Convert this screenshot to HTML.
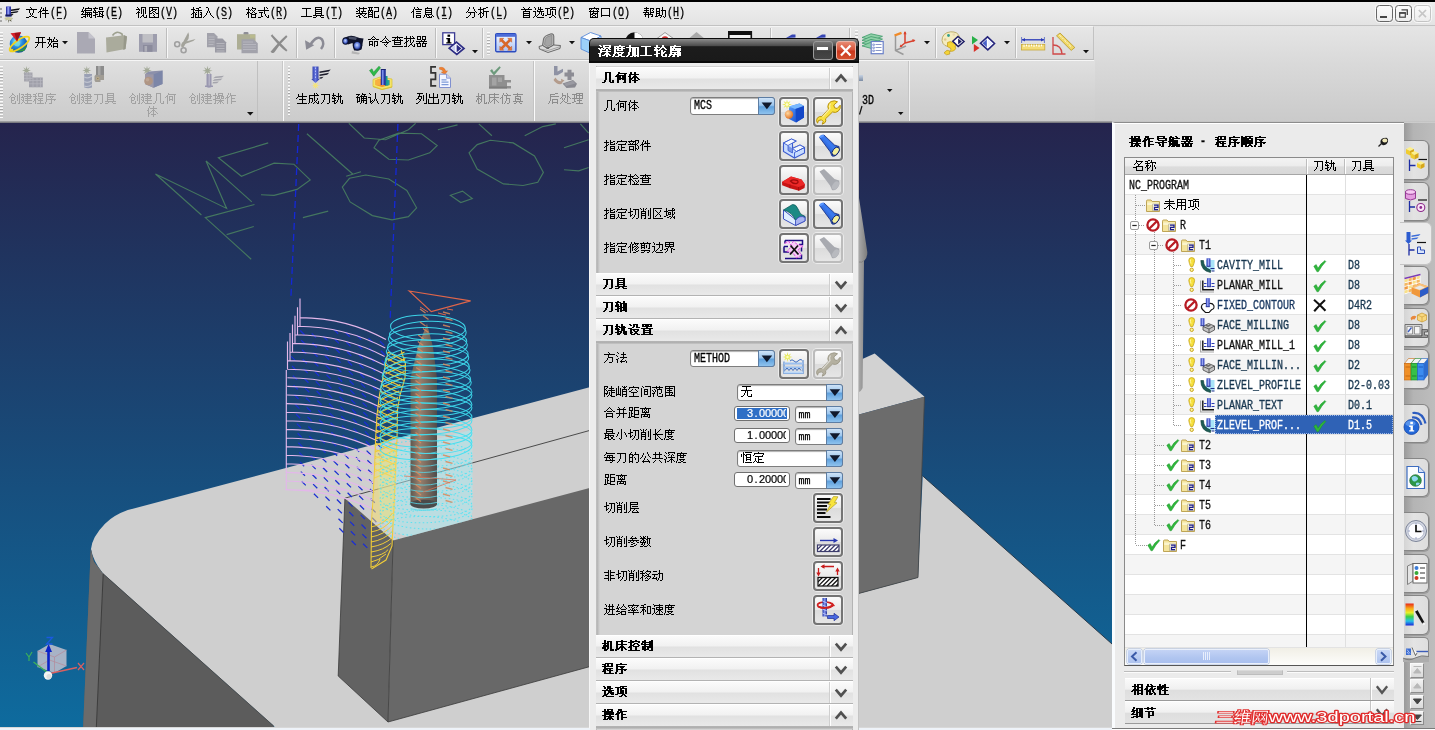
<!DOCTYPE html>
<html lang="zh"><head><meta charset="utf-8"><title>NX CAM</title>
<style>
html,body{margin:0;padding:0;background:#fff;}
body{width:1435px;height:730px;overflow:hidden;font-family:"Liberation Sans",sans-serif;font-size:12px;}
#app{position:relative;width:1435px;height:730px;overflow:hidden;background:#d8d8d8;will-change:transform;}
#app div,#app svg,#app span{position:absolute;box-sizing:border-box;}
#app svg{overflow:visible;}
.t{white-space:pre;height:14px;}
.t svg{left:0;top:0;stroke:currentColor;stroke-width:1;fill:none;shape-rendering:crispEdges;}
.m{font-family:"Liberation Mono",monospace;font-size:12px;line-height:12px;transform:scaleX(.8333);transform-origin:0 0;white-space:pre;letter-spacing:0;-webkit-text-stroke:.3px currentColor;}
.m.b{font-weight:bold;}
.n{white-space:nowrap;height:13px;line-height:13px;font-size:11px;direction:ltr;}
#app .n .d{position:static;display:inline-block;width:6px;text-align:center;-webkit-text-stroke:.2px currentColor;}
.m.s{font-size:10px;transform:none;-webkit-text-stroke:.25px currentColor;}
#app .sr{width:1px;height:1px;overflow:hidden;clip:rect(0 0 0 0);clip-path:inset(50%);opacity:0;font-size:1px;left:0;top:0;}

</style></head>
<body>
<svg width="0" height="0" style="position:absolute"><defs><path id="g12_6587" d="M4 0.5h1M5 1.5h1M0 2.5h11M3 3.5h1M7 3.5h1M3 4.5h1M7 4.5h1M3 5.5h1M7 5.5h1M4 6.5h1M6 6.5h1M4 7.5h1M6 7.5h1M5 8.5h1M3 9.5h2M6 9.5h2M0 10.5h3M8 10.5h3"/><path id="g12_4ef6" d="M3 0.5h1M7 0.5h1M3 1.5h1M5 1.5h1M7 1.5h1M2 2.5h1M5 2.5h1M7 2.5h1M2 3.5h1M4 3.5h6M1 4.5h3M7 4.5h1M0 5.5h1M2 5.5h1M7 5.5h1M2 6.5h1M4 6.5h7M2 7.5h1M7 7.5h1M2 8.5h1M7 8.5h1M2 9.5h1M7 9.5h1M2 10.5h1M7 10.5h1"/><path id="g12_7f16" d="M2 0.5h1M7 0.5h1M2 1.5h1M4 1.5h7M1 2.5h1M4 2.5h1M10 2.5h1M1 3.5h1M3 3.5h8M0 4.5h3M4 4.5h1M2 5.5h1M4 5.5h7M1 6.5h1M4 6.5h1M6 6.5h1M8 6.5h1M10 6.5h1M0 7.5h11M4 8.5h1M6 8.5h1M8 8.5h1M10 8.5h1M2 9.5h3M6 9.5h1M8 9.5h1M10 9.5h1M0 10.5h2M4 10.5h1M9 10.5h2"/><path id="g12_8f91" d="M2 0.5h1M6 0.5h4M0 1.5h5M6 1.5h1M9 1.5h1M1 2.5h1M6 2.5h4M1 3.5h2M0 4.5h1M2 4.5h1M5 4.5h6M0 5.5h5M6 5.5h1M9 5.5h1M2 6.5h1M6 6.5h2M9 6.5h1M2 7.5h3M6 7.5h1M8 7.5h2M0 8.5h3M6 8.5h1M9 8.5h2M2 9.5h1M4 9.5h6M2 10.5h1M9 10.5h1"/><path id="g12_89c6" d="M1 0.5h1M5 0.5h5M2 1.5h1M5 1.5h1M9 1.5h1M0 2.5h4M5 2.5h1M7 2.5h1M9 2.5h1M3 3.5h1M5 3.5h1M7 3.5h1M9 3.5h1M2 4.5h1M5 4.5h1M7 4.5h1M9 4.5h1M1 5.5h3M5 5.5h1M7 5.5h1M9 5.5h1M0 6.5h1M2 6.5h1M5 6.5h1M7 6.5h1M9 6.5h1M2 7.5h1M7 7.5h1M2 8.5h1M6 8.5h2M10 8.5h1M2 9.5h1M5 9.5h1M7 9.5h1M10 9.5h1M2 10.5h1M4 10.5h1M8 10.5h3"/><path id="g12_56fe" d="M1 0.5h10M1 1.5h1M4 1.5h1M10 1.5h1M1 2.5h1M4 2.5h5M10 2.5h1M1 3.5h1M3 3.5h2M7 3.5h1M10 3.5h1M1 4.5h2M5 4.5h2M10 4.5h1M1 5.5h1M4 5.5h1M7 5.5h1M10 5.5h1M1 6.5h3M5 6.5h1M8 6.5h3M1 7.5h1M6 7.5h1M10 7.5h1M1 8.5h1M5 8.5h1M10 8.5h1M1 9.5h1M6 9.5h1M10 9.5h1M1 10.5h10"/><path id="g12_63d2" d="M2 0.5h1M8 0.5h2M2 1.5h1M5 1.5h3M0 2.5h4M7 2.5h1M2 3.5h1M4 3.5h7M2 4.5h1M7 4.5h1M2 5.5h2M5 5.5h1M7 5.5h1M9 5.5h2M1 6.5h2M4 6.5h1M7 6.5h1M10 6.5h1M0 7.5h1M2 7.5h1M4 7.5h2M7 7.5h1M9 7.5h2M2 8.5h1M4 8.5h1M7 8.5h1M10 8.5h1M2 9.5h1M4 9.5h1M7 9.5h1M10 9.5h1M0 10.5h3M4 10.5h7"/><path id="g12_5165" d="M3 0.5h2M5 1.5h1M5 2.5h1M5 3.5h1M4 4.5h1M6 4.5h1M4 5.5h1M6 5.5h1M3 6.5h1M7 6.5h1M3 7.5h1M7 7.5h1M2 8.5h1M8 8.5h1M1 9.5h1M9 9.5h1M0 10.5h1M10 10.5h1"/><path id="g12_683c" d="M2 0.5h1M6 0.5h1M2 1.5h1M6 1.5h4M0 2.5h4M5 2.5h1M9 2.5h1M2 3.5h1M4 3.5h1M6 3.5h1M8 3.5h1M2 4.5h1M7 4.5h1M1 5.5h3M6 5.5h1M8 5.5h1M1 6.5h2M4 6.5h2M9 6.5h2M0 7.5h1M2 7.5h1M5 7.5h5M2 8.5h1M5 8.5h1M9 8.5h1M2 9.5h1M5 9.5h1M9 9.5h1M2 10.5h1M5 10.5h5"/><path id="g12_5f0f" d="M6 0.5h1M8 0.5h1M6 1.5h1M9 1.5h1M6 2.5h1M0 3.5h11M6 4.5h1M1 5.5h4M6 5.5h1M3 6.5h1M6 6.5h1M3 7.5h1M7 7.5h1M3 8.5h1M7 8.5h1M10 8.5h1M3 9.5h2M8 9.5h1M10 9.5h1M0 10.5h3M9 10.5h2"/><path id="g12_5de5" d="M1 1.5h9M5 2.5h1M5 3.5h1M5 4.5h1M5 5.5h1M5 6.5h1M5 7.5h1M5 8.5h1M0 9.5h11"/><path id="g12_5177" d="M2 0.5h7M2 1.5h1M8 1.5h1M2 2.5h7M2 3.5h1M8 3.5h1M2 4.5h7M2 5.5h1M8 5.5h1M2 6.5h7M2 7.5h1M8 7.5h1M0 8.5h11M3 9.5h1M7 9.5h1M0 10.5h3M8 10.5h3"/><path id="g12_88c5" d="M3 0.5h1M7 0.5h1M0 1.5h1M3 1.5h8M1 2.5h1M3 2.5h1M7 2.5h1M2 3.5h2M7 3.5h1M0 4.5h2M3 4.5h1M5 4.5h5M3 5.5h1M6 5.5h1M0 6.5h11M4 7.5h2M9 7.5h1M2 8.5h2M6 8.5h1M8 8.5h1M0 9.5h2M3 9.5h1M7 9.5h1M3 10.5h2M8 10.5h3"/><path id="g12_914d" d="M0 0.5h5M6 0.5h5M1 1.5h1M3 1.5h1M10 1.5h1M1 2.5h1M3 2.5h1M10 2.5h1M0 3.5h5M10 3.5h1M0 4.5h1M2 4.5h1M4 4.5h1M6 4.5h5M0 5.5h2M3 5.5h2M6 5.5h1M0 6.5h1M4 6.5h1M6 6.5h1M0 7.5h5M6 7.5h1M0 8.5h1M4 8.5h1M6 8.5h1M10 8.5h1M0 9.5h5M6 9.5h1M10 9.5h1M0 10.5h1M4 10.5h1M6 10.5h5"/><path id="g12_4fe1" d="M3 0.5h1M6 0.5h1M3 1.5h1M7 1.5h1M2 2.5h1M4 2.5h7M2 3.5h1M1 4.5h2M5 4.5h5M0 5.5h1M2 5.5h1M2 6.5h1M5 6.5h5M2 7.5h1M2 8.5h1M5 8.5h5M2 9.5h1M5 9.5h1M9 9.5h1M2 10.5h1M5 10.5h5"/><path id="g12_606f" d="M4 0.5h1M2 1.5h7M2 2.5h1M8 2.5h1M2 3.5h7M2 4.5h1M8 4.5h1M2 5.5h7M2 6.5h1M8 6.5h1M2 7.5h7M1 8.5h1M3 8.5h1M5 8.5h1M9 8.5h1M1 9.5h1M3 9.5h1M6 9.5h1M8 9.5h1M10 9.5h1M0 10.5h1M4 10.5h5"/><path id="g12_5206" d="M3 0.5h1M7 0.5h1M3 1.5h1M7 1.5h1M2 2.5h1M8 2.5h1M2 3.5h1M8 3.5h1M1 4.5h1M9 4.5h1M0 5.5h1M2 5.5h7M10 5.5h1M4 6.5h1M8 6.5h1M4 7.5h1M8 7.5h1M3 8.5h1M8 8.5h1M2 9.5h1M8 9.5h1M0 10.5h2M6 10.5h2"/><path id="g12_6790" d="M2 0.5h1M8 0.5h2M2 1.5h1M5 1.5h3M0 2.5h6M2 3.5h1M5 3.5h1M2 4.5h1M5 4.5h6M2 5.5h2M5 5.5h1M8 5.5h1M1 6.5h2M4 6.5h2M8 6.5h1M0 7.5h1M2 7.5h1M5 7.5h1M8 7.5h1M2 8.5h1M5 8.5h1M8 8.5h1M2 9.5h1M4 9.5h1M8 9.5h1M2 10.5h2M8 10.5h1"/><path id="g12_9996" d="M2 0.5h1M8 0.5h1M3 1.5h1M7 1.5h1M0 2.5h11M4 3.5h1M2 4.5h7M2 5.5h1M8 5.5h1M2 6.5h7M2 7.5h1M8 7.5h1M2 8.5h7M2 9.5h1M8 9.5h1M2 10.5h7"/><path id="g12_9009" d="M1 0.5h1M5 0.5h1M7 0.5h1M2 1.5h1M5 1.5h1M7 1.5h1M2 2.5h1M5 2.5h5M4 3.5h1M7 3.5h1M0 4.5h3M4 4.5h7M2 5.5h1M6 5.5h1M8 5.5h1M2 6.5h1M6 6.5h1M8 6.5h1M10 6.5h1M2 7.5h1M5 7.5h1M8 7.5h1M10 7.5h1M2 8.5h1M4 8.5h1M9 8.5h2M1 9.5h1M3 9.5h1M0 10.5h1M4 10.5h7"/><path id="g12_9879" d="M5 0.5h6M0 1.5h5M7 1.5h1M2 2.5h1M5 2.5h6M2 3.5h1M5 3.5h1M10 3.5h1M2 4.5h1M5 4.5h1M7 4.5h1M10 4.5h1M2 5.5h1M5 5.5h1M7 5.5h1M10 5.5h1M2 6.5h1M5 6.5h1M7 6.5h1M10 6.5h1M2 7.5h4M7 7.5h1M10 7.5h1M0 8.5h2M7 8.5h2M6 9.5h1M9 9.5h1M4 10.5h2M10 10.5h1"/><path id="g12_7a97" d="M6 0.5h1M1 1.5h10M1 2.5h1M3 2.5h1M8 2.5h1M10 2.5h1M2 3.5h1M5 3.5h1M9 3.5h1M1 4.5h10M2 5.5h1M5 5.5h1M9 5.5h1M2 6.5h1M4 6.5h6M2 7.5h3M7 7.5h1M9 7.5h1M2 8.5h1M5 8.5h2M9 8.5h1M2 9.5h1M4 9.5h1M7 9.5h1M9 9.5h1M2 10.5h8"/><path id="g12_53e3" d="M1 1.5h9M1 2.5h1M9 2.5h1M1 3.5h1M9 3.5h1M1 4.5h1M9 4.5h1M1 5.5h1M9 5.5h1M1 6.5h1M9 6.5h1M1 7.5h1M9 7.5h1M1 8.5h9M1 9.5h1M9 9.5h1"/><path id="g12_5e2e" d="M3 0.5h1M1 1.5h5M7 1.5h4M3 2.5h1M7 2.5h1M10 2.5h1M1 3.5h5M7 3.5h1M9 3.5h1M3 4.5h1M7 4.5h1M10 4.5h1M0 5.5h6M7 5.5h4M2 6.5h1M5 6.5h1M7 6.5h1M1 7.5h9M2 8.5h1M5 8.5h1M9 8.5h1M2 9.5h1M5 9.5h1M8 9.5h2M5 10.5h1"/><path id="g12_52a9" d="M7 0.5h1M1 1.5h4M7 1.5h1M1 2.5h1M4 2.5h1M7 2.5h1M1 3.5h1M4 3.5h1M6 3.5h5M1 4.5h4M7 4.5h1M10 4.5h1M1 5.5h1M4 5.5h1M7 5.5h1M10 5.5h1M1 6.5h4M7 6.5h1M10 6.5h1M1 7.5h1M4 7.5h1M7 7.5h1M10 7.5h1M1 8.5h1M3 8.5h4M10 8.5h1M0 9.5h3M6 9.5h1M8 9.5h1M10 9.5h1M5 10.5h1M9 10.5h1"/><path id="g12_5f00" d="M1 0.5h9M3 1.5h1M7 1.5h1M3 2.5h1M7 2.5h1M3 3.5h1M7 3.5h1M3 4.5h1M7 4.5h1M0 5.5h11M3 6.5h1M7 6.5h1M2 7.5h1M7 7.5h1M2 8.5h1M7 8.5h1M1 9.5h1M7 9.5h1M0 10.5h1M7 10.5h1"/><path id="g12_59cb" d="M2 0.5h1M7 0.5h1M2 1.5h1M7 1.5h1M0 2.5h5M6 2.5h1M9 2.5h1M2 3.5h1M4 3.5h1M6 3.5h1M10 3.5h1M2 4.5h1M4 4.5h7M1 5.5h1M4 5.5h1M1 6.5h1M3 6.5h1M6 6.5h5M2 7.5h2M6 7.5h1M10 7.5h1M2 8.5h1M4 8.5h1M6 8.5h1M10 8.5h1M1 9.5h1M4 9.5h1M6 9.5h5M0 10.5h1M6 10.5h1M10 10.5h1"/><path id="g12_547d" d="M5 0.5h1M4 1.5h1M6 1.5h1M3 2.5h1M7 2.5h1M0 3.5h3M4 3.5h3M8 3.5h3M1 5.5h4M6 5.5h4M1 6.5h1M4 6.5h1M6 6.5h1M9 6.5h1M1 7.5h1M4 7.5h1M6 7.5h1M9 7.5h1M1 8.5h4M6 8.5h1M9 8.5h1M1 9.5h1M4 9.5h1M6 9.5h1M8 9.5h2M6 10.5h1"/><path id="g12_4ee4" d="M5 0.5h1M5 1.5h1M4 2.5h1M6 2.5h1M3 3.5h1M7 3.5h1M2 4.5h1M5 4.5h1M8 4.5h1M0 5.5h2M6 5.5h1M9 5.5h2M2 6.5h7M7 7.5h1M4 8.5h1M6 8.5h1M5 9.5h1M6 10.5h1"/><path id="g12_67e5" d="M5 0.5h1M0 1.5h11M3 2.5h1M5 2.5h1M7 2.5h1M2 3.5h1M5 3.5h1M8 3.5h1M0 4.5h11M2 5.5h1M8 5.5h1M2 6.5h7M2 7.5h1M8 7.5h1M2 8.5h7M0 10.5h11"/><path id="g12_627e" d="M2 0.5h1M6 0.5h1M8 0.5h1M2 1.5h1M6 1.5h1M9 1.5h1M0 2.5h11M2 3.5h1M6 3.5h1M2 4.5h1M4 4.5h1M6 4.5h1M9 4.5h1M2 5.5h2M6 5.5h1M9 5.5h1M1 6.5h2M6 6.5h1M8 6.5h1M0 7.5h1M2 7.5h1M7 7.5h1M2 8.5h1M6 8.5h2M10 8.5h1M2 9.5h1M5 9.5h1M8 9.5h1M10 9.5h1M0 10.5h3M4 10.5h1M9 10.5h2"/><path id="g12_5668" d="M1 0.5h4M6 0.5h4M1 1.5h1M4 1.5h1M6 1.5h1M9 1.5h1M1 2.5h1M4 2.5h1M6 2.5h1M9 2.5h1M1 3.5h4M6 3.5h4M5 4.5h1M8 4.5h1M0 5.5h11M3 6.5h1M7 6.5h1M0 7.5h5M6 7.5h5M1 8.5h1M4 8.5h1M6 8.5h1M9 8.5h1M1 9.5h1M4 9.5h1M6 9.5h1M9 9.5h1M1 10.5h4M6 10.5h4"/><path id="g12_521b" d="M3 0.5h1M10 0.5h1M3 1.5h2M10 1.5h1M2 2.5h1M5 2.5h1M8 2.5h1M10 2.5h1M1 3.5h1M6 3.5h1M8 3.5h1M10 3.5h1M0 4.5h1M2 4.5h4M8 4.5h1M10 4.5h1M2 5.5h1M5 5.5h1M8 5.5h1M10 5.5h1M2 6.5h1M5 6.5h1M8 6.5h1M10 6.5h1M2 7.5h3M8 7.5h1M10 7.5h1M2 8.5h1M6 8.5h1M10 8.5h1M2 9.5h1M6 9.5h1M10 9.5h1M3 10.5h4M9 10.5h2"/><path id="g12_5efa" d="M6 0.5h1M0 1.5h3M4 1.5h6M2 2.5h1M6 2.5h1M9 2.5h1M1 3.5h1M3 3.5h8M0 4.5h3M6 4.5h1M9 4.5h1M2 5.5h1M4 5.5h6M0 6.5h1M2 6.5h1M6 6.5h1M1 7.5h2M4 7.5h7M2 8.5h1M6 8.5h1M1 9.5h1M3 9.5h1M6 9.5h1M0 10.5h1M4 10.5h7"/><path id="g12_7a0b" d="M3 0.5h1M5 0.5h5M0 1.5h3M5 1.5h1M9 1.5h1M2 2.5h1M5 2.5h1M9 2.5h1M0 3.5h4M5 3.5h5M2 4.5h1M2 5.5h2M5 5.5h5M1 6.5h2M4 6.5h1M7 6.5h1M1 7.5h2M5 7.5h5M0 8.5h1M2 8.5h1M7 8.5h1M2 9.5h1M7 9.5h1M2 10.5h1M4 10.5h7"/><path id="g12_5e8f" d="M5 0.5h1M1 1.5h10M1 2.5h1M1 3.5h1M3 3.5h6M1 4.5h1M5 4.5h1M7 4.5h1M1 5.5h1M6 5.5h1M1 6.5h10M1 7.5h1M6 7.5h1M9 7.5h1M1 8.5h1M6 8.5h1M0 9.5h1M6 9.5h1M0 10.5h1M4 10.5h3"/><path id="g12_5200" d="M1 1.5h9M4 2.5h1M9 2.5h1M4 3.5h1M9 3.5h1M4 4.5h1M9 4.5h1M4 5.5h1M9 5.5h1M4 6.5h1M9 6.5h1M3 7.5h1M9 7.5h1M3 8.5h1M9 8.5h1M2 9.5h1M9 9.5h1M1 10.5h1M7 10.5h2"/><path id="g12_51e0" d="M3 0.5h5M3 1.5h1M7 1.5h1M3 2.5h1M7 2.5h1M3 3.5h1M7 3.5h1M3 4.5h1M7 4.5h1M3 5.5h1M7 5.5h1M3 6.5h1M7 6.5h1M3 7.5h1M7 7.5h1M2 8.5h1M7 8.5h1M10 8.5h1M2 9.5h1M7 9.5h1M10 9.5h1M0 10.5h2M8 10.5h3"/><path id="g12_4f55" d="M3 0.5h1M3 1.5h8M2 2.5h1M9 2.5h1M1 3.5h2M4 3.5h4M9 3.5h1M0 4.5h1M2 4.5h1M4 4.5h1M7 4.5h1M9 4.5h1M2 5.5h1M4 5.5h1M7 5.5h1M9 5.5h1M2 6.5h1M4 6.5h4M9 6.5h1M2 7.5h1M4 7.5h1M7 7.5h1M9 7.5h1M2 8.5h1M9 8.5h1M2 9.5h1M9 9.5h1M2 10.5h1M8 10.5h2"/><path id="g12_4f53" d="M2 0.5h1M6 0.5h1M2 1.5h1M6 1.5h1M1 2.5h1M3 2.5h7M1 3.5h1M6 3.5h1M0 4.5h2M5 4.5h3M1 5.5h1M4 5.5h1M6 5.5h1M8 5.5h1M1 6.5h1M3 6.5h1M6 6.5h1M9 6.5h1M1 7.5h2M6 7.5h1M10 7.5h1M1 8.5h1M4 8.5h5M1 9.5h1M6 9.5h1M1 10.5h1M6 10.5h1"/><path id="g12_64cd" d="M2 0.5h1M5 0.5h5M2 1.5h1M5 1.5h1M9 1.5h1M0 2.5h4M5 2.5h5M2 3.5h1M4 3.5h3M8 3.5h3M2 4.5h1M4 4.5h1M6 4.5h1M8 4.5h1M10 4.5h1M2 5.5h5M8 5.5h3M0 6.5h3M7 6.5h1M2 7.5h9M2 8.5h1M6 8.5h3M2 9.5h1M5 9.5h1M7 9.5h1M9 9.5h1M1 10.5h2M4 10.5h1M7 10.5h1M10 10.5h1"/><path id="g12_4f5c" d="M3 0.5h1M5 0.5h1M3 1.5h1M5 1.5h1M2 2.5h1M5 2.5h6M2 3.5h1M4 3.5h1M6 3.5h1M1 4.5h3M6 4.5h1M0 5.5h1M2 5.5h1M6 5.5h4M2 6.5h1M6 6.5h1M2 7.5h1M6 7.5h1M2 8.5h1M6 8.5h5M2 9.5h1M6 9.5h1M2 10.5h1M6 10.5h1"/><path id="g12_751f" d="M6 0.5h1M2 1.5h1M6 1.5h1M2 2.5h1M6 2.5h1M2 3.5h9M1 4.5h1M6 4.5h1M0 5.5h1M6 5.5h1M3 6.5h7M6 7.5h1M6 8.5h1M6 9.5h1M1 10.5h10"/><path id="g12_6210" d="M6 0.5h1M8 0.5h1M6 1.5h1M9 1.5h1M1 2.5h10M1 3.5h1M6 3.5h1M1 4.5h1M6 4.5h1M1 5.5h4M6 5.5h1M9 5.5h1M1 6.5h1M4 6.5h1M6 6.5h1M9 6.5h1M1 7.5h1M4 7.5h1M6 7.5h1M8 7.5h1M1 8.5h1M4 8.5h1M7 8.5h1M10 8.5h1M1 9.5h1M3 9.5h1M6 9.5h1M8 9.5h1M10 9.5h1M0 10.5h1M5 10.5h1M9 10.5h2"/><path id="g12_8f68" d="M1 0.5h1M6 0.5h1M1 1.5h1M6 1.5h1M0 2.5h4M6 2.5h1M8 2.5h1M1 3.5h1M4 3.5h6M0 4.5h1M2 4.5h1M6 4.5h1M8 4.5h1M0 5.5h4M6 5.5h1M8 5.5h1M2 6.5h1M6 6.5h1M8 6.5h1M2 7.5h2M5 7.5h1M8 7.5h1M10 7.5h1M0 8.5h3M5 8.5h1M8 8.5h1M10 8.5h1M2 9.5h1M4 9.5h1M8 9.5h1M10 9.5h1M2 10.5h2M9 10.5h2"/><path id="g12_786e" d="M6 0.5h1M0 1.5h4M6 1.5h4M2 2.5h1M5 2.5h1M8 2.5h1M1 3.5h1M4 3.5h7M0 4.5h4M5 4.5h1M7 4.5h1M10 4.5h1M1 5.5h1M3 5.5h1M5 5.5h6M1 6.5h1M3 6.5h1M5 6.5h1M7 6.5h1M10 6.5h1M1 7.5h1M3 7.5h1M5 7.5h6M1 8.5h3M5 8.5h1M7 8.5h1M10 8.5h1M1 9.5h1M5 9.5h1M7 9.5h1M10 9.5h1M4 10.5h1M9 10.5h2"/><path id="g12_8ba4" d="M1 0.5h1M7 0.5h1M2 1.5h1M7 1.5h1M7 2.5h1M7 3.5h1M0 4.5h3M7 4.5h1M2 5.5h1M7 5.5h1M2 6.5h1M6 6.5h1M8 6.5h1M2 7.5h1M4 7.5h1M6 7.5h1M8 7.5h1M2 8.5h2M5 8.5h1M9 8.5h1M2 9.5h1M4 9.5h1M9 9.5h1M3 10.5h1M10 10.5h1"/><path id="g12_5217" d="M1 0.5h6M10 0.5h1M3 1.5h1M10 1.5h1M3 2.5h1M7 2.5h1M10 2.5h1M2 3.5h4M7 3.5h1M10 3.5h1M2 4.5h1M5 4.5h1M7 4.5h1M10 4.5h1M1 5.5h2M5 5.5h1M7 5.5h1M10 5.5h1M0 6.5h1M3 6.5h2M7 6.5h1M10 6.5h1M4 7.5h1M7 7.5h1M10 7.5h1M3 8.5h1M10 8.5h1M2 9.5h1M10 9.5h1M0 10.5h2M8 10.5h3"/><path id="g12_51fa" d="M5 0.5h1M1 1.5h1M5 1.5h1M9 1.5h1M1 2.5h1M5 2.5h1M9 2.5h1M1 3.5h1M5 3.5h1M9 3.5h1M1 4.5h9M5 5.5h1M0 6.5h1M5 6.5h1M10 6.5h1M0 7.5h1M5 7.5h1M10 7.5h1M0 8.5h1M5 8.5h1M10 8.5h1M0 9.5h1M5 9.5h1M10 9.5h1M0 10.5h11"/><path id="g12_673a" d="M2 0.5h1M2 1.5h1M5 1.5h4M2 2.5h1M5 2.5h1M8 2.5h1M0 3.5h6M8 3.5h1M2 4.5h1M5 4.5h1M8 4.5h1M1 5.5h3M5 5.5h1M8 5.5h1M1 6.5h2M4 6.5h2M8 6.5h1M0 7.5h1M2 7.5h1M5 7.5h1M8 7.5h1M0 8.5h1M2 8.5h1M5 8.5h1M8 8.5h1M2 9.5h1M4 9.5h1M8 9.5h1M10 9.5h1M2 10.5h2M8 10.5h3"/><path id="g12_5e8a" d="M6 0.5h1M1 1.5h10M1 2.5h1M6 2.5h1M1 3.5h1M6 3.5h1M1 4.5h10M1 5.5h1M6 5.5h1M1 6.5h1M5 6.5h3M1 7.5h1M4 7.5h1M6 7.5h1M8 7.5h1M1 8.5h1M3 8.5h1M6 8.5h1M9 8.5h1M0 9.5h1M2 9.5h1M6 9.5h1M10 9.5h1M0 10.5h1M6 10.5h1"/><path id="g12_4eff" d="M3 0.5h1M6 0.5h1M3 1.5h1M7 1.5h1M2 2.5h1M4 2.5h7M2 3.5h1M6 3.5h1M1 4.5h2M6 4.5h1M0 5.5h1M2 5.5h1M6 5.5h4M2 6.5h1M6 6.5h1M9 6.5h1M2 7.5h1M6 7.5h1M9 7.5h1M2 8.5h1M5 8.5h1M9 8.5h1M2 9.5h1M5 9.5h1M9 9.5h1M2 10.5h1M4 10.5h1M7 10.5h2"/><path id="g12_771f" d="M5 0.5h1M1 1.5h10M5 2.5h1M3 3.5h6M3 4.5h1M8 4.5h1M3 5.5h4M8 5.5h1M3 6.5h1M5 6.5h4M3 7.5h1M8 7.5h1M1 8.5h10M4 9.5h1M7 9.5h1M2 10.5h2M8 10.5h2"/><path id="g12_540e" d="M7 0.5h3M2 1.5h5M2 2.5h1M2 3.5h9M2 4.5h1M2 5.5h1M2 6.5h1M4 6.5h6M2 7.5h1M4 7.5h1M9 7.5h1M1 8.5h1M4 8.5h1M9 8.5h1M1 9.5h1M4 9.5h6M0 10.5h1M4 10.5h1M9 10.5h1"/><path id="g12_5904" d="M2 0.5h1M7 0.5h1M2 1.5h1M7 1.5h1M2 2.5h4M7 2.5h1M2 3.5h1M5 3.5h1M7 3.5h2M1 4.5h1M5 4.5h1M7 4.5h1M9 4.5h1M0 5.5h1M2 5.5h1M4 5.5h1M7 5.5h1M10 5.5h1M2 6.5h1M4 6.5h1M7 6.5h1M3 7.5h1M7 7.5h1M2 8.5h1M4 8.5h1M7 8.5h1M1 9.5h1M5 9.5h2M0 10.5h1M7 10.5h4"/><path id="g12_7406" d="M4 0.5h7M0 1.5h5M7 1.5h1M10 1.5h1M2 2.5h1M4 2.5h7M2 3.5h1M4 3.5h1M7 3.5h1M10 3.5h1M2 4.5h1M4 4.5h1M7 4.5h1M10 4.5h1M0 5.5h11M2 6.5h1M7 6.5h1M2 7.5h1M5 7.5h5M2 8.5h2M7 8.5h1M0 9.5h2M7 9.5h1M4 10.5h7"/><path id="g13_6df1" d="M1 0.5h1M5 0.5h7M2 1.5h1M5 1.5h1M11 1.5h1M5 2.5h1M7 2.5h1M9 2.5h1M11 2.5h1M0 3.5h1M3 3.5h1M6 3.5h1M10 3.5h1M1 4.5h1M3 4.5h1M5 4.5h1M8 4.5h1M11 4.5h1M2 5.5h1M8 5.5h1M2 6.5h1M4 6.5h8M2 7.5h1M8 7.5h1M0 8.5h2M7 8.5h3M1 9.5h1M6 9.5h1M8 9.5h1M10 9.5h1M1 10.5h1M4 10.5h2M8 10.5h1M11 10.5h1M1 11.5h1M8 11.5h1"/><path id="g13_5ea6" d="M7 0.5h1M2 1.5h10M2 2.5h1M5 2.5h1M9 2.5h1M2 3.5h10M2 4.5h1M5 4.5h1M9 4.5h1M2 5.5h1M5 5.5h5M2 6.5h1M2 7.5h1M4 7.5h7M2 8.5h1M5 8.5h1M9 8.5h1M1 9.5h1M6 9.5h1M8 9.5h1M1 10.5h1M6 10.5h3M0 11.5h1M3 11.5h3M9 11.5h3"/><path id="g13_52a0" d="M3 0.5h1M3 1.5h1M0 2.5h7M8 2.5h4M3 3.5h1M6 3.5h1M8 3.5h1M11 3.5h1M3 4.5h1M6 4.5h1M8 4.5h1M11 4.5h1M3 5.5h1M6 5.5h1M8 5.5h1M11 5.5h1M3 6.5h1M6 6.5h1M8 6.5h1M11 6.5h1M2 7.5h1M6 7.5h1M8 7.5h1M11 7.5h1M2 8.5h1M6 8.5h1M8 8.5h1M11 8.5h1M2 9.5h1M6 9.5h1M8 9.5h1M11 9.5h1M1 10.5h1M6 10.5h1M8 10.5h4M0 11.5h1M4 11.5h2M8 11.5h1M11 11.5h1"/><path id="g13_5de5" d="M1 1.5h9M5 2.5h1M5 3.5h1M5 4.5h1M5 5.5h1M5 6.5h1M5 7.5h1M5 8.5h1M5 9.5h1M0 10.5h11"/><path id="g13_8f6e" d="M2 0.5h1M8 0.5h1M2 1.5h1M8 1.5h1M0 2.5h5M7 2.5h1M9 2.5h1M1 3.5h1M6 3.5h1M10 3.5h1M0 4.5h1M2 4.5h1M5 4.5h1M11 4.5h1M0 5.5h5M7 5.5h1M2 6.5h1M7 6.5h1M10 6.5h1M2 7.5h1M7 7.5h1M9 7.5h1M2 8.5h3M7 8.5h2M0 9.5h3M7 9.5h1M11 9.5h1M2 10.5h1M7 10.5h1M11 10.5h1M2 11.5h1M8 11.5h4"/><path id="g13_5ed3" d="M6 0.5h1M2 1.5h10M2 2.5h1M5 2.5h1M2 3.5h10M2 4.5h1M4 4.5h1M7 4.5h1M9 4.5h1M11 4.5h1M2 5.5h1M4 5.5h4M9 5.5h1M11 5.5h1M2 6.5h1M9 6.5h2M2 7.5h6M9 7.5h1M11 7.5h1M2 8.5h1M6 8.5h1M9 8.5h1M11 8.5h1M1 9.5h1M3 9.5h5M9 9.5h1M11 9.5h1M1 10.5h1M5 10.5h1M9 10.5h3M0 11.5h1M4 11.5h2M9 11.5h1"/><path id="g12_8f74" d="M2 0.5h1M8 0.5h1M0 1.5h5M8 1.5h1M1 2.5h1M5 2.5h6M1 3.5h2M5 3.5h1M8 3.5h1M10 3.5h1M0 4.5h1M2 4.5h1M5 4.5h1M8 4.5h1M10 4.5h1M0 5.5h6M8 5.5h1M10 5.5h1M2 6.5h1M5 6.5h6M2 7.5h4M8 7.5h1M10 7.5h1M0 8.5h3M5 8.5h1M8 8.5h1M10 8.5h1M2 9.5h1M5 9.5h6M2 10.5h1M5 10.5h1M10 10.5h1"/><path id="g12_8bbe" d="M1 0.5h1M5 0.5h4M2 1.5h1M5 1.5h1M8 1.5h1M5 2.5h1M8 2.5h1M4 3.5h1M8 3.5h3M0 4.5h3M2 5.5h1M4 5.5h6M2 6.5h1M5 6.5h1M9 6.5h1M2 7.5h1M6 7.5h1M8 7.5h1M2 8.5h2M7 8.5h1M2 9.5h1M6 9.5h1M8 9.5h1M3 10.5h3M9 10.5h2"/><path id="g12_7f6e" d="M1 0.5h9M1 1.5h1M4 1.5h1M6 1.5h1M9 1.5h1M1 2.5h9M5 3.5h1M0 4.5h11M2 5.5h1M8 5.5h1M2 6.5h7M2 7.5h1M8 7.5h1M2 8.5h7M2 9.5h1M8 9.5h1M0 10.5h11"/><path id="g12_63a7" d="M2 0.5h1M7 0.5h1M2 1.5h1M4 1.5h7M0 2.5h5M10 2.5h1M2 3.5h1M6 3.5h1M8 3.5h1M2 4.5h1M5 4.5h1M9 4.5h1M2 5.5h3M10 5.5h1M1 6.5h2M5 6.5h5M0 7.5h1M2 7.5h1M7 7.5h1M2 8.5h1M7 8.5h1M2 9.5h1M7 9.5h1M0 10.5h3M4 10.5h7"/><path id="g12_5236" d="M3 0.5h1M10 0.5h1M1 1.5h1M3 1.5h1M8 1.5h1M10 1.5h1M1 2.5h6M8 2.5h1M10 2.5h1M0 3.5h1M3 3.5h1M8 3.5h1M10 3.5h1M0 4.5h7M8 4.5h1M10 4.5h1M3 5.5h1M8 5.5h1M10 5.5h1M1 6.5h6M8 6.5h1M10 6.5h1M1 7.5h1M3 7.5h1M6 7.5h1M8 7.5h1M10 7.5h1M1 8.5h1M3 8.5h1M6 8.5h1M10 8.5h1M1 9.5h1M3 9.5h1M5 9.5h2M10 9.5h1M3 10.5h1M8 10.5h3"/><path id="g12_6307" d="M2 0.5h1M6 0.5h1M2 1.5h1M6 1.5h1M9 1.5h2M0 2.5h5M6 2.5h3M2 3.5h1M6 3.5h1M10 3.5h1M2 4.5h1M4 4.5h1M6 4.5h5M2 5.5h2M1 6.5h2M6 6.5h5M0 7.5h1M2 7.5h1M6 7.5h1M10 7.5h1M2 8.5h1M6 8.5h5M2 9.5h1M6 9.5h1M10 9.5h1M0 10.5h3M6 10.5h5"/><path id="g12_5b9a" d="M5 0.5h1M1 1.5h10M1 2.5h1M10 2.5h1M0 3.5h1M9 3.5h1M2 4.5h8M5 5.5h1M2 6.5h1M5 6.5h1M2 7.5h1M5 7.5h4M2 8.5h1M5 8.5h1M1 9.5h1M3 9.5h1M5 9.5h1M0 10.5h1M4 10.5h7"/><path id="g12_90e8" d="M3 0.5h1M7 0.5h4M0 1.5h8M10 1.5h1M1 2.5h1M5 2.5h1M7 2.5h1M10 2.5h1M2 3.5h1M4 3.5h1M7 3.5h1M9 3.5h1M0 4.5h9M7 5.5h1M9 5.5h1M1 6.5h5M7 6.5h1M10 6.5h1M1 7.5h1M5 7.5h1M7 7.5h1M10 7.5h1M1 8.5h1M5 8.5h1M7 8.5h2M10 8.5h1M1 9.5h5M7 9.5h1M9 9.5h1M1 10.5h1M5 10.5h1M7 10.5h1"/><path id="g12_68c0" d="M2 0.5h1M7 0.5h1M2 1.5h1M6 1.5h1M8 1.5h1M0 2.5h6M9 2.5h1M2 3.5h1M4 3.5h1M10 3.5h1M2 4.5h1M5 4.5h5M1 5.5h3M1 6.5h2M4 6.5h1M7 6.5h1M10 6.5h1M0 7.5h1M2 7.5h1M5 7.5h1M8 7.5h1M10 7.5h1M2 8.5h1M6 8.5h1M9 8.5h1M2 9.5h1M6 9.5h1M8 9.5h1M2 10.5h1M4 10.5h7"/><path id="g12_5207" d="M2 0.5h1M2 1.5h1M5 1.5h6M2 2.5h1M7 2.5h1M10 2.5h1M2 3.5h3M7 3.5h1M10 3.5h1M0 4.5h3M7 4.5h1M10 4.5h1M2 5.5h1M7 5.5h1M10 5.5h1M2 6.5h1M4 6.5h1M7 6.5h1M10 6.5h1M2 7.5h2M6 7.5h1M10 7.5h1M2 8.5h1M6 8.5h1M10 8.5h1M5 9.5h1M10 9.5h1M4 10.5h1M8 10.5h2"/><path id="g12_524a" d="M0 0.5h1M3 0.5h1M6 0.5h1M10 0.5h1M1 1.5h1M3 1.5h1M5 1.5h1M10 1.5h1M3 2.5h1M8 2.5h1M10 2.5h1M1 3.5h5M8 3.5h1M10 3.5h1M1 4.5h1M5 4.5h1M8 4.5h1M10 4.5h1M1 5.5h5M8 5.5h1M10 5.5h1M1 6.5h1M5 6.5h1M8 6.5h1M10 6.5h1M1 7.5h5M8 7.5h1M10 7.5h1M1 8.5h1M5 8.5h1M10 8.5h1M1 9.5h1M5 9.5h1M10 9.5h1M1 10.5h1M4 10.5h2M8 10.5h3"/><path id="g12_533a" d="M1 0.5h9M1 1.5h1M1 2.5h1M3 2.5h1M8 2.5h1M1 3.5h1M4 3.5h1M8 3.5h1M1 4.5h1M5 4.5h1M7 4.5h1M1 5.5h1M6 5.5h1M1 6.5h1M5 6.5h1M7 6.5h1M1 7.5h1M4 7.5h1M8 7.5h1M1 8.5h1M3 8.5h1M8 8.5h1M1 9.5h1M1 10.5h10"/><path id="g12_57df" d="M2 0.5h1M8 0.5h2M2 1.5h1M8 1.5h1M10 1.5h1M2 2.5h1M4 2.5h7M0 3.5h4M8 3.5h1M2 4.5h1M4 4.5h3M8 4.5h1M10 4.5h1M2 5.5h1M4 5.5h1M6 5.5h1M8 5.5h1M10 5.5h1M2 6.5h1M4 6.5h3M8 6.5h2M2 7.5h2M8 7.5h1M0 8.5h2M5 8.5h2M8 8.5h1M10 8.5h1M3 9.5h2M7 9.5h1M9 9.5h2M6 10.5h1M10 10.5h1"/><path id="g12_4fee" d="M3 0.5h1M6 0.5h1M3 1.5h1M6 1.5h5M2 2.5h1M4 2.5h2M7 2.5h1M9 2.5h1M2 3.5h1M4 3.5h1M8 3.5h1M1 4.5h2M4 4.5h1M6 4.5h2M9 4.5h1M0 5.5h1M2 5.5h1M4 5.5h2M8 5.5h1M10 5.5h1M2 6.5h1M4 6.5h1M7 6.5h1M9 6.5h1M2 7.5h1M4 7.5h1M6 7.5h1M8 7.5h1M2 8.5h1M4 8.5h1M7 8.5h1M10 8.5h1M2 9.5h1M8 9.5h2M2 10.5h1M5 10.5h3"/><path id="g12_526a" d="M3 0.5h1M7 0.5h1M0 1.5h11M1 2.5h1M4 2.5h1M9 2.5h1M1 3.5h4M6 3.5h1M9 3.5h1M1 4.5h1M4 4.5h1M6 4.5h1M9 4.5h1M1 5.5h4M6 5.5h1M9 5.5h1M1 6.5h1M4 6.5h1M8 6.5h2M1 8.5h9M4 9.5h1M9 9.5h1M1 10.5h3M7 10.5h2"/><path id="g12_8fb9" d="M1 0.5h1M7 0.5h1M2 1.5h1M7 1.5h1M2 2.5h1M4 2.5h7M7 3.5h1M10 3.5h1M0 4.5h3M7 4.5h1M10 4.5h1M2 5.5h1M7 5.5h1M10 5.5h1M2 6.5h1M6 6.5h1M10 6.5h1M2 7.5h1M5 7.5h1M10 7.5h1M2 8.5h1M4 8.5h1M8 8.5h2M1 9.5h1M3 9.5h1M0 10.5h1M4 10.5h7"/><path id="g12_754c" d="M1 0.5h9M1 1.5h1M5 1.5h1M9 1.5h1M1 2.5h9M1 3.5h1M5 3.5h1M9 3.5h1M1 4.5h9M4 5.5h1M6 5.5h1M2 6.5h2M7 6.5h2M0 7.5h2M3 7.5h1M7 7.5h1M9 7.5h2M3 8.5h1M7 8.5h1M2 9.5h1M7 9.5h1M1 10.5h1M7 10.5h1"/><path id="g12_65b9" d="M4 0.5h1M5 1.5h1M0 2.5h11M4 3.5h1M4 4.5h1M4 5.5h5M3 6.5h1M8 6.5h1M3 7.5h1M8 7.5h1M2 8.5h1M8 8.5h1M1 9.5h1M8 9.5h1M0 10.5h1M5 10.5h3"/><path id="g12_6cd5" d="M1 0.5h1M7 0.5h1M2 1.5h1M7 1.5h1M5 2.5h5M0 3.5h1M7 3.5h1M1 4.5h1M7 4.5h1M4 5.5h7M2 6.5h1M7 6.5h1M0 7.5h2M6 7.5h1M1 8.5h1M5 8.5h1M9 8.5h1M1 9.5h1M4 9.5h5M10 9.5h1M1 10.5h1M5 10.5h1M10 10.5h1"/><path id="g12_9661" d="M0 0.5h4M7 0.5h1M0 1.5h1M3 1.5h1M7 1.5h1M0 2.5h1M2 2.5h1M5 2.5h5M0 3.5h2M7 3.5h1M0 4.5h1M2 4.5h1M4 4.5h7M0 5.5h1M3 5.5h1M7 5.5h1M0 6.5h1M3 6.5h1M5 6.5h1M7 6.5h4M0 7.5h4M5 7.5h1M7 7.5h1M0 8.5h1M2 8.5h1M5 8.5h1M7 8.5h1M0 9.5h1M4 9.5h1M6 9.5h2M0 10.5h1M3 10.5h1M7 10.5h4"/><path id="g12_5ced" d="M2 0.5h1M6 0.5h1M8 0.5h1M10 0.5h1M2 1.5h1M7 1.5h3M0 2.5h1M2 2.5h1M4 2.5h1M8 2.5h1M0 3.5h1M2 3.5h1M4 3.5h1M6 3.5h5M0 4.5h1M2 4.5h1M4 4.5h1M6 4.5h1M10 4.5h1M0 5.5h1M2 5.5h1M4 5.5h1M6 5.5h5M0 6.5h1M2 6.5h1M4 6.5h1M6 6.5h1M10 6.5h1M0 7.5h1M2 7.5h1M4 7.5h1M6 7.5h1M10 7.5h1M0 8.5h5M6 8.5h5M0 9.5h1M4 9.5h1M6 9.5h1M10 9.5h1M6 10.5h1M9 10.5h2"/><path id="g12_7a7a" d="M5 0.5h1M1 1.5h10M1 2.5h1M10 2.5h1M0 3.5h1M4 3.5h1M7 3.5h1M3 4.5h1M8 4.5h1M1 5.5h2M9 5.5h1M3 6.5h6M5 7.5h1M5 8.5h1M5 9.5h1M1 10.5h10"/><path id="g12_95f4" d="M2 0.5h1M5 0.5h6M3 1.5h1M10 1.5h1M1 2.5h1M10 2.5h1M1 3.5h1M4 3.5h4M10 3.5h1M1 4.5h1M4 4.5h1M7 4.5h1M10 4.5h1M1 5.5h1M4 5.5h4M10 5.5h1M1 6.5h1M4 6.5h1M7 6.5h1M10 6.5h1M1 7.5h1M4 7.5h1M7 7.5h1M10 7.5h1M1 8.5h1M4 8.5h4M10 8.5h1M1 9.5h1M10 9.5h1M1 10.5h1M8 10.5h3"/><path id="g12_8303" d="M4 0.5h1M7 0.5h1M0 1.5h11M4 2.5h1M7 2.5h1M2 3.5h1M5 3.5h5M0 4.5h1M3 4.5h1M5 4.5h1M9 4.5h1M1 5.5h1M3 5.5h1M5 5.5h1M9 5.5h1M2 6.5h1M5 6.5h1M9 6.5h1M0 7.5h3M5 7.5h1M7 7.5h2M1 8.5h1M5 8.5h1M10 8.5h1M1 9.5h1M5 9.5h1M10 9.5h1M1 10.5h1M6 10.5h5"/><path id="g12_56f4" d="M1 0.5h10M1 1.5h1M5 1.5h1M10 1.5h1M1 2.5h8M10 2.5h1M1 3.5h1M5 3.5h1M10 3.5h1M1 4.5h1M3 4.5h5M10 4.5h1M1 5.5h1M5 5.5h1M10 5.5h1M1 6.5h8M10 6.5h1M1 7.5h1M5 7.5h1M8 7.5h1M10 7.5h1M1 8.5h1M5 8.5h1M7 8.5h1M10 8.5h1M1 9.5h10M1 10.5h1M10 10.5h1"/><path id="g12_65e0" d="M1 0.5h9M5 1.5h1M5 2.5h1M5 3.5h1M0 4.5h11M4 5.5h1M6 5.5h1M4 6.5h1M6 6.5h1M3 7.5h1M6 7.5h1M3 8.5h1M6 8.5h1M10 8.5h1M2 9.5h1M6 9.5h1M10 9.5h1M0 10.5h2M7 10.5h4"/><path id="g12_5408" d="M5 0.5h1M4 1.5h1M6 1.5h1M3 2.5h1M7 2.5h1M2 3.5h1M8 3.5h1M0 4.5h2M3 4.5h5M9 4.5h2M2 6.5h7M2 7.5h1M8 7.5h1M2 8.5h1M8 8.5h1M2 9.5h7M2 10.5h1M8 10.5h1"/><path id="g12_5e76" d="M2 0.5h1M8 0.5h1M3 1.5h1M7 1.5h1M1 2.5h9M3 3.5h1M7 3.5h1M3 4.5h1M7 4.5h1M3 5.5h1M7 5.5h1M0 6.5h11M3 7.5h1M7 7.5h1M3 8.5h1M7 8.5h1M2 9.5h1M7 9.5h1M1 10.5h1M7 10.5h1"/><path id="g12_8ddd" d="M1 0.5h4M6 0.5h5M1 1.5h1M4 1.5h1M6 1.5h1M1 2.5h1M4 2.5h1M6 2.5h1M1 3.5h4M6 3.5h5M3 4.5h1M6 4.5h1M10 4.5h1M1 5.5h1M3 5.5h1M6 5.5h1M10 5.5h1M1 6.5h1M3 6.5h2M6 6.5h1M10 6.5h1M1 7.5h1M3 7.5h1M6 7.5h5M1 8.5h1M3 8.5h1M6 8.5h1M1 9.5h1M3 9.5h4M0 10.5h3M6 10.5h5"/><path id="g12_79bb" d="M5 0.5h1M0 1.5h11M2 2.5h1M4 2.5h1M6 2.5h1M8 2.5h1M2 3.5h1M5 3.5h1M8 3.5h1M2 4.5h1M4 4.5h1M6 4.5h1M8 4.5h1M2 5.5h7M5 6.5h1M1 7.5h9M1 8.5h1M4 8.5h1M7 8.5h1M9 8.5h1M1 9.5h1M3 9.5h5M9 9.5h1M1 10.5h1M8 10.5h2"/><path id="g12_6700" d="M2 0.5h7M2 1.5h1M8 1.5h1M2 2.5h7M2 3.5h1M8 3.5h1M0 4.5h11M1 5.5h1M4 5.5h1M1 6.5h9M1 7.5h1M4 7.5h1M6 7.5h1M9 7.5h1M1 8.5h4M7 8.5h2M0 9.5h2M4 9.5h1M7 9.5h2M4 10.5h3M9 10.5h2"/><path id="g12_5c0f" d="M5 0.5h1M5 1.5h1M5 2.5h1M2 3.5h1M5 3.5h1M8 3.5h1M2 4.5h1M5 4.5h1M9 4.5h1M1 5.5h1M5 5.5h1M9 5.5h1M1 6.5h1M5 6.5h1M10 6.5h1M0 7.5h1M5 7.5h1M10 7.5h1M5 8.5h1M3 9.5h1M5 9.5h1M4 10.5h1"/><path id="g12_957f" d="M3 0.5h1M8 0.5h1M3 1.5h1M7 1.5h1M3 2.5h1M6 2.5h1M3 3.5h1M5 3.5h1M3 4.5h2M1 5.5h10M3 6.5h1M5 6.5h1M3 7.5h1M6 7.5h1M3 8.5h1M7 8.5h1M3 9.5h1M5 9.5h1M8 9.5h1M3 10.5h2M9 10.5h2"/><path id="g12_5ea6" d="M5 0.5h1M1 1.5h10M1 2.5h1M4 2.5h1M7 2.5h1M1 3.5h9M1 4.5h1M4 4.5h1M7 4.5h1M1 5.5h1M4 5.5h4M1 6.5h1M1 7.5h1M3 7.5h6M1 8.5h1M4 8.5h1M7 8.5h1M0 9.5h1M5 9.5h2M0 10.5h1M2 10.5h3M7 10.5h3"/><path id="g12_6bcf" d="M2 0.5h1M2 1.5h9M1 2.5h1M0 3.5h1M3 3.5h6M3 4.5h1M5 4.5h1M8 4.5h1M0 5.5h11M2 6.5h1M5 6.5h1M8 6.5h1M2 7.5h1M6 7.5h1M8 7.5h1M1 8.5h10M8 9.5h1M6 10.5h2"/><path id="g12_7684" d="M3 0.5h1M7 0.5h1M2 1.5h1M7 1.5h1M1 2.5h4M6 2.5h5M1 3.5h1M4 3.5h2M10 3.5h1M1 4.5h1M4 4.5h1M10 4.5h1M1 5.5h4M6 5.5h1M10 5.5h1M1 6.5h1M4 6.5h1M7 6.5h1M10 6.5h1M1 7.5h1M4 7.5h1M7 7.5h1M10 7.5h1M1 8.5h1M4 8.5h1M10 8.5h1M1 9.5h4M10 9.5h1M1 10.5h1M4 10.5h1M8 10.5h2"/><path id="g12_516c" d="M7 0.5h1M3 1.5h1M7 1.5h1M3 2.5h1M8 2.5h1M2 3.5h1M8 3.5h1M2 4.5h1M5 4.5h1M9 4.5h1M1 5.5h1M5 5.5h1M10 5.5h1M0 6.5h1M4 6.5h1M4 7.5h1M7 7.5h1M3 8.5h1M8 8.5h1M2 9.5h8M3 10.5h1M9 10.5h1"/><path id="g12_5171" d="M3 0.5h1M7 0.5h1M3 1.5h1M7 1.5h1M1 2.5h9M3 3.5h1M7 3.5h1M3 4.5h1M7 4.5h1M3 5.5h1M7 5.5h1M0 6.5h11M3 8.5h1M7 8.5h1M2 9.5h1M8 9.5h1M1 10.5h1M9 10.5h1"/><path id="g12_6df1" d="M1 0.5h1M4 0.5h7M2 1.5h1M4 1.5h1M10 1.5h1M5 2.5h1M8 2.5h1M0 3.5h1M4 3.5h1M7 3.5h1M9 3.5h1M1 4.5h1M7 4.5h1M2 5.5h1M4 5.5h7M2 6.5h1M7 6.5h1M0 7.5h2M6 7.5h3M1 8.5h1M5 8.5h1M7 8.5h1M9 8.5h1M1 9.5h1M3 9.5h2M7 9.5h1M10 9.5h1M1 10.5h1M7 10.5h1"/><path id="g12_6052" d="M2 0.5h1M4 0.5h7M2 1.5h1M0 2.5h1M2 2.5h2M5 2.5h5M0 3.5h1M2 3.5h1M4 3.5h2M9 3.5h1M0 4.5h1M2 4.5h1M5 4.5h1M9 4.5h1M2 5.5h1M5 5.5h5M2 6.5h1M5 6.5h1M9 6.5h1M2 7.5h1M5 7.5h5M2 8.5h1M5 8.5h1M9 8.5h1M2 9.5h1M2 10.5h1M4 10.5h7"/><path id="g12_5c42" d="M2 0.5h8M2 1.5h1M9 1.5h1M2 2.5h8M2 3.5h1M2 4.5h1M4 4.5h6M2 5.5h1M2 6.5h9M2 7.5h1M6 7.5h1M2 8.5h1M5 8.5h1M8 8.5h1M1 9.5h1M4 9.5h1M9 9.5h1M0 10.5h1M4 10.5h7"/><path id="g12_53c2" d="M4 0.5h1M3 1.5h1M7 1.5h1M2 2.5h7M4 3.5h1M0 4.5h11M2 5.5h1M5 5.5h1M8 5.5h1M0 6.5h2M3 6.5h2M9 6.5h2M5 7.5h2M3 8.5h2M8 8.5h1M6 9.5h2M2 10.5h4"/><path id="g12_6570" d="M0 0.5h1M3 0.5h1M5 0.5h1M7 0.5h1M1 1.5h1M3 1.5h2M7 1.5h1M0 2.5h6M7 2.5h4M2 3.5h2M6 3.5h2M9 3.5h1M1 4.5h1M3 4.5h2M7 4.5h1M9 4.5h1M0 5.5h1M3 5.5h1M5 5.5h1M7 5.5h1M9 5.5h1M0 6.5h6M7 6.5h1M9 6.5h1M2 7.5h1M4 7.5h1M7 7.5h1M9 7.5h1M1 8.5h2M4 8.5h1M8 8.5h1M3 9.5h1M7 9.5h1M9 9.5h1M0 10.5h3M4 10.5h3M10 10.5h1"/><path id="g12_975e" d="M4 0.5h1M6 0.5h1M4 1.5h1M6 1.5h1M0 2.5h5M6 2.5h5M4 3.5h1M6 3.5h1M4 4.5h1M6 4.5h1M1 5.5h4M6 5.5h4M4 6.5h1M6 6.5h1M4 7.5h1M6 7.5h1M0 8.5h5M6 8.5h5M4 9.5h1M6 9.5h1M4 10.5h1M6 10.5h1"/><path id="g12_79fb" d="M3 0.5h1M7 0.5h1M0 1.5h3M6 1.5h5M2 2.5h1M5 2.5h1M10 2.5h1M0 3.5h5M6 3.5h1M9 3.5h1M2 4.5h1M7 4.5h2M2 5.5h2M5 5.5h2M8 5.5h1M2 6.5h1M4 6.5h1M7 6.5h4M1 7.5h2M6 7.5h1M10 7.5h1M0 8.5h1M2 8.5h1M5 8.5h1M7 8.5h1M9 8.5h1M2 9.5h1M8 9.5h1M2 10.5h1M5 10.5h3"/><path id="g12_52a8" d="M7 0.5h1M1 1.5h4M7 1.5h1M7 2.5h1M6 3.5h5M0 4.5h6M7 4.5h1M10 4.5h1M2 5.5h1M7 5.5h1M10 5.5h1M2 6.5h1M7 6.5h1M10 6.5h1M1 7.5h1M4 7.5h1M7 7.5h1M10 7.5h1M0 8.5h5M6 8.5h1M10 8.5h1M4 9.5h1M6 9.5h1M10 9.5h1M5 10.5h1M8 10.5h2"/><path id="g12_8fdb" d="M1 0.5h1M5 0.5h1M8 0.5h1M2 1.5h1M5 1.5h1M8 1.5h1M2 2.5h1M4 2.5h6M5 3.5h1M8 3.5h1M0 4.5h3M5 4.5h1M8 4.5h1M2 5.5h9M2 6.5h1M5 6.5h1M8 6.5h1M2 7.5h1M5 7.5h1M8 7.5h1M2 8.5h1M4 8.5h1M8 8.5h1M1 9.5h1M3 9.5h1M8 9.5h1M0 10.5h1M4 10.5h7"/><path id="g12_7ed9" d="M2 0.5h1M7 0.5h1M2 1.5h1M7 1.5h1M1 2.5h1M6 2.5h1M8 2.5h1M1 3.5h1M3 3.5h1M5 3.5h1M9 3.5h1M0 4.5h3M4 4.5h1M10 4.5h1M2 5.5h1M5 5.5h5M1 6.5h1M0 7.5h4M5 7.5h5M4 8.5h2M9 8.5h1M2 9.5h2M5 9.5h1M9 9.5h1M0 10.5h2M5 10.5h5"/><path id="g12_7387" d="M5 0.5h1M0 1.5h11M0 2.5h1M4 2.5h1M9 2.5h1M1 3.5h1M3 3.5h1M6 3.5h1M8 3.5h1M4 4.5h2M2 5.5h1M4 5.5h1M6 5.5h1M8 5.5h1M0 6.5h2M3 6.5h5M9 6.5h1M5 7.5h1M0 8.5h11M5 9.5h1M5 10.5h1"/><path id="g12_548c" d="M4 0.5h2M1 1.5h3M3 2.5h1M7 2.5h4M0 3.5h6M7 3.5h1M10 3.5h1M3 4.5h1M7 4.5h1M10 4.5h1M2 5.5h3M7 5.5h1M10 5.5h1M2 6.5h2M5 6.5h1M7 6.5h1M10 6.5h1M1 7.5h1M3 7.5h1M5 7.5h1M7 7.5h1M10 7.5h1M0 8.5h1M3 8.5h1M7 8.5h1M10 8.5h1M3 9.5h1M7 9.5h4M3 10.5h1"/><path id="g12_901f" d="M1 0.5h1M7 0.5h1M2 1.5h9M2 2.5h1M7 2.5h1M4 3.5h7M0 4.5h3M4 4.5h1M7 4.5h1M10 4.5h1M2 5.5h1M4 5.5h7M2 6.5h1M6 6.5h3M2 7.5h1M5 7.5h1M7 7.5h1M9 7.5h1M2 8.5h1M4 8.5h1M7 8.5h1M10 8.5h1M1 9.5h1M3 9.5h1M7 9.5h1M0 10.5h1M4 10.5h7"/><path id="g12_5bfc" d="M2 0.5h7M2 1.5h1M8 1.5h1M2 2.5h7M10 2.5h1M2 3.5h1M10 3.5h1M3 4.5h8M7 5.5h1M0 6.5h11M3 7.5h1M7 7.5h1M4 8.5h1M7 8.5h1M4 9.5h1M7 9.5h1M6 10.5h2"/><path id="g12_822a" d="M2 0.5h1M7 0.5h1M1 1.5h4M8 1.5h1M1 2.5h1M4 2.5h7M1 3.5h2M4 3.5h1M1 4.5h1M3 4.5h2M6 4.5h3M0 5.5h5M6 5.5h1M8 5.5h1M1 6.5h1M4 6.5h1M6 6.5h1M8 6.5h1M1 7.5h2M4 7.5h1M6 7.5h1M8 7.5h1M1 8.5h1M3 8.5h2M6 8.5h1M8 8.5h1M10 8.5h1M1 9.5h1M4 9.5h1M6 9.5h1M8 9.5h1M10 9.5h1M0 10.5h1M3 10.5h3M8 10.5h3"/><path id="g12_987a" d="M0 0.5h1M4 0.5h1M6 0.5h5M0 1.5h1M2 1.5h1M4 1.5h1M8 1.5h1M0 2.5h1M2 2.5h1M4 2.5h1M6 2.5h5M0 3.5h1M2 3.5h1M4 3.5h1M6 3.5h1M10 3.5h1M0 4.5h1M2 4.5h1M4 4.5h1M6 4.5h1M8 4.5h1M10 4.5h1M0 5.5h1M2 5.5h1M4 5.5h1M6 5.5h1M8 5.5h1M10 5.5h1M0 6.5h1M2 6.5h1M4 6.5h1M6 6.5h1M8 6.5h1M10 6.5h1M0 7.5h1M2 7.5h1M4 7.5h1M6 7.5h1M8 7.5h1M10 7.5h1M0 8.5h1M2 8.5h1M4 8.5h1M8 8.5h1M0 9.5h1M4 9.5h1M7 9.5h1M9 9.5h1M0 10.5h1M4 10.5h1M6 10.5h1M10 10.5h1"/><path id="g12_540d" d="M3 0.5h1M3 1.5h7M3 2.5h1M8 2.5h1M2 3.5h1M4 3.5h1M7 3.5h1M1 4.5h1M5 4.5h2M5 5.5h1M3 6.5h7M0 7.5h4M9 7.5h1M3 8.5h1M9 8.5h1M3 9.5h1M9 9.5h1M3 10.5h7"/><path id="g12_79f0" d="M3 0.5h2M6 0.5h1M0 1.5h3M6 1.5h1M2 2.5h1M5 2.5h6M0 3.5h5M7 3.5h1M10 3.5h1M2 4.5h1M7 4.5h1M1 5.5h3M5 5.5h1M7 5.5h1M9 5.5h1M1 6.5h2M5 6.5h1M7 6.5h1M9 6.5h1M0 7.5h1M2 7.5h1M4 7.5h1M7 7.5h1M10 7.5h1M2 8.5h2M7 8.5h1M10 8.5h1M2 9.5h1M7 9.5h1M2 10.5h1M6 10.5h2"/><path id="g12_672a" d="M5 0.5h1M5 1.5h1M1 2.5h9M5 3.5h1M0 4.5h11M5 5.5h1M4 6.5h3M3 7.5h1M5 7.5h1M7 7.5h1M2 8.5h1M5 8.5h1M8 8.5h1M0 9.5h2M5 9.5h1M9 9.5h2M5 10.5h1"/><path id="g12_7528" d="M1 0.5h9M1 1.5h1M5 1.5h1M9 1.5h1M1 2.5h1M5 2.5h1M9 2.5h1M1 3.5h9M1 4.5h1M5 4.5h1M9 4.5h1M1 5.5h1M5 5.5h1M9 5.5h1M1 6.5h9M1 7.5h1M5 7.5h1M9 7.5h1M1 8.5h1M5 8.5h1M9 8.5h1M0 9.5h1M5 9.5h1M9 9.5h1M0 10.5h1M5 10.5h1M8 10.5h2"/><path id="g12_76f8" d="M3 0.5h1M6 0.5h5M3 1.5h1M6 1.5h1M10 1.5h1M1 2.5h6M10 2.5h1M3 3.5h1M6 3.5h5M3 4.5h1M6 4.5h1M10 4.5h1M2 5.5h3M6 5.5h1M10 5.5h1M1 6.5h1M3 6.5h1M5 6.5h6M0 7.5h1M3 7.5h1M6 7.5h1M10 7.5h1M3 8.5h1M6 8.5h1M10 8.5h1M3 9.5h1M6 9.5h5M3 10.5h1M6 10.5h1M10 10.5h1"/><path id="g12_4f9d" d="M3 0.5h1M6 0.5h1M3 1.5h1M7 1.5h1M2 2.5h1M4 2.5h7M2 3.5h1M7 3.5h1M1 4.5h2M6 4.5h2M10 4.5h1M0 5.5h1M2 5.5h1M5 5.5h1M7 5.5h1M9 5.5h1M2 6.5h1M4 6.5h2M8 6.5h1M2 7.5h2M5 7.5h1M8 7.5h1M2 8.5h1M5 8.5h1M9 8.5h1M2 9.5h1M5 9.5h1M7 9.5h1M10 9.5h1M2 10.5h1M5 10.5h2M10 10.5h1"/><path id="g12_6027" d="M2 0.5h1M7 0.5h1M2 1.5h1M5 1.5h1M7 1.5h1M0 2.5h1M2 2.5h2M5 2.5h1M7 2.5h1M0 3.5h1M2 3.5h1M4 3.5h7M0 4.5h1M2 4.5h1M4 4.5h1M7 4.5h1M0 5.5h1M2 5.5h2M7 5.5h1M2 6.5h1M5 6.5h5M2 7.5h1M7 7.5h1M2 8.5h1M7 8.5h1M2 9.5h1M7 9.5h1M2 10.5h1M4 10.5h7"/><path id="g12_7ec6" d="M2 0.5h1M2 1.5h1M5 1.5h6M1 2.5h1M5 2.5h1M8 2.5h1M10 2.5h1M1 3.5h1M3 3.5h1M5 3.5h1M8 3.5h1M10 3.5h1M0 4.5h3M5 4.5h1M8 4.5h1M10 4.5h1M2 5.5h1M5 5.5h6M1 6.5h1M5 6.5h1M8 6.5h1M10 6.5h1M0 7.5h4M5 7.5h1M8 7.5h1M10 7.5h1M5 8.5h1M8 8.5h1M10 8.5h1M2 9.5h2M5 9.5h6M0 10.5h2M5 10.5h1M10 10.5h1"/><path id="g12_8282" d="M3 0.5h1M7 0.5h1M0 1.5h11M3 2.5h1M7 2.5h1M1 4.5h8M4 5.5h1M8 5.5h1M4 6.5h1M8 6.5h1M4 7.5h1M8 7.5h1M4 8.5h1M6 8.5h3M4 9.5h1M4 10.5h1"/><path id="g16_4e09" d="M1 2.5h13M2 7.5h11M0 13.5h15"/><path id="g16_7ef4" d="M3 0.5h1M8 0.5h1M10 0.5h1M3 1.5h1M8 1.5h1M11 1.5h1M2 2.5h1M8 2.5h1M2 3.5h1M5 3.5h1M7 3.5h8M1 4.5h1M5 4.5h1M7 4.5h1M11 4.5h1M0 5.5h5M6 5.5h2M11 5.5h1M3 6.5h1M5 6.5h1M7 6.5h7M2 7.5h1M7 7.5h1M11 7.5h1M1 8.5h1M7 8.5h1M11 8.5h1M0 9.5h6M7 9.5h7M1 10.5h1M7 10.5h1M11 10.5h1M7 11.5h1M11 11.5h1M3 12.5h3M7 12.5h1M11 12.5h1M0 13.5h3M7 13.5h8M1 14.5h1M7 14.5h1M7 15.5h1"/><path id="g16_7f51" d="M1 1.5h13M1 2.5h1M13 2.5h1M1 3.5h1M13 3.5h1M1 4.5h1M6 4.5h1M11 4.5h1M13 4.5h1M1 5.5h1M3 5.5h1M6 5.5h1M8 5.5h1M11 5.5h1M13 5.5h1M1 6.5h1M4 6.5h1M6 6.5h1M9 6.5h1M11 6.5h1M13 6.5h1M1 7.5h1M5 7.5h1M10 7.5h1M13 7.5h1M1 8.5h1M5 8.5h1M10 8.5h1M13 8.5h1M1 9.5h1M4 9.5h1M6 9.5h1M9 9.5h1M11 9.5h1M13 9.5h1M1 10.5h1M4 10.5h1M6 10.5h1M9 10.5h1M11 10.5h1M13 10.5h1M1 11.5h1M3 11.5h1M6 11.5h1M8 11.5h1M11 11.5h1M13 11.5h1M1 12.5h2M7 12.5h1M13 12.5h1M1 13.5h1M13 13.5h1M1 14.5h1M11 14.5h1M13 14.5h1M1 15.5h1M12 15.5h1"/></defs></svg>
<div id="app">
<div style="left:0px;top:0px;width:1435px;height:2px;background:#000"></div>
<div style="left:0px;top:2px;width:1435px;height:24px;background:linear-gradient(#eeeeee,#e3e3e3)"></div>
<div style="left:0px;top:25px;width:1435px;height:1px;background:#c2c2c2"></div>
<div style="left:0px;top:26px;width:1435px;height:34px;background:linear-gradient(#e6e6e6,#dbdbdb)"></div>
<div style="left:0px;top:26px;width:1094px;height:34px;background:linear-gradient(#e7e7e7,#d9d9d9);border-top:1px solid #f4f4f4;border-bottom:1px solid #b9b9b9;border-right:1px solid #c2c2c2"></div>
<div style="left:0px;top:60px;width:1435px;height:63px;background:linear-gradient(#e0e0e0,#d2d2d2 60%,#cbcbcb)"></div>
<div style="left:0px;top:60px;width:1094px;height:1px;background:#f6f6f6"></div>
<div style="left:1095px;top:26px;width:340px;height:96px;background:linear-gradient(#e5e5e5,#d9d9d9 40%,#cacaca)"></div>
<div style="left:0px;top:121px;width:1112px;height:2px;background:linear-gradient(#b0b0b0,#6a6a72)"></div>
<div style="left:1112px;top:121px;width:323px;height:1px;background:#c4c4c4"></div>
<div class="t" style="left:26px;top:7px;color:#000"><svg width="43" height="14" aria-hidden="true"><use href="#g12_6587" x="0"/><use href="#g12_4ef6" x="12"/></svg><span class="sr">文件</span><span class="m" style="left:24px;top:0px">(F)</span></div>
<div style="left:56.5px;top:17.5px;width:5.5px;height:1px;background:#222"></div>
<div class="t" style="left:81px;top:7px;color:#000"><svg width="43" height="14" aria-hidden="true"><use href="#g12_7f16" x="0"/><use href="#g12_8f91" x="12"/></svg><span class="sr">编辑</span><span class="m" style="left:24px;top:0px">(E)</span></div>
<div style="left:111.5px;top:17.5px;width:5.5px;height:1px;background:#222"></div>
<div class="t" style="left:136px;top:7px;color:#000"><svg width="43" height="14" aria-hidden="true"><use href="#g12_89c6" x="0"/><use href="#g12_56fe" x="12"/></svg><span class="sr">视图</span><span class="m" style="left:24px;top:0px">(V)</span></div>
<div style="left:166.5px;top:17.5px;width:5.5px;height:1px;background:#222"></div>
<div class="t" style="left:191px;top:7px;color:#000"><svg width="43" height="14" aria-hidden="true"><use href="#g12_63d2" x="0"/><use href="#g12_5165" x="12"/></svg><span class="sr">插入</span><span class="m" style="left:24px;top:0px">(S)</span></div>
<div style="left:221.5px;top:17.5px;width:5.5px;height:1px;background:#222"></div>
<div class="t" style="left:246px;top:7px;color:#000"><svg width="43" height="14" aria-hidden="true"><use href="#g12_683c" x="0"/><use href="#g12_5f0f" x="12"/></svg><span class="sr">格式</span><span class="m" style="left:24px;top:0px">(R)</span></div>
<div style="left:276.5px;top:17.5px;width:5.5px;height:1px;background:#222"></div>
<div class="t" style="left:301px;top:7px;color:#000"><svg width="43" height="14" aria-hidden="true"><use href="#g12_5de5" x="0"/><use href="#g12_5177" x="12"/></svg><span class="sr">工具</span><span class="m" style="left:24px;top:0px">(T)</span></div>
<div style="left:331.5px;top:17.5px;width:5.5px;height:1px;background:#222"></div>
<div class="t" style="left:356px;top:7px;color:#000"><svg width="43" height="14" aria-hidden="true"><use href="#g12_88c5" x="0"/><use href="#g12_914d" x="12"/></svg><span class="sr">装配</span><span class="m" style="left:24px;top:0px">(A)</span></div>
<div style="left:386.5px;top:17.5px;width:5.5px;height:1px;background:#222"></div>
<div class="t" style="left:411px;top:7px;color:#000"><svg width="43" height="14" aria-hidden="true"><use href="#g12_4fe1" x="0"/><use href="#g12_606f" x="12"/></svg><span class="sr">信息</span><span class="m" style="left:24px;top:0px">(I)</span></div>
<div style="left:441.5px;top:17.5px;width:5.5px;height:1px;background:#222"></div>
<div class="t" style="left:466px;top:7px;color:#000"><svg width="43" height="14" aria-hidden="true"><use href="#g12_5206" x="0"/><use href="#g12_6790" x="12"/></svg><span class="sr">分析</span><span class="m" style="left:24px;top:0px">(L)</span></div>
<div style="left:496.5px;top:17.5px;width:5.5px;height:1px;background:#222"></div>
<div class="t" style="left:521px;top:7px;color:#000"><svg width="55" height="14" aria-hidden="true"><use href="#g12_9996" x="0"/><use href="#g12_9009" x="12"/><use href="#g12_9879" x="24"/></svg><span class="sr">首选项</span><span class="m" style="left:36px;top:0px">(P)</span></div>
<div style="left:563.5px;top:17.5px;width:5.5px;height:1px;background:#222"></div>
<div class="t" style="left:588px;top:7px;color:#000"><svg width="43" height="14" aria-hidden="true"><use href="#g12_7a97" x="0"/><use href="#g12_53e3" x="12"/></svg><span class="sr">窗口</span><span class="m" style="left:24px;top:0px">(O)</span></div>
<div style="left:618.5px;top:17.5px;width:5.5px;height:1px;background:#222"></div>
<div class="t" style="left:643px;top:7px;color:#000"><svg width="43" height="14" aria-hidden="true"><use href="#g12_5e2e" x="0"/><use href="#g12_52a9" x="12"/></svg><span class="sr">帮助</span><span class="m" style="left:24px;top:0px">(H)</span></div>
<div style="left:673.5px;top:17.5px;width:5.5px;height:1px;background:#222"></div>
<svg style="left:4px;top:5.5px" width="18" height="17" viewBox="0 0 18 17" ><path d="M1 12.500L4 11.500L1.500 14.500L4.500 13.500L4 17L5.500 14L7.500 16L7 13.500L9 12.500z" fill="#55553c"/><ellipse cx="4.500" cy="12.500" rx="4" ry="1.500" fill="#c8c8a0"/><rect x="2" y=".5" width="5" height="9.800" fill="#3038a8"/><rect x="3.300" y=".5" width="2" height="9.800" fill="#8c98f0"/><path d="M1.300 8.500h6.400v2h-6.400z" fill="#181c60"/><path d="M7 3.500L16 2.200L14.800 3.900L7 5zM7 6L14.500 5L13.300 6.600L7 7.500zM7 8.300L9.500 8L8.500 9.300L7 9.500z" fill="#0c0c14"/></svg>
<div style="left:0px;top:8px;width:2px;height:15px;background-image:linear-gradient(#a8a8a8 50%,transparent 50%);background-size:2px 4px"></div>
<div style="left:1376px;top:5px;width:16.7px;height:16.7px;background:linear-gradient(#fbfbfb,#ededed);border:1px solid #666;border-radius:3.5px;box-shadow:0 0 0 1px rgba(255,255,255,.7)"></div>
<div style="left:1395px;top:5px;width:16.7px;height:16.7px;background:linear-gradient(#fbfbfb,#ededed);border:1px solid #666;border-radius:3.5px;box-shadow:0 0 0 1px rgba(255,255,255,.7)"></div>
<div style="left:1414.2px;top:5px;width:16.7px;height:16.7px;background:linear-gradient(#fbfbfb,#ededed);border:1px solid #c4c4c4;border-radius:3.5px;box-shadow:0 0 0 1px rgba(255,255,255,.7)"></div>
<div style="left:1380px;top:16px;width:7px;height:2px;background:#444"></div>
<svg style="left:1395px;top:5px" width="17" height="17" viewBox="0 0 17 17" ><path d="M6.500 4.800h5.800v5.200" fill="none" stroke="#444" stroke-width="1.300"/><rect x="4.700" y="7.800" width="5.600" height="4.400" fill="none" stroke="#444" stroke-width="1.200"/><path d="M4.200 8h6.600" stroke="#444" stroke-width="1.600"/></svg>
<svg style="left:1414.2px;top:5px" width="17" height="17" viewBox="0 0 17 17" ><path d="M4.800 5L12 12.200M12 5L4.800 12.200" stroke="#c6c6c6" stroke-width="1.700"/></svg>
<div style="left:0px;top:32px;width:2.5px;height:23px;background-image:linear-gradient(#fbfbfb 0,#fbfbfb 40%,#a4a4a4 40%,#a4a4a4 68%,transparent 68%);background-size:2.5px 3.200px"></div>
<div style="left:487px;top:32px;width:2.5px;height:23px;background-image:linear-gradient(#fbfbfb 0,#fbfbfb 40%,#a4a4a4 40%,#a4a4a4 68%,transparent 68%);background-size:2.5px 3.200px"></div>
<div style="left:855px;top:30px;width:2.5px;height:26px;background-image:linear-gradient(#fbfbfb 0,#fbfbfb 40%,#a4a4a4 40%,#a4a4a4 68%,transparent 68%);background-size:2.5px 3.200px"></div>
<div style="left:0px;top:66px;width:2.5px;height:52px;background-image:linear-gradient(#fbfbfb 0,#fbfbfb 40%,#a4a4a4 40%,#a4a4a4 68%,transparent 68%);background-size:2.5px 3.200px"></div>
<div style="left:287.5px;top:66px;width:2.5px;height:51px;background-image:linear-gradient(#fbfbfb 0,#fbfbfb 40%,#a4a4a4 40%,#a4a4a4 68%,transparent 68%);background-size:2.5px 3.200px"></div>
<svg style="left:7.5px;top:31.5px" width="23" height="22" viewBox="0 0 23 22" ><defs><radialGradient id="gl1" cx=".4" cy=".35" r=".7"><stop offset="0" stop-color="#9fe6ff"/><stop offset=".45" stop-color="#2a8fe0"/><stop offset="1" stop-color="#0b3f9e"/></radialGradient></defs><circle cx="10.5" cy="12" r="8.8" fill="url(#gl1)"/><path d="M4 16.5q5 4.5 11.5 2.5q3-2 3.2-5.5q-3.5 4.5-8 4.8q-3.7.2-6.7-1.8z" fill="#2f9a3a"/><path d="M6.5 8q3-1 5 1.5t-1 5q-3 .5-4.5-2t.5-4.5z" fill="#7be0d0" opacity=".75"/><ellipse cx="11.5" cy="12" rx="11.6" ry="4.1" transform="rotate(-35 11.5 12)" fill="none" stroke="#f2d21c" stroke-width="1.8"/><path d="M.8 18.2l4.6-1.6-1 3.6z" fill="#f2d21c"/><path d="M2.5 1.2L13 .2L9 9.5z" fill="#d8202a"/><path d="M6.5 1L13 .2L9 9.5z" fill="#a01018"/></svg>
<div class="t" style="left:35px;top:37px;color:#000"><svg width="25" height="14" aria-hidden="true"><use href="#g12_5f00" x="0"/><use href="#g12_59cb" x="12"/></svg><span class="sr">开始</span></div>
<svg style="left:62px;top:41px" width="6" height="4" viewBox="0 0 6 4" ><path d="M0 0h6 l-3 3.2 z" fill="#111"/></svg>
<svg style="left:77.4px;top:32px" width="18" height="22" viewBox="0 0 18 22" ><path d="M0 0h11.5l6.5 6.5v15H0z" fill="#aaa9b4"/><path d="M11.5 0v6.5h6.5z" fill="#c4c3cc"/></svg>
<svg style="left:106px;top:31.5px" width="22" height="22" viewBox="0 0 22 22" ><path d="M6.5 3.5q4-5.5 9.5-1.5l1 4.5" fill="none" stroke="#9da08f" stroke-width="1.6"/><path d="M0 5.5l18-2.2l3 1.2l-1.5 12.5L.5 20.5z" fill="#aaab9c"/><path d="M18 3.3l3 1.2l-1.5 12.5l-2.2 1z" fill="#97988a"/></svg>
<svg style="left:139.2px;top:34px" width="18" height="18" viewBox="0 0 18 18" ><rect x="0" y="0" width="18" height="17.8" fill="#9d9dad"/><rect x="3.5" y="0" width="10.5" height="8.5" fill="#bfbfc4"/><rect x="4" y="11" width="9.5" height="6.8" fill="#8b8b9c"/><rect x="5.5" y="12" width="2.6" height="5.8" fill="#aeaeb8"/></svg>
<div style="left:166px;top:28px;width:1px;height:30px;background:#bdbdbd"></div>
<div style="left:167px;top:28px;width:1px;height:30px;background:#f7f7f7"></div>
<svg style="left:174.2px;top:32px" width="22" height="22" viewBox="0 0 22 22" ><path d="M14.3 0.2q1.6 3 .2 6.6L9.2 15.8L6.8 14.2z" fill="#a3a39b"/><path d="M21.6 7q-2.4 3-6.4 3.6L7.2 13.2L8 10.6z" fill="#a3a39b"/><circle cx="3.2" cy="12.2" r="2.5" fill="none" stroke="#a0a0a0" stroke-width="1.6"/><circle cx="9.6" cy="18.2" r="2.5" fill="none" stroke="#a0a0a0" stroke-width="1.6"/></svg>
<svg style="left:207px;top:33.2px" width="20" height="20" viewBox="0 0 20 20" ><path d="M0 0h7l3.5 3.5v10.7H0z" fill="#a2a2ab"/><path d="M8 5.6h7.5l3.6 3.6v10.3H8z" fill="#9a9aa4"/><path d="M1.5 4h6M1.5 6.5h6M1.5 9h6M1.5 11.5h5M9.5 10.5h8M9.5 13h8M9.5 15.5h8M9.5 18h8" stroke="#b9b9c0" stroke-width=".9"/></svg>
<svg style="left:236.9px;top:32px" width="22" height="22" viewBox="0 0 22 22" ><rect x="6.5" y="0" width="5" height="3" rx="1.2" fill="#8e8e96"/><rect x="0" y="2.2" width="18.5" height="15.3" fill="#adae95"/><rect x="13" y="2.8" width="5" height="3" fill="#b9ba8e"/><path d="M4.5 7.3h12l4.3 4v9.9H4.5z" fill="#a2a2ab"/><path d="M6 10h10M6 12.5h13M6 15h13M6 17.500h13" stroke="#b8b8c0" stroke-width=".9"/></svg>
<svg style="left:270.5px;top:35px" width="17" height="17" viewBox="0 0 17 17" ><path d="M.5 0.2Q6 6 15.8 15.8Q9 11 .5 0.2z" fill="#8c8c8c" stroke="#8c8c8c" stroke-width="1.900"/><path d="M15.8 1Q9 7 1 16.6Q2.2 17.500 3 16.2Q8 8 15.800 1z" fill="#8c8c8c" stroke="#8c8c8c" stroke-width="2"/></svg>
<div style="left:296px;top:28px;width:1px;height:30px;background:#bdbdbd"></div>
<div style="left:297px;top:28px;width:1px;height:30px;background:#f7f7f7"></div>
<svg style="left:304.8px;top:35.5px" width="20" height="15" viewBox="0 0 20 15" ><path d="M5.5 8.5Q12 -1.500 17 3.500Q20 8 16 13" fill="none" stroke="#8b8b95" stroke-width="2.5"/><path d="M0 4.200l1.200 9.500l8-4.500z" fill="#8b8b95"/></svg>
<div style="left:333.5px;top:28px;width:1px;height:30px;background:#bdbdbd"></div>
<div style="left:334.5px;top:28px;width:1px;height:30px;background:#f7f7f7"></div>
<svg style="left:341.5px;top:34.7px" width="22" height="18" viewBox="0 0 22 18" ><defs><radialGradient id="bn1" cx=".45" cy=".4" r=".6"><stop offset="0" stop-color="#c8d8ff"/><stop offset=".6" stop-color="#5c78d8"/><stop offset="1" stop-color="#1a2a78"/></radialGradient></defs><path d="M10 16l8 2l-1.500 1.500l-7-1z" fill="#999" opacity=".6"/><path d="M1 4.500Q6 -.5 12.500 1.200L17.500 3L21.500 3.500L19.500 14.500L12 15.500L10.500 8L6 9.500z" fill="#10142c"/><path d="M6.500 1.500L15 2.500L14 5L7 4z" fill="#4a5068"/><ellipse cx="3.600" cy="6" rx="3.400" ry="3.800" fill="#0c1230"/><ellipse cx="3.500" cy="6.200" rx="2.300" ry="2.700" fill="url(#bn1)"/><ellipse cx="15.500" cy="10.500" rx="4.800" ry="5.200" fill="#0c1230"/><ellipse cx="15.300" cy="10.800" rx="3.300" ry="3.700" fill="url(#bn1)"/></svg>
<div class="t" style="left:368px;top:36px;color:#000"><svg width="61" height="14" aria-hidden="true"><use href="#g12_547d" x="0"/><use href="#g12_4ee4" x="12"/><use href="#g12_67e5" x="24"/><use href="#g12_627e" x="36"/><use href="#g12_5668" x="48"/></svg><span class="sr">命令查找器</span></div>
<div style="left:434.5px;top:28px;width:1px;height:30px;background:#bdbdbd"></div>
<div style="left:435.5px;top:28px;width:1px;height:30px;background:#f7f7f7"></div>
<svg style="left:441.6px;top:31.5px" width="23" height="23" viewBox="0 0 23 23" ><rect x=".8" y=".8" width="11.800" height="11.800" fill="#fff" stroke="#3c3c94" stroke-width="1.300"/><rect x="5.500" y="2.600" width="2.600" height="2.200" fill="#000"/><path d="M4.300 6h3.800v4.200h1.300v1.200H4.300v-1.200h1.300V7.200H4.300z" fill="#000"/><path d="M14.500 10.200L22 16.500L14.800 22.500L7.200 16.200z" fill="#fff" stroke="#2c2c84" stroke-width="1.700"/><path d="M14.600 12.400L19.500 16.500L14.700 20.300z" fill="#2c2c84"/><path d="M13.200 12.700L9.300 16.200L13.300 19.800z" fill="#c8d0f0"/></svg>
<svg style="left:471.5px;top:49.8px" width="6" height="4" viewBox="0 0 6 4" ><path d="M0 0h6 l-3 3.2 z" fill="#111"/></svg>
<div style="left:482px;top:28px;width:1px;height:30px;background:#bdbdbd"></div>
<div style="left:483px;top:28px;width:1px;height:30px;background:#f7f7f7"></div>
<svg style="left:495px;top:33.4px" width="22" height="20" viewBox="0 0 22 20" ><defs><linearGradient id="ft1" x1="0" y1="0" x2="0" y2="1"><stop offset="0" stop-color="#f8fbff"/><stop offset="1" stop-color="#a8c0f4"/></linearGradient></defs><rect x=".7" y=".7" width="20.200" height="18" rx="1.200" fill="url(#ft1)" stroke="#2c4cc0" stroke-width="1.400"/><rect x="1" y="1" width="19.600" height="2.800" fill="#4c6cd8"/><path d="M6.500 7L15 15.500M15 7L6.500 15.500" stroke="#d8682c" stroke-width="2.600"/><path d="M4.800 5.300h4l-4 4zM16.700 5.300v4l-4-4zM4.800 17.200v-4l4 4zM16.700 17.200h-4l4-4z" fill="#e87838" stroke="#b85020" stroke-width=".4"/></svg>
<svg style="left:526px;top:41px" width="6" height="4" viewBox="0 0 6 4" ><path d="M0 0h6 l-3 3.2 z" fill="#111"/></svg>
<svg style="left:537.8px;top:32.8px" width="23" height="20" viewBox="0 0 23 20" ><path d="M4.500 12.500L5.500 6Q6 3.500 8.500 2.500L13 .8Q15.800 .2 15.800 3V12L9.500 15.500z" fill="#b9b9b9" stroke="#5c5c5c" stroke-width=".9"/><path d="M6.500 11.500L7.300 6.500Q7.800 4.500 9.500 3.800L13.800 2.300V11.300L9.500 13.500z" fill="#a4a4a4" stroke="#777" stroke-width=".5"/><path d="M1 13.500L4.500 12.500L9.500 15.500L15.800 12L22.500 12.500L22 15.500L10 19.500L1.500 16z" fill="#dcdcdc" stroke="#5c5c5c" stroke-width=".9"/><path d="M1.500 16L10 17.500L22.500 13.500" fill="none" stroke="#8c8c8c" stroke-width=".7"/><rect x="8.500" y="14.200" width="2.600" height="1.700" fill="#666"/></svg>
<svg style="left:569px;top:41px" width="6" height="4" viewBox="0 0 6 4" ><path d="M0 0h6 l-3 3.2 z" fill="#111"/></svg>
<svg style="left:580.8px;top:31.7px" width="21" height="23" viewBox="0 0 21 23" ><path d="M0 5.500L9.500 .5L20 4L11 9.500z" fill="#fdfeff" stroke="#5a8ad8" stroke-width=".9"/><path d="M0 5.500L11 9.500V22L0 17z" fill="#9cd0f8" stroke="#5a8ad8" stroke-width=".9"/><path d="M11 9.500L20 4V16L11 22z" fill="#d4ecff" stroke="#5a8ad8" stroke-width=".9"/></svg>
<svg style="left:625px;top:31.5px" width="20" height="20" viewBox="0 0 20 20" ><circle cx="9.500" cy="9.500" r="9.200" fill="#111"/><path d="M9.500 .3A9.200 9.200 0 0 1 18.700 9.500H9.500z" fill="#fff"/></svg>
<svg style="left:655px;top:31.8px" width="21" height="20" viewBox="0 0 21 20" ><path d="M0 8L10 .5L20.500 8L10 16z" fill="#f8f8f8" stroke="#888" stroke-width=".8"/><circle cx="10" cy="7.500" r="3.300" fill="#d03030"/></svg>
<svg style="left:685.5px;top:31.8px" width="22" height="20" viewBox="0 0 22 20" ><path d="M0 9L10.500 0L21.500 9z" fill="#a8a8a8"/></svg>
<svg style="left:728px;top:31px" width="24" height="20" viewBox="0 0 24 20" ><rect x=".8" y=".8" width="22.500" height="18" fill="#f4f4f4" stroke="#111" stroke-width="1.600"/><rect x="1" y="1" width="22" height="3" fill="#111"/></svg>
<div style="left:770px;top:28px;width:1px;height:12px;background:#bdbdbd"></div>
<div style="left:771px;top:28px;width:1px;height:12px;background:#f7f7f7"></div>
<svg style="left:785px;top:33px" width="12" height="6" viewBox="0 0 12 6" ><path d="M1 5L7 1.500h3.500v3z" fill="#3444b4"/></svg>
<svg style="left:815px;top:33px" width="12" height="6" viewBox="0 0 12 6" ><path d="M1 5L7 1.500h3.500v3z" fill="#3444b4"/></svg>
<div style="left:849px;top:28px;width:1px;height:12px;background:#bdbdbd"></div>
<div style="left:850px;top:28px;width:1px;height:12px;background:#f7f7f7"></div>
<svg style="left:862px;top:32.5px" width="23" height="22" viewBox="0 0 23 22" ><path d="M0 4.5L9 0.8L20.500 3.3L11 7.5z" fill="#8fd0a8" stroke="#3e9a6a" stroke-width=".8"/><path d="M0 7.3L9 3.6L20.500 6.1L11 10.3z" fill="#8fd0a8" stroke="#3e9a6a" stroke-width=".8"/><path d="M0 10.1L9 6.4L20.500 8.9L11 13.1z" fill="#8fd0a8" stroke="#3e9a6a" stroke-width=".8"/><path d="M0 12.9L9 9.2L20.500 11.7L11 15.9z" fill="#8fd0a8" stroke="#3e9a6a" stroke-width=".8"/><rect x="9.200" y="8.500" width="12" height="12.200" fill="#fff" stroke="#6a80c8" stroke-width="1.200"/><path d="M13.500 11.500h6M13.500 14.500h6M13.500 17.500h6" stroke="#8a98c8" stroke-width="1"/><path d="M10.800 11h1.600v1.400h-1.600zM10.800 14h1.600v1.400h-1.600zM10.800 17h1.600v1.400h-1.600z" fill="none" stroke="#6a80c8" stroke-width=".7"/></svg>
<svg style="left:892.5px;top:31.3px" width="24" height="24" viewBox="0 0 24 24" ><path d="M2.500 5V19.500L10.500 23.500M2.500 19.500L13 15" fill="none" stroke="#9a9a9a" stroke-width="1.500"/><path d="M12 1V12L21.500 9.500M12 12L7.500 15.500" fill="none" stroke="#d8402c" stroke-width="1.500"/><path d="M12 0l-1.600 3.200h3.200zM22.500 9.200l-3.200-1.200l.5 3zM6.500 16.300l3-.5l-1.800-2.200z" fill="#d8402c"/><path d="M1.500 4.500L8.500 1.800" stroke="#f08a28" stroke-width="2.400"/></svg>
<svg style="left:924px;top:40.5px" width="6" height="4" viewBox="0 0 6 4" ><path d="M0 0h6 l-3 3.2 z" fill="#111"/></svg>
<div style="left:934.5px;top:28px;width:1px;height:30px;background:#bdbdbd"></div>
<div style="left:935.5px;top:28px;width:1px;height:30px;background:#f7f7f7"></div>
<svg style="left:941px;top:31.3px" width="24" height="24" viewBox="0 0 24 24" ><path d="M1 9.500Q1 2 9.500 .8Q17 .5 18.500 6Q19 9 15.500 9.500Q13 10 13.500 12.500Q14 15 11 15.500Q2 16.500 1 9.500z" fill="#f4ecc0" stroke="#b8a860" stroke-width=".9"/><circle cx="7.500" cy="4.500" r="1.400" fill="#30a090"/><circle cx="12.800" cy="3.500" r="1.300" fill="#e8d8b0"/><circle cx="4.200" cy="8.500" r="1.300" fill="#e0c890"/><path d="M6.500 11.500q3-2 5.500.5l4.500-1.500l1.500 3l-4 1.500q2 3-1.500 5l-4 .5l.3 2.500l-3.300.8l-2.500-2l3-2.500l2.800.6q2-1 .8-2.700q-1.800-.6-3.100-1.700z" fill="#f4d438" stroke="#c09a18" stroke-width=".7"/><path d="M17 5.500L23 10.500L17.200 15.500L11.800 10.300z" fill="#fff" stroke="#1c1c64" stroke-width="1.500"/><path d="M17.100 7.500L20.800 10.500L17.200 13.500z" fill="#1c1c64"/></svg>
<svg style="left:972px;top:35.8px" width="24" height="17" viewBox="0 0 24 17" ><path d="M0 0L6 4L0 8.500z" fill="#28b048"/><path d="M1.800 8L7.500 12L1.800 16z" fill="#d83028"/><path d="M15.500 0.800L22.500 7.500L15.800 13.800L8.500 7.200z" fill="#fff" stroke="#24247c" stroke-width="1.600"/><path d="M14.800 3.200L10.500 7.200L14.900 11.300z" fill="#4860c8"/><path d="M16.200 3.200L20.300 7.400L16.300 11.200z" fill="#e8ecff"/></svg>
<svg style="left:1003.5px;top:40.5px" width="6" height="4" viewBox="0 0 6 4" ><path d="M0 0h6 l-3 3.2 z" fill="#111"/></svg>
<div style="left:1014.5px;top:28px;width:1px;height:30px;background:#bdbdbd"></div>
<div style="left:1015.5px;top:28px;width:1px;height:30px;background:#f7f7f7"></div>
<svg style="left:1020.7px;top:36.5px" width="24" height="14" viewBox="0 0 24 14" ><path d="M1 2.800H23" stroke="#2838b8" stroke-width="1.300"/><path d="M.6 0V6M23.400 0V6" stroke="#6a78c8" stroke-width="1"/><path d="M1 2.800l3-1.800v3.600zM23 2.800l-3-1.800v3.600z" fill="#2838b8"/><rect x=".5" y="7.500" width="23.300" height="5.500" fill="#f4dc78" stroke="#c8a838" stroke-width=".8"/><path d="M3 7.500v2.500M5.500 7.500v1.800M8 7.500v2.500M10.500 7.500v1.800M13 7.500v2.500M15.500 7.500v1.800M18 7.500v2.500M20.500 7.500v1.800" stroke="#fff" stroke-width="1"/></svg>
<svg style="left:1052px;top:33px" width="24" height="22" viewBox="0 0 24 22" ><path d="M1 4V21H13.500" fill="none" stroke="#d04848" stroke-width="1.300"/><path d="M1 12Q9.500 12 10 21" fill="none" stroke="#d04848" stroke-width="1.300"/><path d="M4.500 2.800L8 0L22.800 14.500L19.200 17.400z" fill="#f0d868" stroke="#b89828" stroke-width=".8"/><path d="M7.500 2.200l1.600 1.600M10 4.600l1.200 1.200M12.400 7l1.600 1.600M14.800 9.400l1.200 1.200M17.200 11.800l1.600 1.600" stroke="#fff" stroke-width=".9"/></svg>
<svg style="left:1082.5px;top:49.8px" width="6" height="4" viewBox="0 0 6 4" ><path d="M0 0h6 l-3 3.2 z" fill="#111"/></svg>
<div style="left:257px;top:61px;width:1px;height:60px;background:#c0c0c0"></div>
<div style="left:283px;top:61px;width:1px;height:60px;background:#fafafa"></div>
<div style="left:282px;top:61px;width:1px;height:60px;background:#c8c8c8"></div>
<svg style="left:22px;top:65.8px" width="22" height="22" viewBox="0 0 22 22" ><polygon points="4.5,0.0 5.2,2.9 7.7,1.3 6.1,3.8 9.0,4.5 6.1,5.2 7.7,7.7 5.2,6.1 4.5,9.0 3.8,6.1 1.3,7.7 2.9,5.2 0.0,4.5 2.9,3.8 1.3,1.3 3.8,2.9" fill="#a3aa98"/><path d="M2 6.500h8.500v9H2z" fill="#a6a6ae"/><path d="M7 11.500h13.800v9.800H7z" fill="#a0a0aa"/><path d="M2 9.500h8.500M2 12.500h8.500M5 6.500v9M8 6.500v9M7 14.500h13.800M7 17.800h13.800M11 11.500v9.800M15 11.500v9.800M18.500 11.500v9.800" stroke="#b8b8c0" stroke-width=".7"/></svg>
<div class="t" style="left:9px;top:93px;color:#a2a2a2"><svg width="49" height="14" aria-hidden="true"><use href="#g12_521b" x="0"/><use href="#g12_5efa" x="12"/><use href="#g12_7a0b" x="24"/><use href="#g12_5e8f" x="36"/></svg><span class="sr">创建程序</span></div>
<svg style="left:82px;top:65.7px" width="22" height="22" viewBox="0 0 22 22" ><polygon points="4.8,0.0 5.5,2.9 8.0,1.3 6.4,3.8 9.3,4.5 6.4,5.2 8.0,7.7 5.5,6.1 4.8,9.0 4.1,6.1 1.6,7.7 3.2,5.2 0.3,4.5 3.2,3.8 1.6,1.3 4.1,2.9" fill="#a3aa98"/><path d="M2.200 8h7.800v13.500q-4 1.500-7.800 0z" fill="#9aa0b4"/><path d="M2.200 11q4 2 7.800-1M2.200 15.500q4 2 7.800-1M2.200 20q4 1.500 7.800-1.500" stroke="#c0c4d0" stroke-width="1.200" fill="none"/><path d="M14 0h8v14h-3.500v2H13.500l-1-1.500v-4.500l1.500-1.500z" fill="#a09c94"/><path d="M14 0h8v9h-8z" fill="#8c8c8c"/><path d="M16 0h2.500v9H16z" fill="#a8a8a8"/><circle cx="15.800" cy="12.500" r="1.700" fill="#bcae8c"/><circle cx="15.800" cy="12.500" r=".7" fill="#807868"/></svg>
<div class="t" style="left:69px;top:93px;color:#a2a2a2"><svg width="49" height="14" aria-hidden="true"><use href="#g12_521b" x="0"/><use href="#g12_5efa" x="12"/><use href="#g12_5200" x="24"/><use href="#g12_5177" x="36"/></svg><span class="sr">创建刀具</span></div>
<svg style="left:142px;top:66px" width="22" height="22" viewBox="0 0 22 22" ><polygon points="5.0,-0.3 5.7,2.8 8.4,1.1 6.7,3.8 9.8,4.5 6.7,5.2 8.4,7.9 5.7,6.2 5.0,9.3 4.3,6.2 1.6,7.9 3.3,5.2 0.2,4.5 3.3,3.8 1.6,1.1 4.3,2.8" fill="#a3aa98"/><path d="M7 5.500L20.500 4.500V18L11.500 21.800L3 18V8z" fill="#8c90aa"/><path d="M11.500 8.500L20.500 4.500V18L11.500 21.800z" fill="#7c86a8"/><path d="M3 8l8.500.5V21.800L3 18z" fill="#9c98a8"/><circle cx="6.500" cy="15" r="4.300" fill="#b09684"/><circle cx="5.500" cy="13.800" r="1.800" fill="#c4ae9c" opacity=".7"/></svg>
<div class="t" style="left:129px;top:93px;color:#a2a2a2"><svg width="49" height="14" aria-hidden="true"><use href="#g12_521b" x="0"/><use href="#g12_5efa" x="12"/><use href="#g12_51e0" x="24"/><use href="#g12_4f55" x="36"/></svg><span class="sr">创建几何</span></div>
<div class="t" style="left:147px;top:106px;color:#a2a2a2"><svg width="13" height="14" aria-hidden="true"><use href="#g12_4f53" x="0"/></svg><span class="sr">体</span></div>
<svg style="left:202px;top:65.8px" width="22" height="22" viewBox="0 0 22 22" ><polygon points="5.5,-0.2 6.2,3.0 9.0,1.3 7.3,4.1 10.5,4.8 7.3,5.5 9.0,8.3 6.2,6.6 5.5,9.8 4.8,6.6 2.0,8.3 3.7,5.5 0.5,4.8 3.7,4.1 2.0,1.3 4.8,3.0" fill="#a3aa98"/><path d="M4.500 8h5v13q-2.500 1.300-5 0z" fill="#9a98b0"/><path d="M6.500 8h1.500v13.500h-1.500z" fill="#b4b2c4"/><path d="M3 19.500h8v1.500H3z" fill="#9a98b0"/><path d="M13.500 10.500L22 9.800L20 11.500L11 12.300zM12.500 13.300L20.500 12.600L18.500 14.300L10.500 15zM11 16L17 15.500L15 17.200L10.500 17.600z" fill="#a4a4ac"/></svg>
<div class="t" style="left:189px;top:93px;color:#a2a2a2"><svg width="49" height="14" aria-hidden="true"><use href="#g12_521b" x="0"/><use href="#g12_5efa" x="12"/><use href="#g12_64cd" x="24"/><use href="#g12_4f5c" x="36"/></svg><span class="sr">创建操作</span></div>
<svg style="left:246.5px;top:112px" width="6.5" height="4" viewBox="0 0 6.5 4" ><path d="M0 0h6.5 l-3.25 3.45 z" fill="#111"/></svg>
<svg style="left:308.5px;top:66.3px" width="23" height="23" viewBox="0 0 23 23" ><defs><linearGradient id="gp1" x1="0" y1="0" x2="1" y2="0"><stop offset="0" stop-color="#2030a0"/><stop offset=".5" stop-color="#6878e0"/><stop offset="1" stop-color="#1c2890"/></linearGradient></defs><polygon points="6.5,15.3 7.1,18.0 9.5,16.5 8.0,18.9 10.7,19.5 8.0,20.1 9.5,22.5 7.1,21.0 6.5,23.7 5.9,21.0 3.5,22.5 5.0,20.1 2.3,19.5 5.0,18.9 3.5,16.5 5.9,18.0" fill="#f4e47c"/><path d="M3.500 0.500h6v12.500l1.200 0l-4.200 4l-4.200-4l1.200 0z" fill="url(#gp1)"/><path d="M6.500 1.500v11" stroke="#c0c8ff" stroke-width=".9" stroke-dasharray="1.500 1.500"/><path d="M10.500 5.500L21.800 3.500L19.800 5.400L10.500 7zM10.500 8.500L20.200 6.800L18.200 8.700L10.500 10zM10.500 11.400L14.500 10.700L12.800 12.400L10.500 12.800z" fill="#1c1c2c"/></svg>
<div class="t" style="left:296px;top:93px;color:#000"><svg width="49" height="14" aria-hidden="true"><use href="#g12_751f" x="0"/><use href="#g12_6210" x="12"/><use href="#g12_5200" x="24"/><use href="#g12_8f68" x="36"/></svg><span class="sr">生成刀轨</span></div>
<svg style="left:368.6px;top:65.6px" width="24" height="24" viewBox="0 0 24 24" ><path d="M.5 4.500L3 2.800L4.500 6.200L10 .2L11.500 1.800L4.800 10.200z" fill="#2fba4a" stroke="#178a30" stroke-width=".5"/><path d="M4 13.500L11 11L23 13V21L13 23.500L4 20.500z" fill="#f4e468" stroke="#d8c030" stroke-width=".7"/><path d="M6.500 14.200L11 12.700L20.500 14.200V19L13 21L6.500 19z" fill="#f09030"/><path d="M6.500 14.200L11 12.700V19.500L6.500 19z" fill="#f8b040"/><path d="M18 13.800L20.500 14.200V19L18 19.700z" fill="#20a8a0"/><path d="M16 10V20L18.500 19.500V10z" fill="#189890"/><rect x="11.800" y="3.500" width="5" height="15.500" fill="#2838a0"/><rect x="13" y="3.500" width="1.600" height="15.500" fill="#7c8ce8"/><path d="M11.800 3.500h5" stroke="#1a2470" stroke-width="1"/><path d="M4 20.500L13 23.500L23 21" fill="none" stroke="#d8c030" stroke-width=".9"/></svg>
<div class="t" style="left:356px;top:93px;color:#000"><svg width="49" height="14" aria-hidden="true"><use href="#g12_786e" x="0"/><use href="#g12_8ba4" x="12"/><use href="#g12_5200" x="24"/><use href="#g12_8f68" x="36"/></svg><span class="sr">确认刀轨</span></div>
<svg style="left:429.5px;top:66.2px" width="22" height="22" viewBox="0 0 22 22" ><path d="M6 .8H1v6h4.500v6.500H1v6.500H6.200" fill="none" stroke="#333" stroke-width="1.700"/><path d="M9.500 1.500q5-1 6.200 3.700l1.800-.4l-2.600 3.800l-3.600-2.400l1.900-.4q-.8-2.800-3.700-2.500z" fill="#f08030" stroke="#c85a18" stroke-width=".4"/><path d="M9.500 8.200h7l4 4v9.300h-11z" fill="#f4f6ff" stroke="#8090d0" stroke-width="1"/><path d="M16.500 8.200v4h4" fill="#c8d0f0" stroke="#8090d0" stroke-width=".8"/><path d="M11.500 13.800h5M11.500 16.200h7M11.500 18.600h7" stroke="#7c9ad8" stroke-width="1.200"/></svg>
<div class="t" style="left:416px;top:93px;color:#000"><svg width="49" height="14" aria-hidden="true"><use href="#g12_5217" x="0"/><use href="#g12_51fa" x="12"/><use href="#g12_5200" x="24"/><use href="#g12_8f68" x="36"/></svg><span class="sr">列出刀轨</span></div>
<svg style="left:489px;top:65.8px" width="22" height="23" viewBox="0 0 22 23" ><path d="M1 4.800L3 3L4.800 6L10.500 .2L11.800 1.500L5 9.500z" fill="#6d9a7c"/><path d="M0 9h15.500v5h6.500v2.500h-4v3.500h4V22.500H0z" fill="#8f8f8f"/><path d="M3 11.500h4.500v8H3zM9 11.500h4v4.500H9z" fill="#a4a4a4"/><path d="M0 20.500h18v2H0z" fill="#7c7c7c"/></svg>
<div class="t" style="left:476px;top:93px;color:#8c8c8c"><svg width="49" height="14" aria-hidden="true"><use href="#g12_673a" x="0"/><use href="#g12_5e8a" x="12"/><use href="#g12_4eff" x="24"/><use href="#g12_771f" x="36"/></svg><span class="sr">机床仿真</span></div>
<div style="left:533px;top:61px;width:1px;height:60px;background:#c4c4c4"></div>
<div style="left:534px;top:61px;width:1px;height:60px;background:#fafafa"></div>
<svg style="left:554px;top:66px" width="23" height="22" viewBox="0 0 23 22" ><path d="M0 0h3.500v5.500L9 2.800V6L3.500 9.200H0z" fill="#8e92a4"/><path d="M1.500 11.500q3 5 7.500 3.500l-1.500 3q-5 1-8-4z" fill="#b49c8c"/><path d="M7 12.800l3.500 1.700l-3 2.500z" fill="#b49c8c"/><path d="M10.500 6.500h3V3.800h4V6.500h2.500v4h-2.500v3.500h-4v-3.500h-3z" fill="#8c8c94"/><path d="M8.500 17.500L19 14L23 17.800L21 21.500L12.500 22z" fill="#888890"/><path d="M10 17.800L19 14.800L21.500 17.500L12 20z" fill="#9a9aa2"/></svg>
<div class="t" style="left:548px;top:93px;color:#8c8c8c"><svg width="37" height="14" aria-hidden="true"><use href="#g12_540e" x="0"/><use href="#g12_5904" x="12"/><use href="#g12_7406" x="24"/></svg><span class="sr">后处理</span></div>
<div style="left:908px;top:61px;width:1px;height:60px;background:#c6c6c6"></div>
<div style="left:909px;top:61px;width:1px;height:60px;background:#f0f0f0"></div>
<div style="left:859px;top:74.5px;width:4px;height:6px;background:linear-gradient(#c8d4e4,#7c8ca4)"></div>
<svg style="left:887px;top:89px" width="5.5" height="4" viewBox="0 0 5.5 4" ><path d="M0 0h5.5 l-2.75 2.95 z" fill="#111"/></svg>
<svg style="left:898px;top:112px" width="5.5" height="4" viewBox="0 0 5.5 4" ><path d="M0 0h5.5 l-2.75 2.95 z" fill="#111"/></svg>
<div class="t" style="left:862px;top:95px;color:#000"><span class="m" style="left:0px;top:0px">3D</span></div>
<svg style="left:858px;top:106px" width="6" height="9" viewBox="0 0 6 9" ><path d="M4 0L1.500 8.500" stroke="#111" stroke-width="1.200"/></svg>
<svg style="left:0px;top:0px" width="1435" height="730" viewBox="0 0 1435 730" ><defs><linearGradient id="vbg" gradientUnits="userSpaceOnUse" x1="0" y1="123" x2="0" y2="727"><stop offset="0" stop-color="#25244d"/><stop offset="1" stop-color="#0e6b9e"/></linearGradient><linearGradient id="toolg" x1="0" y1="0" x2="1" y2="0"><stop offset="0" stop-color="#5e5850"/><stop offset=".35" stop-color="#9a806c"/><stop offset="1" stop-color="#4e4c4a"/></linearGradient><linearGradient id="ping" x1="0" y1="0" x2="1" y2="0"><stop offset="0" stop-color="#a8a8a8"/><stop offset="1" stop-color="#7c7c7c"/></linearGradient><clipPath id="vclip"><rect x="0" y="123" width="1112" height="604"/></clipPath></defs><rect x="0" y="123" width="1112" height="604" fill="url(#vbg)"/><g clip-path="url(#vclip)"><path d="M127.8 510.1 L589.5 387.2 L589.5 730 L278 730 L273.7 726 L103.2 573.8 Q93 561 91 549 Q92 537 105 523.7 Q114 515 127.8 510.1Z" fill="#cfcfcf"/><polygon points="859,593.4 918,577.5 922.7,475.9 1112,644 1112,730 859,730" fill="#cfcfcf"/><polygon points="90.8,549 93.7,561.5 103.2,573.8 273.7,726 275,730 83,730" fill="#5c5c5c"/><polygon points="90.8,549 93.7,561.5 103.2,573.8 96.3,730 83,730" fill="#6b6b6b"/><path d="M103.2 573.8L96.3 728" stroke="#333" stroke-width=".8" fill="none"/><path d="M103.2 573.8L273.7 726" stroke="#444" stroke-width=".8" fill="none"/><path d="M922.7 475.9L1112 644" stroke="#2a3a4a" stroke-width="1" fill="none"/><polygon points="344.9,498.2 393.1,540.4 388,722 338.2,676" fill="#626262"/><polygon points="393.1,540.4 589.5,488 589.5,666.7 388,722" fill="#686868"/><path d="M393.1 540.4L388 722M344.9 498.2L338.2 676L388 722L589.5 666.7" stroke="#3a3a3a" stroke-width=".8" fill="none"/><path d="M344.9 498.2L589.5 430.5" stroke="#3c3c3c" stroke-width=".9" fill="none"/><polygon points="859,360.5 874.7,353.5 924.5,396.8 859,414.5" fill="#d2d2d2"/><polygon points="859,414.5 924.5,396.8 918,577.5 859,593.4" fill="#6c6c6c"/><path d="M924.5 396.8L918 577.5L859 593.4" stroke="#444" stroke-width=".8" fill="none"/><path d="M859 198 L867.3 252 Q867.5 258 864 261 L862.6 388 Q861 391.500 859 392Z" fill="url(#ping)"/><path d="M859 262 Q862 263 864 260.500" stroke="#777" stroke-width=".7" fill="none"/><path d="M201.4 215.0L155.5 174.0L226.6 208.4L206.0 160.9L251.8 201.9M268.2 142.9L218.4 157.7L241.4 176.3L274.1 163.2L293.8 164.2L310.2 179.9L297.0 189.4L274.1 195.3L261.0 194.7M306.9 133.8L352.7 174.0M346.2 176.3L360.9 171.8M374.0 147.8L388.8 159.3L408.4 160.0L429.7 152.8L437.2 145.5L421.5 133.8L398.6 133.1L378.9 140.3ZM348.8 123.3L364.2 138.0L385.5 139.7L408.4 129.8L415.6 123.3M437.9 129.8L457.5 124.9M478.8 123.9L491.9 135.7M469.0 152.8L477.2 169.1L503.4 183.9L523.1 185.5L537.8 182.2L543.4 172.4L534.5 156.0L513.2 142.9L490.3 140.3L477.2 144.6ZM524.7 135.7L542.7 126.6L555.8 123.9M564.0 147.8L588.6 139.7M564.0 169.8L578.7 170.8L588.6 167.5M580.4 123.9L588.6 133.1M254.5 204.5L205.3 217.6L251.2 259.2M226.6 234.6L253.8 226.5M302.9 217.6L328.2 211.1M342.3 187.1L350.1 201.9L372.4 215.6L392.0 219.9L408.4 216.6L416.6 207.8L406.8 190.4L388.8 179.0L365.8 175.0L349.5 178.3ZM450.3 195.3L460.8 202.5L472.3 198.6L462.5 191.1Z" stroke="#44765f" stroke-width="1.150" fill="none"/><path d="M298.7 124L290.8 300M397.9 124L390.2 318" stroke="#1428d8" stroke-width="1.3" stroke-dasharray="7 4" fill="none"/><path d="M291.2 356.4l4.200 4.200M292.0 366.0l4.200 4.200M292.8 375.6l4.200 4.200M293.6 385.2l4.200 4.200M294.4 394.8l4.200 4.200M295.2 404.4l4.200 4.200M296.0 414.0l4.200 4.200M296.8 423.6l4.200 4.200M297.6 433.2l4.200 4.200M298.4 442.8l4.200 4.200M299.2 452.4l4.200 4.200M300.0 462.0l4.200 4.200M300.8 471.6l4.200 4.200M301.6 481.2l4.200 4.200M300.3 330.5l4.200 4.200M301.1 340.1l4.200 4.200M301.9 349.7l4.200 4.200M302.7 359.3l4.200 4.200M303.5 368.9l4.200 4.200M304.3 378.5l4.200 4.200M305.1 388.1l4.200 4.200M305.9 397.7l4.200 4.200M306.7 407.3l4.200 4.200M307.5 416.9l4.200 4.200M308.3 426.5l4.200 4.200M309.1 436.1l4.200 4.200M309.9 445.7l4.200 4.200M310.7 455.3l4.200 4.200M311.5 464.9l4.200 4.200M312.3 474.5l4.200 4.200M313.1 484.1l4.200 4.200M313.9 493.7l4.200 4.200M311.8 333.4l4.200 4.200M312.6 343.0l4.200 4.200M313.4 352.6l4.200 4.200M314.2 362.2l4.200 4.200M315.0 371.8l4.200 4.200M315.8 381.4l4.200 4.200M316.6 391.0l4.200 4.200M317.4 400.6l4.200 4.200M318.2 410.2l4.200 4.200M319.0 419.8l4.200 4.200M319.8 429.4l4.200 4.200M320.6 439.0l4.200 4.200M321.4 448.6l4.200 4.200M322.2 458.2l4.200 4.200M323.0 467.8l4.200 4.200M323.8 477.4l4.200 4.200M324.6 487.0l4.200 4.200M325.4 496.6l4.200 4.200M326.2 506.2l4.200 4.200M323.3 336.3l4.200 4.200M324.1 345.9l4.200 4.200M324.9 355.5l4.200 4.200M325.7 365.1l4.200 4.200M326.5 374.7l4.200 4.200M327.3 384.3l4.200 4.200M328.1 393.9l4.200 4.200M328.9 403.5l4.200 4.200M329.7 413.1l4.200 4.200M330.5 422.7l4.200 4.200M331.3 432.3l4.200 4.200M332.1 441.9l4.200 4.200M332.9 451.5l4.200 4.200M333.7 461.1l4.200 4.200M334.5 470.7l4.200 4.200M335.3 480.3l4.200 4.200M336.1 489.9l4.200 4.200M336.9 499.5l4.200 4.200M337.7 509.1l4.200 4.200M338.5 518.7l4.200 4.200M339.3 528.3l4.200 4.200M334.0 329.6l4.200 4.200M334.8 339.2l4.200 4.200M335.6 348.8l4.200 4.200M336.4 358.4l4.200 4.200M337.2 368.0l4.200 4.200M338.0 377.6l4.200 4.200M338.8 387.2l4.200 4.200M339.6 396.8l4.200 4.200M340.4 406.4l4.200 4.200M341.2 416.0l4.200 4.200M342.0 425.6l4.200 4.200M342.8 435.2l4.200 4.200M343.6 444.8l4.200 4.200M344.4 454.4l4.200 4.200M345.2 464.0l4.200 4.200M346.0 473.6l4.200 4.200M346.8 483.2l4.200 4.200M347.6 492.8l4.200 4.200M348.4 502.4l4.200 4.200M349.2 512.0l4.200 4.200M350.0 521.6l4.200 4.200M350.8 531.2l4.200 4.200M351.6 540.8l4.200 4.200M345.5 332.5l4.200 4.200M346.3 342.1l4.200 4.200M347.1 351.7l4.200 4.200M347.9 361.3l4.200 4.200M348.7 370.9l4.200 4.200M349.5 380.5l4.200 4.200M350.3 390.1l4.200 4.200M351.1 399.7l4.200 4.200M351.9 409.3l4.200 4.200M352.7 418.9l4.200 4.200M353.5 428.5l4.200 4.200M354.3 438.1l4.200 4.200M355.1 447.7l4.200 4.200M355.9 457.3l4.200 4.200M356.7 466.9l4.200 4.200M357.5 476.5l4.200 4.200M358.3 486.1l4.200 4.200M359.1 495.7l4.200 4.200M359.9 505.3l4.200 4.200M360.7 514.9l4.200 4.200M361.5 524.5l4.200 4.200M362.3 534.1l4.200 4.200M363.1 543.7l4.200 4.200M357.0 335.4l4.200 4.200M357.8 345.0l4.200 4.200M358.6 354.6l4.200 4.200M359.4 364.2l4.200 4.200M360.2 373.8l4.200 4.200M361.0 383.4l4.200 4.200M361.8 393.0l4.200 4.200M362.6 402.6l4.200 4.200M363.4 412.2l4.200 4.200M364.2 421.8l4.200 4.200M365.0 431.4l4.200 4.200M365.8 441.0l4.200 4.200M366.6 450.6l4.200 4.200M367.4 460.2l4.200 4.200M368.2 469.8l4.200 4.200M369.0 479.4l4.200 4.200M369.8 489.0l4.200 4.200M370.6 498.6l4.200 4.200M371.4 508.2l4.200 4.200M372.2 517.8l4.200 4.200M368.5 338.3l4.200 4.200M369.3 347.9l4.200 4.200M370.1 357.5l4.200 4.200M370.9 367.1l4.200 4.200M371.7 376.7l4.200 4.200M372.5 386.3l4.200 4.200M373.3 395.9l4.200 4.200M374.1 405.5l4.200 4.200M374.9 415.1l4.200 4.200M375.7 424.7l4.200 4.200M376.5 434.3l4.200 4.200M377.3 443.9l4.200 4.200M378.1 453.5l4.200 4.200M380.0 341.2l4.200 4.200M380.8 350.8l4.200 4.200M381.6 360.4l4.200 4.200M382.4 370.0l4.200 4.200M383.2 379.6l4.200 4.200M384.0 389.2l4.200 4.200M384.8 398.8l4.200 4.200M385.6 408.4l4.200 4.200M386.4 418.0l4.200 4.200M387.2 427.6l4.200 4.200" stroke="#1a2ed4" stroke-width="1.250" fill="none"/><clipPath id="topc"><polygon points="0,123 589.5,123 589.5,488 393.1,540.4 344.9,498.2 0,498"/></clipPath><path d="M376 455 L472.5 429.5 L472.5 512 Q470 530 426 540 Q384 536 380 512Z" fill="#a8ecf4" opacity=".5" clip-path="url(#topc)"/><path d="M300.0 317.6Q347.3 318.1 386.0 339.6M297.5 326.2Q345.8 326.7 385.3 348.1M295.0 334.8Q344.3 335.3 384.6 356.5M292.5 343.4Q342.8 343.9 383.9 365.0M290.0 352.0Q341.3 352.5 383.2 373.4M287.5 360.6Q339.8 361.1 382.5 381.9M287.5 369.2Q339.4 369.7 381.8 390.3M287.4 377.8Q338.9 378.3 381.1 398.8M287.2 386.4Q338.5 386.9 380.4 407.2M287.1 395.0Q338.0 395.5 379.7 415.6M286.9 403.6Q337.6 404.1 379.0 424.1M286.8 412.2Q337.1 412.7 378.3 432.6M286.6 420.8Q336.7 421.3 377.6 441.0M286.4 429.4Q336.2 429.9 376.9 449.5M286.3 438.0Q335.7 438.5 376.2 457.9M286.1 446.6Q335.3 447.1 375.5 466.4M286.0 455.2Q334.8 455.7 374.8 474.8M285.9 463.8Q334.4 464.3 374.1 483.2M285.7 472.4Q333.9 472.9 373.4 491.7M285.6 481.0Q333.5 481.5 372.7 500.1M285.5 489.6Q333.1 490.1 372.0 508.6M300.0 298.6V326.6M297.5 307.2V335.2M295.0 315.8V343.8M292.5 324.4V352.4M290.0 333.0V361.0M287.5 341.6V369.6M286.3 370V490H346" stroke="#e3b7ea" stroke-width="1.15" fill="none"/><path d="M388.0 352.0L384.0 372.0L379.5 395.0L377.0 415.0L375.5 440.0L374.5 470.0L373.0 500.0L371.5 522.0L371.0 568.0M401.0 350.0L405.5 364.0L405.0 378.0L400.0 395.0L397.5 410.0L397.0 440.0L395.5 470.0L394.0 505.0L392.5 535.0L392.0 546.0L386.0 560.0L371.5 569.0M388.0 361.0L404.5 352.0M388.0 352.0L404.5 361.0M386.7 367.5L405.4 358.5M386.7 358.5L405.4 367.5M385.4 374.0L405.1 365.0M385.4 365.0L405.1 374.0M384.1 380.5L404.3 371.5M384.1 371.5L404.3 380.5M382.8 387.0L402.4 378.0M382.8 378.0L402.4 387.0M381.6 393.5L400.4 384.5M381.6 384.5L400.4 393.5M380.3 400.0L399.2 391.0M380.3 391.0L399.2 400.0M379.2 406.5L398.1 397.5M379.2 397.5L398.1 406.5M378.4 413.0L397.5 404.0M378.4 404.0L397.5 413.0M377.6 419.5L397.3 410.5M377.6 410.5L397.3 419.5M376.9 426.0L397.2 417.0M376.9 417.0L397.2 426.0M376.5 432.5L397.1 423.5M376.5 423.5L397.1 432.5M376.1 439.0L397.0 430.0M376.1 430.0L397.0 439.0M375.7 445.5L396.7 436.5M375.7 436.5L396.7 445.5M375.4 452.0L396.4 443.0M375.4 443.0L396.4 452.0M375.2 458.5L396.1 449.5M375.2 449.5L396.1 458.5M375.0 465.0L395.8 456.0M375.0 456.0L395.8 465.0M374.8 471.5L395.4 462.5M374.8 462.5L395.4 471.5M374.5 478.0L395.2 469.0M374.5 469.0L395.2 478.0" stroke="#f0cc38" stroke-width="1.1" fill="none"/><path d="M376 452L397.5 446L394.5 522L372 522Z" fill="#f4dc70" opacity=".55"/><path d="M371 527.0Q384.0 525.0 392.5 513.0M371 532.0Q384.0 530.0 392.5 519.1M371 537.0Q384.0 535.0 392.5 525.2M371 542.0Q384.0 540.0 392.5 531.3M371 547.0Q384.0 545.0 392.5 537.4M371 552.0Q384.0 550.0 390.8 543.5M371 557.0Q384.0 555.0 388.1 549.6M371 562.0Q378 561.0 386.0 554.0M371 567.0Q378 566.0 380.0 559.0" stroke="#f0cc38" stroke-width="1" fill="none"/><g stroke="#4fe4f4" stroke-width="1" fill="none" stroke-dasharray="1.5 2.5" opacity=".9" clip-path="url(#topc)"><ellipse cx="426.0" cy="453.5" rx="46.0" ry="12.5" transform="rotate(2 426.0 453.5)"/><ellipse cx="426.0" cy="459.8" rx="46.0" ry="12.5" transform="rotate(-2 426.0 459.8)"/><ellipse cx="426.0" cy="466.1" rx="46.0" ry="12.5" transform="rotate(2 426.0 466.1)"/><ellipse cx="426.0" cy="472.4" rx="46.0" ry="12.5" transform="rotate(-2 426.0 472.4)"/><ellipse cx="426.0" cy="478.7" rx="46.0" ry="12.5" transform="rotate(2 426.0 478.7)"/><ellipse cx="426.0" cy="485.0" rx="46.0" ry="12.5" transform="rotate(-2 426.0 485.0)"/><ellipse cx="426.0" cy="491.3" rx="46.0" ry="12.5" transform="rotate(2 426.0 491.3)"/><ellipse cx="426.0" cy="497.6" rx="46.0" ry="12.5" transform="rotate(-2 426.0 497.6)"/><ellipse cx="426.0" cy="503.9" rx="46.0" ry="12.5" transform="rotate(2 426.0 503.9)"/><ellipse cx="426.0" cy="510.2" rx="46.0" ry="12.5" transform="rotate(-2 426.0 510.2)"/><ellipse cx="426.0" cy="516.5" rx="46.0" ry="12.5" transform="rotate(2 426.0 516.5)"/><ellipse cx="426.0" cy="522.8" rx="46.0" ry="12.5" transform="rotate(-2 426.0 522.8)"/><ellipse cx="426.0" cy="529.1" rx="46.0" ry="12.5" transform="rotate(2 426.0 529.1)"/></g><path d="M427 323.5 L433 347 L437 378 L437 504 Q424 511 410.5 504 L410.5 378 L418 347Z" fill="url(#toolg)"/><ellipse cx="423.7" cy="504" rx="13.3" ry="4.5" fill="#4a4a4a"/><g stroke="#3fe0f2" stroke-width="1" fill="none" opacity=".92"><ellipse cx="428.0" cy="327.5" rx="37.5" ry="12.5" transform="rotate(2 428.0 327.5)"/><ellipse cx="427.8" cy="333.8" rx="38.4" ry="12.5" transform="rotate(-2 427.8 333.8)"/><ellipse cx="427.6" cy="340.1" rx="39.2" ry="12.5" transform="rotate(2 427.6 340.1)"/><ellipse cx="427.4" cy="346.4" rx="40.0" ry="12.5" transform="rotate(-2 427.4 346.4)"/><ellipse cx="427.2" cy="352.7" rx="40.9" ry="12.5" transform="rotate(2 427.2 352.7)"/><ellipse cx="427.0" cy="359.0" rx="41.8" ry="12.5" transform="rotate(-2 427.0 359.0)"/><ellipse cx="426.8" cy="365.3" rx="42.6" ry="12.5" transform="rotate(2 426.8 365.3)"/><ellipse cx="426.6" cy="371.6" rx="43.5" ry="12.5" transform="rotate(-2 426.6 371.6)"/><ellipse cx="426.4" cy="377.9" rx="44.3" ry="12.5" transform="rotate(2 426.4 377.9)"/><ellipse cx="426.2" cy="384.2" rx="45.1" ry="12.5" transform="rotate(-2 426.2 384.2)"/><ellipse cx="426.0" cy="390.5" rx="46.0" ry="12.5" transform="rotate(2 426.0 390.5)"/><ellipse cx="426.0" cy="396.8" rx="46.0" ry="12.5" transform="rotate(-2 426.0 396.8)"/><ellipse cx="426.0" cy="403.1" rx="46.0" ry="12.5" transform="rotate(2 426.0 403.1)"/><ellipse cx="426.0" cy="409.4" rx="46.0" ry="12.5" transform="rotate(-2 426.0 409.4)"/><ellipse cx="426.0" cy="415.7" rx="46.0" ry="12.5" transform="rotate(2 426.0 415.7)"/><ellipse cx="426.0" cy="422.0" rx="46.0" ry="12.5" transform="rotate(-2 426.0 422.0)"/><ellipse cx="426.0" cy="428.3" rx="46.0" ry="12.5" transform="rotate(2 426.0 428.3)"/><ellipse cx="426.0" cy="434.6" rx="46.0" ry="12.5" transform="rotate(-2 426.0 434.6)"/><ellipse cx="426.0" cy="440.9" rx="46.0" ry="12.5" transform="rotate(2 426.0 440.9)"/><ellipse cx="426.0" cy="447.2" rx="46.0" ry="12.5" transform="rotate(-2 426.0 447.2)"/></g><path d="M410.5 452.0Q423.7 455.2 437.0 452.0M410.5 458.3Q423.7 461.5 437.0 458.3M410.5 464.6Q423.7 467.8 437.0 464.6M410.5 470.9Q423.7 474.1 437.0 470.9M410.5 477.2Q423.7 480.4 437.0 477.2M410.5 483.5Q423.7 486.7 437.0 483.5M410.5 489.8Q423.7 493.0 437.0 489.8M410.5 496.1Q423.7 499.3 437.0 496.1M410.5 502.4Q423.7 505.6 437.0 502.4M410.5 508.7Q423.7 511.9 437.0 508.7" stroke="#58d8e8" stroke-width="1" fill="none" opacity=".8"/><path d="M420.0 309.0l5.5 4M443.0 312.0l7 1.800M423.0 315.5l5.5 4M445.5 318.5l7 1.800M420.0 322.0l5.5 4M443.0 325.0l7 1.800M423.0 328.5l5.5 4M445.5 331.5l7 1.800M418.2 335.0l5.5 4M443.0 338.0l7 1.800M417.8 341.5l5.5 4M445.5 344.5l7 1.800M417.4 348.0l5.5 4M443.0 351.0l7 1.800M417.0 354.5l5.5 4M445.5 357.5l7 1.800M416.6 361.0l5.5 4M443.0 364.0l7 1.800M416.2 367.5l5.5 4M445.5 370.5l7 1.800M415.9 374.0l5.5 4M443.0 377.0l7 1.800M415.5 380.5l5.5 4M445.5 383.5l7 1.800M415.5 387.0l5.5 4M443.0 390.0l7 1.800M415.5 393.5l5.5 4M445.5 396.5l7 1.800M415.5 400.0l5.5 4M443.0 403.0l7 1.800M415.5 406.5l5.5 4M445.5 409.5l7 1.800M415.5 413.0l5.5 4M443.0 416.0l7 1.800M415.5 419.5l5.5 4M445.5 422.5l7 1.800M415.5 426.0l5.5 4M443.0 429.0l7 1.800M415.5 432.5l5.5 4M445.5 435.5l7 1.800M415.5 439.0l5.5 4M443.0 442.0l7 1.800M415.5 445.5l5.5 4M445.5 448.5l7 1.800M415.5 452.0l5.5 4M443.0 455.0l7 1.800M415.5 458.5l5.5 4M445.5 461.5l7 1.800M415.5 465.0l5.5 4M443.0 468.0l7 1.800M415.5 471.5l5.5 4M445.5 474.5l7 1.800M415.5 478.0l5.5 4M443.0 481.0l7 1.800M415.5 484.5l5.5 4M445.5 487.5l7 1.800M415.5 491.0l5.5 4M443.0 494.0l7 1.800M415.5 497.5l5.5 4M445.5 500.5l7 1.800" stroke="#d88a5c" stroke-width="1.300" fill="none" opacity=".85"/><path d="M409.1 291L470.6 300.8L431.3 311.6Z" stroke="#e0664a" stroke-width="1.2" fill="none"/><path d="M420 307l8 5M438 313l8 2M447 309l6 1" stroke="#e0664a" stroke-width="1" fill="none"/><path d="M404 476L456 480L423 492" stroke="#e07050" stroke-width=".9" fill="none" opacity=".8"/><g><path d="M37.5 651l12-7 17 6v16l-12 7-17-6z" fill="#b9bccb" opacity=".9"/><path d="M37.5 651l17 6 12-7M54.5 657v16M49.5 644v16l-12 7M49.5 660l17 6" stroke="#b58a9a" stroke-width=".7" fill="none"/><path d="M48 673L33.5 662" stroke="#3cb05a" stroke-width="1.4"/><path d="M50 673.5L77 667.5" stroke="#d86060" stroke-width="1.6"/><path d="M48.5 671V650" stroke="#0a22c8" stroke-width="2.6"/><path d="M45.2 652l3.4-8 3.4 8z" fill="#0a22c8"/><circle cx="48" cy="675.5" r="4.2" fill="#f4f4f4"/><circle cx="49" cy="676.5" r="2.5" fill="#d0d0d0" opacity=".6"/><path d="M78 663l6 7M84 663l-6 7" stroke="#d86060" stroke-width="1.2"/><path d="M26 653l3 4 3-5M29 657v4" stroke="#3cb05a" stroke-width="1.2" fill="none"/><path d="M46.5 637.5h6l-6 6.5h6" stroke="#1a5ae0" stroke-width="1.3" fill="none"/></g></g></svg>
<div style="left:589px;top:38px;width:270px;height:692px;background:#ececec;border-radius:5px 5px 0 0;border-left:1px solid #f6f6f6;border-right:1px solid #c4c4c4"></div>
<div style="left:589px;top:37.5px;width:270px;height:25.5px;background:linear-gradient(#8c8c8c 0,#6e6e6e 14%,#4e4e4e 30%,#1c1c1c 35%,#1a1a1a 100%);border-radius:5px 5px 0 0;border:1px solid #0c0c0c;border-bottom:2px solid #0a0a0a"></div>
<div class="t" style="left:598px;top:45px;color:#fff"><svg width="85" height="15" aria-hidden="true"><use href="#g13_6df1" x="0"/><use href="#g13_6df1" x="1"/><use href="#g13_5ea6" x="14"/><use href="#g13_5ea6" x="15"/><use href="#g13_52a0" x="28"/><use href="#g13_52a0" x="29"/><use href="#g13_5de5" x="42"/><use href="#g13_5de5" x="43"/><use href="#g13_8f6e" x="56"/><use href="#g13_8f6e" x="57"/><use href="#g13_5ed3" x="70"/><use href="#g13_5ed3" x="71"/></svg><span class="sr">深度加工轮廓</span></div>
<div style="left:813px;top:41px;width:19.5px;height:19px;background:linear-gradient(#767676,#545454 48%,#3e3e3e 52%,#464646);border:1px solid #9a9a9a;border-radius:3px"></div>
<div style="left:817.3px;top:47px;width:10.4px;height:3px;background:#fff"></div>
<div style="left:836px;top:41px;width:19.5px;height:19px;background:linear-gradient(#e78a72,#d8533a 48%,#c9361c 52%,#d6512f);border:1px solid #e9b4a6;border-radius:3px"></div>
<svg style="left:836px;top:41px" width="19.5" height="19" viewBox="0 0 19.5 19" ><path d="M5 4.5L14.5 14.5M14.5 4.5L5 14.5" stroke="#fff" stroke-width="2.2"/></svg>
<div style="left:596px;top:66px;width:257px;height:664px;background:#d4d4d4;border-left:1px solid #bdbdbd;border-right:1px solid #b4b4b4"></div>
<div style="left:596px;top:67px;width:257px;height:23px;background:linear-gradient(#fbfbfb 0,#f1f1f1 48%,#e1e1e1 52%,#e9e9e9 100%);border-top:1px solid #fff;border-bottom:1px solid #b3b3b3"></div>
<div style="left:829.5px;top:67px;width:1px;height:22px;background:#fff"></div>
<div style="left:828.5px;top:68px;width:1px;height:21px;background:#cfcfcf"></div>
<div class="t" style="left:602px;top:72px;color:#000"><svg width="40" height="14" aria-hidden="true"><use href="#g12_51e0" x="0"/><use href="#g12_51e0" x="1"/><use href="#g12_4f55" x="13"/><use href="#g12_4f55" x="14"/><use href="#g12_4f53" x="26"/><use href="#g12_4f53" x="27"/></svg><span class="sr">几何体</span></div>
<svg style="left:834px;top:73px" width="14" height="10" viewBox="0 0 14 10" ><path d="M1.8 8.6L7 2.6L12.2 8.6" stroke="#505050" stroke-width="2.700" fill="none"/></svg>
<div style="left:596px;top:273px;width:257px;height:23px;background:linear-gradient(#fbfbfb 0,#f1f1f1 48%,#e1e1e1 52%,#e9e9e9 100%);border-top:1px solid #fff;border-bottom:1px solid #b3b3b3"></div>
<div style="left:829.5px;top:273px;width:1px;height:22px;background:#fff"></div>
<div style="left:828.5px;top:274px;width:1px;height:21px;background:#cfcfcf"></div>
<div class="t" style="left:602px;top:278px;color:#000"><svg width="27" height="14" aria-hidden="true"><use href="#g12_5200" x="0"/><use href="#g12_5200" x="1"/><use href="#g12_5177" x="13"/><use href="#g12_5177" x="14"/></svg><span class="sr">刀具</span></div>
<svg style="left:834px;top:280px" width="14" height="10" viewBox="0 0 14 10" ><path d="M1.8 1.6L7 7.6L12.2 1.6" stroke="#505050" stroke-width="2.700" fill="none"/></svg>
<div style="left:596px;top:296px;width:257px;height:23px;background:linear-gradient(#fbfbfb 0,#f1f1f1 48%,#e1e1e1 52%,#e9e9e9 100%);border-top:1px solid #fff;border-bottom:1px solid #b3b3b3"></div>
<div style="left:829.5px;top:296px;width:1px;height:22px;background:#fff"></div>
<div style="left:828.5px;top:297px;width:1px;height:21px;background:#cfcfcf"></div>
<div class="t" style="left:602px;top:301px;color:#000"><svg width="27" height="14" aria-hidden="true"><use href="#g12_5200" x="0"/><use href="#g12_5200" x="1"/><use href="#g12_8f74" x="13"/><use href="#g12_8f74" x="14"/></svg><span class="sr">刀轴</span></div>
<svg style="left:834px;top:303px" width="14" height="10" viewBox="0 0 14 10" ><path d="M1.8 1.6L7 7.6L12.2 1.6" stroke="#505050" stroke-width="2.700" fill="none"/></svg>
<div style="left:596px;top:319px;width:257px;height:23px;background:linear-gradient(#fbfbfb 0,#f1f1f1 48%,#e1e1e1 52%,#e9e9e9 100%);border-top:1px solid #fff;border-bottom:1px solid #b3b3b3"></div>
<div style="left:829.5px;top:319px;width:1px;height:22px;background:#fff"></div>
<div style="left:828.5px;top:320px;width:1px;height:21px;background:#cfcfcf"></div>
<div class="t" style="left:602px;top:324px;color:#000"><svg width="53" height="14" aria-hidden="true"><use href="#g12_5200" x="0"/><use href="#g12_5200" x="1"/><use href="#g12_8f68" x="13"/><use href="#g12_8f68" x="14"/><use href="#g12_8bbe" x="26"/><use href="#g12_8bbe" x="27"/><use href="#g12_7f6e" x="39"/><use href="#g12_7f6e" x="40"/></svg><span class="sr">刀轨设置</span></div>
<svg style="left:834px;top:325px" width="14" height="10" viewBox="0 0 14 10" ><path d="M1.8 8.6L7 2.6L12.2 8.6" stroke="#505050" stroke-width="2.700" fill="none"/></svg>
<div style="left:596px;top:635px;width:257px;height:23px;background:linear-gradient(#fbfbfb 0,#f1f1f1 48%,#e1e1e1 52%,#e9e9e9 100%);border-top:1px solid #fff;border-bottom:1px solid #b3b3b3"></div>
<div style="left:829.5px;top:635px;width:1px;height:22px;background:#fff"></div>
<div style="left:828.5px;top:636px;width:1px;height:21px;background:#cfcfcf"></div>
<div class="t" style="left:602px;top:640px;color:#000"><svg width="53" height="14" aria-hidden="true"><use href="#g12_673a" x="0"/><use href="#g12_673a" x="1"/><use href="#g12_5e8a" x="13"/><use href="#g12_5e8a" x="14"/><use href="#g12_63a7" x="26"/><use href="#g12_63a7" x="27"/><use href="#g12_5236" x="39"/><use href="#g12_5236" x="40"/></svg><span class="sr">机床控制</span></div>
<svg style="left:834px;top:642px" width="14" height="10" viewBox="0 0 14 10" ><path d="M1.8 1.6L7 7.6L12.2 1.6" stroke="#505050" stroke-width="2.700" fill="none"/></svg>
<div style="left:596px;top:658px;width:257px;height:23px;background:linear-gradient(#fbfbfb 0,#f1f1f1 48%,#e1e1e1 52%,#e9e9e9 100%);border-top:1px solid #fff;border-bottom:1px solid #b3b3b3"></div>
<div style="left:829.5px;top:658px;width:1px;height:22px;background:#fff"></div>
<div style="left:828.5px;top:659px;width:1px;height:21px;background:#cfcfcf"></div>
<div class="t" style="left:602px;top:663px;color:#000"><svg width="27" height="14" aria-hidden="true"><use href="#g12_7a0b" x="0"/><use href="#g12_7a0b" x="1"/><use href="#g12_5e8f" x="13"/><use href="#g12_5e8f" x="14"/></svg><span class="sr">程序</span></div>
<svg style="left:834px;top:665px" width="14" height="10" viewBox="0 0 14 10" ><path d="M1.8 1.6L7 7.6L12.2 1.6" stroke="#505050" stroke-width="2.700" fill="none"/></svg>
<div style="left:596px;top:681px;width:257px;height:23px;background:linear-gradient(#fbfbfb 0,#f1f1f1 48%,#e1e1e1 52%,#e9e9e9 100%);border-top:1px solid #fff;border-bottom:1px solid #b3b3b3"></div>
<div style="left:829.5px;top:681px;width:1px;height:22px;background:#fff"></div>
<div style="left:828.5px;top:682px;width:1px;height:21px;background:#cfcfcf"></div>
<div class="t" style="left:602px;top:686px;color:#000"><svg width="27" height="14" aria-hidden="true"><use href="#g12_9009" x="0"/><use href="#g12_9009" x="1"/><use href="#g12_9879" x="13"/><use href="#g12_9879" x="14"/></svg><span class="sr">选项</span></div>
<svg style="left:834px;top:688px" width="14" height="10" viewBox="0 0 14 10" ><path d="M1.8 1.6L7 7.6L12.2 1.6" stroke="#505050" stroke-width="2.700" fill="none"/></svg>
<div style="left:596px;top:704px;width:257px;height:23px;background:linear-gradient(#fbfbfb 0,#f1f1f1 48%,#e1e1e1 52%,#e9e9e9 100%);border-top:1px solid #fff;border-bottom:1px solid #b3b3b3"></div>
<div style="left:829.5px;top:704px;width:1px;height:22px;background:#fff"></div>
<div style="left:828.5px;top:705px;width:1px;height:21px;background:#cfcfcf"></div>
<div class="t" style="left:602px;top:709px;color:#000"><svg width="27" height="14" aria-hidden="true"><use href="#g12_64cd" x="0"/><use href="#g12_64cd" x="1"/><use href="#g12_4f5c" x="13"/><use href="#g12_4f5c" x="14"/></svg><span class="sr">操作</span></div>
<svg style="left:834px;top:710px" width="14" height="10" viewBox="0 0 14 10" ><path d="M1.8 8.6L7 2.6L12.2 8.6" stroke="#505050" stroke-width="2.700" fill="none"/></svg>
<div style="left:596px;top:90px;width:257px;height:2px;background:linear-gradient(#a9a9a9,#c6c6c6)"></div>
<div style="left:596px;top:342px;width:257px;height:2px;background:linear-gradient(#a9a9a9,#c6c6c6)"></div>
<div style="left:596px;top:727px;width:257px;height:2px;background:linear-gradient(#a9a9a9,#c6c6c6)"></div>
<div style="left:597px;top:92px;width:2.5px;height:181px;background:linear-gradient(to right,#b2b2b2,#d4d4d4)"></div>
<div style="left:597px;top:344px;width:2.5px;height:291px;background:linear-gradient(to right,#b2b2b2,#d4d4d4)"></div>
<div class="t" style="left:604px;top:100px;color:#000"><svg width="37" height="14" aria-hidden="true"><use href="#g12_51e0" x="0"/><use href="#g12_4f55" x="12"/><use href="#g12_4f53" x="24"/></svg><span class="sr">几何体</span></div>
<div style="left:690px;top:97px;width:85px;height:17.5px;background:#fff;border:1px solid #7d7d7d;border-radius:3px;box-shadow:inset 0 1px 1px #b0b0b0"></div>
<div style="left:757.5px;top:97px;width:17.5px;height:17.5px;background:linear-gradient(#cfe3f7 0,#9cc6ee 45%,#5fa0dc 55%,#8fc3ee 100%);border:1px solid #5d7da3;border-radius:0 3px 3px 0"></div>
<svg style="left:757.5px;top:97px" width="17.5" height="17.5" viewBox="0 0 17.5 17.5" ><path d="M3.6 5.55 h10.6 l-5.3 6.6z" fill="#10192c"/></svg>
<div class="t" style="left:694px;top:100px;color:#000"><span class="m" style="left:0px;top:0px">MCS</span></div>
<div class="t" style="left:604px;top:140px;color:#000"><svg width="49" height="14" aria-hidden="true"><use href="#g12_6307" x="0"/><use href="#g12_5b9a" x="12"/><use href="#g12_90e8" x="24"/><use href="#g12_4ef6" x="36"/></svg><span class="sr">指定部件</span></div>
<div class="t" style="left:604px;top:174px;color:#000"><svg width="49" height="14" aria-hidden="true"><use href="#g12_6307" x="0"/><use href="#g12_5b9a" x="12"/><use href="#g12_68c0" x="24"/><use href="#g12_67e5" x="36"/></svg><span class="sr">指定检查</span></div>
<div class="t" style="left:604px;top:208px;color:#000"><svg width="73" height="14" aria-hidden="true"><use href="#g12_6307" x="0"/><use href="#g12_5b9a" x="12"/><use href="#g12_5207" x="24"/><use href="#g12_524a" x="36"/><use href="#g12_533a" x="48"/><use href="#g12_57df" x="60"/></svg><span class="sr">指定切削区域</span></div>
<div class="t" style="left:604px;top:242px;color:#000"><svg width="73" height="14" aria-hidden="true"><use href="#g12_6307" x="0"/><use href="#g12_5b9a" x="12"/><use href="#g12_4fee" x="24"/><use href="#g12_526a" x="36"/><use href="#g12_8fb9" x="48"/><use href="#g12_754c" x="60"/></svg><span class="sr">指定修剪边界</span></div>
<div style="left:779px;top:97px;width:30px;height:30px;background:linear-gradient(#fbfbfb,#e9e9e9 50%,#dcdcdc 52%,#e6e6e6);border:2px solid #747474;border-radius:4px;box-shadow:0 0 0 1px rgba(255,255,255,.55)"></div>
<div style="left:813px;top:97px;width:30px;height:30px;background:linear-gradient(#fbfbfb,#e9e9e9 50%,#dcdcdc 52%,#e6e6e6);border:2px solid #747474;border-radius:4px;box-shadow:0 0 0 1px rgba(255,255,255,.55)"></div>
<svg style="left:779px;top:97px" width="30" height="30" viewBox="0 0 30 30" ><defs><linearGradient id="dg1" x1="0" y1="0" x2="1" y2="1"><stop offset="0" stop-color="#5aa0ff"/><stop offset="1" stop-color="#0a3cc0"/></linearGradient><radialGradient id="dg2" cx=".35" cy=".35" r=".7"><stop offset="0" stop-color="#ffd8a0"/><stop offset="1" stop-color="#e07020"/></radialGradient></defs><path d="M10 9.500L20.500 6.500L25 9V20.500L17 25.500L10 22z" fill="url(#dg1)"/><path d="M10 9.500L20.500 6.500L25 9L16 12z" fill="#78b8ff"/><path d="M16.500 12L25 9V20.500L17 25.500z" fill="#1448c8"/><circle cx="10" cy="17.500" r="4.200" fill="url(#dg2)"/><polygon points="8.0,2.5 8.7,5.7 11.5,4.0 9.8,6.8 13.0,7.5 9.8,8.2 11.5,11.0 8.7,9.3 8.0,12.5 7.3,9.3 4.5,11.0 6.2,8.2 3.0,7.5 6.2,6.8 4.5,4.0 7.3,5.7" fill="#e8e84a"/><polygon points="8.0,5.0 8.4,6.6 9.8,5.7 8.9,7.1 10.5,7.5 8.9,7.9 9.8,9.3 8.4,8.4 8.0,10.0 7.6,8.4 6.2,9.3 7.1,7.9 5.5,7.5 7.1,7.1 6.2,5.7 7.6,6.6" fill="#ffffd0"/></svg>
<svg style="left:813px;top:97px" width="30" height="30" viewBox="0 0 30 30" ><path d="M18.200 4.500Q21.500 3 24.500 4.800L20.800 8L21.500 10.800L24.200 11.500L27.200 8.200Q28 11.800 25.200 14.200Q22.500 16.200 19.500 15L12.500 21.800Q13.500 24 11.800 25.800L9.200 27.200L10.200 24.500L8.500 22.800L5.500 23.500L4.500 26.200Q2.800 23.500 4.200 21.200Q6 19 8.800 19.500L15.500 12.200Q14.200 9.500 15.500 7Q16.500 5.300 18.200 4.500z" fill="#f8e040" stroke="#b8920c" stroke-width="1"/><path d="M17.500 6.500Q16 8.500 17 11.500L9.500 19.800" fill="none" stroke="#fff" stroke-opacity=".55" stroke-width="1.200"/></svg>
<div style="left:779px;top:131px;width:30px;height:30px;background:linear-gradient(#fbfbfb,#e9e9e9 50%,#dcdcdc 52%,#e6e6e6);border:2px solid #747474;border-radius:4px;box-shadow:0 0 0 1px rgba(255,255,255,.55)"></div>
<div style="left:813px;top:131px;width:30px;height:30px;background:linear-gradient(#fbfbfb,#e9e9e9 50%,#dcdcdc 52%,#e6e6e6);border:2px solid #747474;border-radius:4px;box-shadow:0 0 0 1px rgba(255,255,255,.55)"></div>
<svg style="left:779px;top:131px" width="30" height="30" viewBox="0 0 30 30" ><path d="M4.500 12L12.500 8L17 10L13.500 12V17.500L21 14L25.500 16.500V22L15.500 27L4.500 20.500z" fill="#c8dcff" stroke="#3c5cd0" stroke-width="1.100"/><path d="M4.500 12L12.500 8L17 10L9 14.500zM13.500 17.500L21 14L25.500 16.500L17.500 20.500z" fill="#f4f8ff" stroke="#3c5cd0" stroke-width=".9"/><path d="M9 14.500v5L13.500 22V17.500" fill="#7c98e8" stroke="#3c5cd0" stroke-width=".8"/><path d="M15.500 27V21.500L25.500 16.500" fill="none" stroke="#3c5cd0" stroke-width=".9"/></svg>
<svg style="left:813px;top:131px" width="30" height="30" viewBox="0 0 30 30" ><defs><linearGradient id="df1" x1="0" y1="1" x2="1" y2="0"><stop offset="0" stop-color="#0c2c9c"/><stop offset=".55" stop-color="#3c7cf0"/><stop offset="1" stop-color="#1038a8"/></linearGradient></defs><path d="M6.500 6.500L11 4L21.500 14L26 15.500Q27.500 20 23.500 24Q21 26 19 25L17 20.500z" fill="url(#df1)" stroke="#081c70" stroke-width=".7"/><ellipse cx="8.700" cy="5.200" rx="2.600" ry="1.300" transform="rotate(-28 8.700 5.200)" fill="#5c98ff"/><ellipse cx="22.700" cy="20.300" rx="2.900" ry="4.700" transform="rotate(38 22.700 20.300)" fill="#f4f09c" stroke="#081c70" stroke-width=".9"/></svg>
<div style="left:779px;top:165px;width:30px;height:30px;background:linear-gradient(#fbfbfb,#e9e9e9 50%,#dcdcdc 52%,#e6e6e6);border:2px solid #747474;border-radius:4px;box-shadow:0 0 0 1px rgba(255,255,255,.55)"></div>
<div style="left:813px;top:165px;width:30px;height:30px;background:linear-gradient(#fbfbfb,#e9e9e9 50%,#dcdcdc 52%,#e6e6e6);border:2px solid #bcbcbc;border-radius:4px;box-shadow:0 0 0 1px rgba(255,255,255,.55)"></div>
<svg style="left:779px;top:165px" width="30" height="30" viewBox="0 0 30 30" ><path d="M3 17L12 11.500L22.500 14.500L26 19.500L25.500 23L20 25.800L11 23.200L3.200 20.300z" fill="#c81414"/><path d="M3 17L12 11.500L22.500 14.500L26 19.500L19.500 22L11 19.600z" fill="#ec2828"/><path d="M11.500 16Q14 13.800 18.500 15.600Q20 17.500 17.500 18.500Q13.500 18.800 11.500 16z" fill="none" stroke="#a00c0c" stroke-width="1.300"/><path d="M11 19.600V23.200M19.500 22V25.600" stroke="#a00c0c" stroke-width=".8"/></svg>
<svg style="left:813px;top:165px" width="30" height="30" viewBox="0 0 30 30" ><path d="M6.500 6.500L11 4L21.500 14L26 15.500Q27.500 20 23.500 24Q21 26 19 25L17 20.500z" fill="#a8aab0"/><ellipse cx="22.500" cy="20.500" rx="2.800" ry="4.600" transform="rotate(38 22.500 20.500)" fill="#b8babf"/></svg>
<div style="left:779px;top:199px;width:30px;height:30px;background:linear-gradient(#fbfbfb,#e9e9e9 50%,#dcdcdc 52%,#e6e6e6);border:2px solid #747474;border-radius:4px;box-shadow:0 0 0 1px rgba(255,255,255,.55)"></div>
<div style="left:813px;top:199px;width:30px;height:30px;background:linear-gradient(#fbfbfb,#e9e9e9 50%,#dcdcdc 52%,#e6e6e6);border:2px solid #747474;border-radius:4px;box-shadow:0 0 0 1px rgba(255,255,255,.55)"></div>
<svg style="left:779px;top:199px" width="30" height="30" viewBox="0 0 30 30" ><path d="M4.500 11V20L16.500 26.500L26 22V17.500Q21 14.500 16.500 20.500z" fill="#dfeeff" stroke="#3c50c0" stroke-width="1"/><path d="M4.500 11L13.500 5.500Q17 5 19 10Q21 15.500 24 16.500Q26.500 17.200 26 18.500Q20.500 15.500 16.500 21.500Q13.500 13 4.500 11z" fill="#1c8a84" stroke="#0c5c5c" stroke-width=".8"/><path d="M16.500 21.500Q20.500 15.500 26 18.500V22L16.500 26.500z" fill="#a8b4f0" stroke="#3c50c0" stroke-width=".9"/></svg>
<svg style="left:813px;top:199px" width="30" height="30" viewBox="0 0 30 30" ><defs><linearGradient id="df1" x1="0" y1="1" x2="1" y2="0"><stop offset="0" stop-color="#0c2c9c"/><stop offset=".55" stop-color="#3c7cf0"/><stop offset="1" stop-color="#1038a8"/></linearGradient></defs><path d="M6.500 6.500L11 4L21.500 14L26 15.500Q27.500 20 23.500 24Q21 26 19 25L17 20.500z" fill="url(#df1)" stroke="#081c70" stroke-width=".7"/><ellipse cx="8.700" cy="5.200" rx="2.600" ry="1.300" transform="rotate(-28 8.700 5.200)" fill="#5c98ff"/><ellipse cx="22.700" cy="20.300" rx="2.900" ry="4.700" transform="rotate(38 22.700 20.300)" fill="#f4f09c" stroke="#081c70" stroke-width=".9"/></svg>
<div style="left:779px;top:233px;width:30px;height:30px;background:linear-gradient(#fbfbfb,#e9e9e9 50%,#dcdcdc 52%,#e6e6e6);border:2px solid #747474;border-radius:4px;box-shadow:0 0 0 1px rgba(255,255,255,.55)"></div>
<div style="left:813px;top:233px;width:30px;height:30px;background:linear-gradient(#fbfbfb,#e9e9e9 50%,#dcdcdc 52%,#e6e6e6);border:2px solid #bcbcbc;border-radius:4px;box-shadow:0 0 0 1px rgba(255,255,255,.55)"></div>
<svg style="left:779px;top:233px" width="30" height="30" viewBox="0 0 30 30" ><path d="M6 7.500H23.500V11.500H20M6 7.500V10.500M5 13.500V19H10M5 13.500H9M22.500 14V18.500M22.500 21.500V25.500H6" fill="none" stroke="#1c0c84" stroke-width="1.500"/><path d="M5.500 10.500L9.500 8L13 13L8 18.500L14 20L17.500 25L22.500 22L19 17L24 13L18.500 11.500L14.500 8.500L11 12" fill="#f8c8f8" stroke="#e040e0" stroke-width="1" stroke-dasharray="3 1.200" opacity=".9"/><path d="M11.500 12.500L19.500 21.500M19 12.500L11 21.500" stroke="#111" stroke-width="1.800"/></svg>
<svg style="left:813px;top:233px" width="30" height="30" viewBox="0 0 30 30" ><path d="M6.500 6.500L11 4L21.500 14L26 15.500Q27.500 20 23.500 24Q21 26 19 25L17 20.500z" fill="#a8aab0"/><ellipse cx="22.500" cy="20.500" rx="2.800" ry="4.600" transform="rotate(38 22.500 20.500)" fill="#b8babf"/></svg>
<div class="t" style="left:604px;top:352px;color:#000"><svg width="25" height="14" aria-hidden="true"><use href="#g12_65b9" x="0"/><use href="#g12_6cd5" x="12"/></svg><span class="sr">方法</span></div>
<div style="left:690px;top:349.5px;width:85px;height:17.5px;background:#fff;border:1px solid #7d7d7d;border-radius:3px;box-shadow:inset 0 1px 1px #b0b0b0"></div>
<div style="left:757.5px;top:349.5px;width:17.5px;height:17.5px;background:linear-gradient(#cfe3f7 0,#9cc6ee 45%,#5fa0dc 55%,#8fc3ee 100%);border:1px solid #5d7da3;border-radius:0 3px 3px 0"></div>
<svg style="left:757.5px;top:349.5px" width="17.5" height="17.5" viewBox="0 0 17.5 17.5" ><path d="M3.6 5.55 h10.6 l-5.3 6.6z" fill="#10192c"/></svg>
<div class="t" style="left:694px;top:352.5px;color:#000"><span class="m" style="left:0px;top:0px">METHOD</span></div>
<div style="left:779px;top:349px;width:30px;height:30px;background:linear-gradient(#fbfbfb,#e9e9e9 50%,#dcdcdc 52%,#e6e6e6);border:2px solid #747474;border-radius:4px;box-shadow:0 0 0 1px rgba(255,255,255,.55)"></div>
<div style="left:813px;top:349px;width:30px;height:30px;background:linear-gradient(#fbfbfb,#e9e9e9 50%,#dcdcdc 52%,#e6e6e6);border:2px solid #bcbcbc;border-radius:4px;box-shadow:0 0 0 1px rgba(255,255,255,.55)"></div>
<svg style="left:779px;top:349px" width="30" height="30" viewBox="0 0 30 30" ><polygon points="8.5,3.0 9.2,6.2 12.0,4.5 10.3,7.3 13.5,8.0 10.3,8.7 12.0,11.5 9.2,9.8 8.5,13.0 7.8,9.8 5.0,11.5 6.7,8.7 3.5,8.0 6.7,7.3 5.0,4.5 7.8,6.2" fill="#e4e850"/><polygon points="8.5,5.7 8.8,7.2 10.1,6.4 9.3,7.7 10.8,8.0 9.3,8.3 10.1,9.6 8.8,8.8 8.5,10.3 8.2,8.8 6.9,9.6 7.7,8.3 6.2,8.0 7.7,7.7 6.9,6.4 8.2,7.2" fill="#ffffc8"/><path d="M5 12.500V24.500H24V11" fill="none" stroke="#5c8cd0" stroke-width="1.200"/><path d="M5 14.500h19M5 18.500h19" stroke="#9cc0f0" stroke-width="2.200"/><path d="M11 12q2-2.500 4 0t4 0t4-1M6 21.500l2-2.500l2 2.500l2-2.500l2 2.500l2-2.500l2 2.500l2-2.500l2 2.500" fill="none" stroke="#3c6cc0" stroke-width="1"/><path d="M5 23.500h19" stroke="#bcd8f8" stroke-width="2"/></svg>
<svg style="left:813px;top:349px" width="30" height="30" viewBox="0 0 30 30" ><path d="M18.200 4.500Q21.500 3 24.500 4.800L20.800 8L21.500 10.800L24.200 11.500L27.200 8.200Q28 11.800 25.200 14.200Q22.500 16.200 19.500 15L12.500 21.800Q13.500 24 11.800 25.800L9.200 27.200L10.200 24.500L8.500 22.800L5.500 23.500L4.500 26.200Q2.800 23.500 4.200 21.200Q6 19 8.800 19.500L15.500 12.200Q14.200 9.500 15.500 7Q16.500 5.300 18.200 4.500z" fill="#b4b0a0" stroke="#a09c8c" stroke-width="1"/><path d="M17.500 6.500Q16 8.500 17 11.500L9.500 19.800" fill="none" stroke="#fff" stroke-opacity=".55" stroke-width="1.200"/></svg>
<div class="t" style="left:604px;top:386px;color:#000"><svg width="73" height="14" aria-hidden="true"><use href="#g12_9661" x="0"/><use href="#g12_5ced" x="12"/><use href="#g12_7a7a" x="24"/><use href="#g12_95f4" x="36"/><use href="#g12_8303" x="48"/><use href="#g12_56f4" x="60"/></svg><span class="sr">陡峭空间范围</span></div>
<div style="left:737px;top:383.5px;width:106px;height:17px;background:#fff;border:1px solid #7d7d7d;border-radius:3px;box-shadow:inset 0 1px 1px #b0b0b0"></div>
<div style="left:825.5px;top:383.5px;width:17.5px;height:17px;background:linear-gradient(#cfe3f7 0,#9cc6ee 45%,#5fa0dc 55%,#8fc3ee 100%);border:1px solid #5d7da3;border-radius:0 3px 3px 0"></div>
<svg style="left:825.5px;top:383.5px" width="17.5" height="17" viewBox="0 0 17.5 17" ><path d="M3.6 5.3 h10.6 l-5.3 6.6z" fill="#10192c"/></svg>
<div class="t" style="left:741px;top:385.5px;color:#000"><svg width="13" height="14" aria-hidden="true"><use href="#g12_65e0" x="0"/></svg><span class="sr">无</span></div>
<div class="t" style="left:604px;top:407px;color:#000"><svg width="49" height="14" aria-hidden="true"><use href="#g12_5408" x="0"/><use href="#g12_5e76" x="12"/><use href="#g12_8ddd" x="24"/><use href="#g12_79bb" x="36"/></svg><span class="sr">合并距离</span></div>
<div style="left:734px;top:405.5px;width:56px;height:15.5px;background:#fff;border:1.5px solid #707070;border-radius:3px"></div>
<div style="left:737px;top:407.5px;width:50px;height:11.5px;background:#2f6fc6"></div>
<div class="n" style="left:747px;top:407px;color:#fff;width:39px;overflow:hidden"><span class="d">3</span><span class="d">.</span><span class="d">0</span><span class="d">0</span><span class="d">0</span><span class="d">0</span><span class="d">0</span></div>
<div style="left:794.5px;top:405.5px;width:48.5px;height:17px;background:#fff;border:1px solid #7d7d7d;border-radius:3px;box-shadow:inset 0 1px 1px #b0b0b0"></div>
<div style="left:825.5px;top:405.5px;width:17.5px;height:17px;background:linear-gradient(#cfe3f7 0,#9cc6ee 45%,#5fa0dc 55%,#8fc3ee 100%);border:1px solid #5d7da3;border-radius:0 3px 3px 0"></div>
<svg style="left:825.5px;top:405.5px" width="17.5" height="17" viewBox="0 0 17.5 17" ><path d="M3.6 5.3 h10.6 l-5.3 6.6z" fill="#10192c"/></svg>
<div class="t" style="left:798.5px;top:409.5px;color:#000"><span class="m s" style="left:0;top:0">mm</span></div>
<div class="t" style="left:604px;top:429px;color:#000"><svg width="73" height="14" aria-hidden="true"><use href="#g12_6700" x="0"/><use href="#g12_5c0f" x="12"/><use href="#g12_5207" x="24"/><use href="#g12_524a" x="36"/><use href="#g12_957f" x="48"/><use href="#g12_5ea6" x="60"/></svg><span class="sr">最小切削长度</span></div>
<div style="left:734px;top:427.5px;width:56px;height:15.5px;background:#fff;border:1.5px solid #707070;border-radius:3px"></div>
<div class="n" style="left:747px;top:429px;color:#000;width:39px;overflow:hidden"><span class="d">1</span><span class="d">.</span><span class="d">0</span><span class="d">0</span><span class="d">0</span><span class="d">0</span><span class="d">0</span></div>
<div style="left:794.5px;top:427.5px;width:48.5px;height:17px;background:#fff;border:1px solid #7d7d7d;border-radius:3px;box-shadow:inset 0 1px 1px #b0b0b0"></div>
<div style="left:825.5px;top:427.5px;width:17.5px;height:17px;background:linear-gradient(#cfe3f7 0,#9cc6ee 45%,#5fa0dc 55%,#8fc3ee 100%);border:1px solid #5d7da3;border-radius:0 3px 3px 0"></div>
<svg style="left:825.5px;top:427.5px" width="17.5" height="17" viewBox="0 0 17.5 17" ><path d="M3.6 5.3 h10.6 l-5.3 6.6z" fill="#10192c"/></svg>
<div class="t" style="left:798.5px;top:431.5px;color:#000"><span class="m s" style="left:0;top:0">mm</span></div>
<div class="t" style="left:604px;top:452px;color:#000"><svg width="85" height="14" aria-hidden="true"><use href="#g12_6bcf" x="0"/><use href="#g12_5200" x="12"/><use href="#g12_7684" x="24"/><use href="#g12_516c" x="36"/><use href="#g12_5171" x="48"/><use href="#g12_6df1" x="60"/><use href="#g12_5ea6" x="72"/></svg><span class="sr">每刀的公共深度</span></div>
<div style="left:737px;top:449.5px;width:106px;height:17px;background:#fff;border:1px solid #7d7d7d;border-radius:3px;box-shadow:inset 0 1px 1px #b0b0b0"></div>
<div style="left:825.5px;top:449.5px;width:17.5px;height:17px;background:linear-gradient(#cfe3f7 0,#9cc6ee 45%,#5fa0dc 55%,#8fc3ee 100%);border:1px solid #5d7da3;border-radius:0 3px 3px 0"></div>
<svg style="left:825.5px;top:449.5px" width="17.5" height="17" viewBox="0 0 17.5 17" ><path d="M3.6 5.3 h10.6 l-5.3 6.6z" fill="#10192c"/></svg>
<div class="t" style="left:741px;top:451.5px;color:#000"><svg width="25" height="14" aria-hidden="true"><use href="#g12_6052" x="0"/><use href="#g12_5b9a" x="12"/></svg><span class="sr">恒定</span></div>
<div class="t" style="left:604px;top:474px;color:#000"><svg width="25" height="14" aria-hidden="true"><use href="#g12_8ddd" x="0"/><use href="#g12_79bb" x="12"/></svg><span class="sr">距离</span></div>
<div style="left:734px;top:471.5px;width:56px;height:15.5px;background:#fff;border:1.5px solid #707070;border-radius:3px"></div>
<div class="n" style="left:747px;top:473px;color:#000;width:39px;overflow:hidden"><span class="d">0</span><span class="d">.</span><span class="d">2</span><span class="d">0</span><span class="d">0</span><span class="d">0</span><span class="d">0</span></div>
<div style="left:794.5px;top:471.5px;width:48.5px;height:17px;background:#fff;border:1px solid #7d7d7d;border-radius:3px;box-shadow:inset 0 1px 1px #b0b0b0"></div>
<div style="left:825.5px;top:471.5px;width:17.5px;height:17px;background:linear-gradient(#cfe3f7 0,#9cc6ee 45%,#5fa0dc 55%,#8fc3ee 100%);border:1px solid #5d7da3;border-radius:0 3px 3px 0"></div>
<svg style="left:825.5px;top:471.5px" width="17.5" height="17" viewBox="0 0 17.5 17" ><path d="M3.6 5.3 h10.6 l-5.3 6.6z" fill="#10192c"/></svg>
<div class="t" style="left:798.5px;top:475.5px;color:#000"><span class="m s" style="left:0;top:0">mm</span></div>
<div class="t" style="left:604px;top:502px;color:#000"><svg width="37" height="14" aria-hidden="true"><use href="#g12_5207" x="0"/><use href="#g12_524a" x="12"/><use href="#g12_5c42" x="24"/></svg><span class="sr">切削层</span></div>
<div style="left:813px;top:493px;width:30px;height:30px;background:linear-gradient(#fbfbfb,#e9e9e9 50%,#dcdcdc 52%,#e6e6e6);border:2px solid #747474;border-radius:4px;box-shadow:0 0 0 1px rgba(255,255,255,.55)"></div>
<svg style="left:813px;top:493px" width="30" height="30" viewBox="0 0 30 30" ><rect x="4" y="5" width="13.5" height="2" fill="#0a0a0a"/><rect x="4" y="8.5" width="13.5" height="2" fill="#0a0a0a"/><rect x="4" y="12" width="10" height="2" fill="#0a0a0a"/><rect x="4" y="15.5" width="10" height="2" fill="#0a0a0a"/><rect x="4" y="19" width="8.5" height="2" fill="#0a0a0a"/><rect x="4" y="23" width="13.5" height="2" fill="#0a0a0a"/><path d="M20.500 3.500L25 3.800L21.500 9.500L24 9.800L13.500 19L17.500 11.500L15 11.200z" fill="#f8e43c" stroke="#a89418" stroke-width=".6"/></svg>
<div class="t" style="left:604px;top:536px;color:#000"><svg width="49" height="14" aria-hidden="true"><use href="#g12_5207" x="0"/><use href="#g12_524a" x="12"/><use href="#g12_53c2" x="24"/><use href="#g12_6570" x="36"/></svg><span class="sr">切削参数</span></div>
<div style="left:813px;top:527px;width:30px;height:30px;background:linear-gradient(#fbfbfb,#e9e9e9 50%,#dcdcdc 52%,#e6e6e6);border:2px solid #747474;border-radius:4px;box-shadow:0 0 0 1px rgba(255,255,255,.55)"></div>
<svg style="left:813px;top:527px" width="30" height="30" viewBox="0 0 30 30" ><path d="M7 13.500H22" stroke="#2838b0" stroke-width="1.400"/><path d="M25 13.500l-4.500-2.600v5.200z" fill="#2838b0"/><clipPath id="hb180"><rect x="4.5" y="18" width="21.5" height="6.5"/></clipPath><rect x="4.5" y="18" width="21.5" height="6.5" fill="#fff" stroke="#3c3c6c" stroke-width="1.200"/><path d="M-2 24.5l6.5 -6.5M2.4 24.5l6.5 -6.5M6.8 24.5l6.5 -6.5M11.2 24.5l6.5 -6.5M15.6 24.5l6.5 -6.5M20 24.5l6.5 -6.5M24.4 24.5l6.5 -6.5" stroke="#3c3c6c" stroke-width="1.250" clip-path="url(#hb180)"/></svg>
<div class="t" style="left:604px;top:570px;color:#000"><svg width="61" height="14" aria-hidden="true"><use href="#g12_975e" x="0"/><use href="#g12_5207" x="12"/><use href="#g12_524a" x="24"/><use href="#g12_79fb" x="36"/><use href="#g12_52a8" x="48"/></svg><span class="sr">非切削移动</span></div>
<div style="left:813px;top:561px;width:30px;height:30px;background:linear-gradient(#fbfbfb,#e9e9e9 50%,#dcdcdc 52%,#e6e6e6);border:2px solid #747474;border-radius:4px;box-shadow:0 0 0 1px rgba(255,255,255,.55)"></div>
<svg style="left:813px;top:561px" width="30" height="30" viewBox="0 0 30 30" ><path d="M5.500 7V12.500M9 5.500H21M24.500 14V8.500" stroke="#c81c1c" stroke-width="1.300" fill="none"/><path d="M5.500 15.500l-2.200-4h4.400zM7.500 5.500l4-2.200v4.400zM24.500 6.500l-2.200 4h4.400z" fill="#c81c1c"/><clipPath id="hb165"><rect x="5" y="16.5" width="20" height="8.5"/></clipPath><rect x="5" y="16.5" width="20" height="8.5" fill="#fff" stroke="#111" stroke-width="1.200"/><path d="M-3.5 25l8.5 -8.5M0.9 25l8.5 -8.5M5.3 25l8.5 -8.5M9.7 25l8.5 -8.5M14.1 25l8.5 -8.5M18.5 25l8.5 -8.5M22.9 25l8.5 -8.5" stroke="#111" stroke-width="1.250" clip-path="url(#hb165)"/></svg>
<div class="t" style="left:604px;top:604px;color:#000"><svg width="73" height="14" aria-hidden="true"><use href="#g12_8fdb" x="0"/><use href="#g12_7ed9" x="12"/><use href="#g12_7387" x="24"/><use href="#g12_548c" x="36"/><use href="#g12_901f" x="48"/><use href="#g12_5ea6" x="60"/></svg><span class="sr">进给率和速度</span></div>
<div style="left:813px;top:595px;width:30px;height:30px;background:linear-gradient(#fbfbfb,#e9e9e9 50%,#dcdcdc 52%,#e6e6e6);border:2px solid #747474;border-radius:4px;box-shadow:0 0 0 1px rgba(255,255,255,.55)"></div>
<svg style="left:813px;top:595px" width="30" height="30" viewBox="0 0 30 30" ><defs><linearGradient id="dfe" x1="0" y1="0" x2="1" y2="0"><stop offset="0" stop-color="#2038a8"/><stop offset=".5" stop-color="#8898f0"/><stop offset="1" stop-color="#1c2c90"/></linearGradient></defs><ellipse cx="12" cy="10" rx="7.500" ry="3" fill="none" stroke="#d02020" stroke-width="1.700"/><rect x="9.500" y="3" width="4.500" height="18.500" fill="url(#dfe)"/><path d="M9.500 6l4.500 2M9.500 10l4.500 2M9.500 14l4.500 2M9.500 18l4.500 2" stroke="#c8d0ff" stroke-width=".8"/><path d="M5 11.500Q12 15 19.500 10.500" fill="none" stroke="#d02020" stroke-width="1.800"/><path d="M19.500 7.500l2.500 3.500l-4 .8z" fill="#d02020"/><path d="M14.500 20.500h6.500v-2.200l5 3.700l-5 3.700v-2.200h-6.500z" fill="#4868e0" stroke="#1c2c90" stroke-width=".7"/></svg>
<div style="left:1112px;top:122px;width:291.5px;height:606.5px;background:#ebebeb;border-top:1px solid #8c8c8c;border-left:3px solid #fafcfe"></div>
<div style="left:1112px;top:123px;width:291.5px;height:1px;background:#fff"></div>
<div class="t" style="left:1129px;top:136px;color:#000"><svg width="139" height="14" aria-hidden="true"><use href="#g12_64cd" x="0"/><use href="#g12_64cd" x="1"/><use href="#g12_4f5c" x="13"/><use href="#g12_4f5c" x="14"/><use href="#g12_5bfc" x="26"/><use href="#g12_5bfc" x="27"/><use href="#g12_822a" x="39"/><use href="#g12_822a" x="40"/><use href="#g12_5668" x="52"/><use href="#g12_5668" x="53"/><use href="#g12_7a0b" x="86"/><use href="#g12_7a0b" x="87"/><use href="#g12_5e8f" x="99"/><use href="#g12_5e8f" x="100"/><use href="#g12_987a" x="112"/><use href="#g12_987a" x="113"/><use href="#g12_5e8f" x="125"/><use href="#g12_5e8f" x="126"/></svg><span class="sr">操作导航器</span><span class="m b" style="left:65px;top:0px"> - </span><span class="sr">程序顺序</span></div>
<div style="left:1124px;top:157px;width:270px;height:509px;background:#fff;border:1px solid #8a8a8a;border-bottom-color:#555"></div>
<div style="left:1125px;top:158px;width:268px;height:17px;background:linear-gradient(#f3f3f3 0,#ececec 50%,#dcdcdc 55%,#d8d8d8 100%);border-bottom:1.5px solid #a6a6a6"></div>
<div style="left:1306px;top:159px;width:1px;height:15px;background:#bdbdbd"></div>
<div style="left:1307px;top:159px;width:1px;height:15px;background:#fff"></div>
<div style="left:1344px;top:159px;width:1px;height:15px;background:#bdbdbd"></div>
<div style="left:1345px;top:159px;width:1px;height:15px;background:#fff"></div>
<div class="t" style="left:1133px;top:160px;color:#000"><svg width="25" height="14" aria-hidden="true"><use href="#g12_540d" x="0"/><use href="#g12_79f0" x="12"/></svg><span class="sr">名称</span></div>
<div class="t" style="left:1313px;top:160px;color:#000"><svg width="25" height="14" aria-hidden="true"><use href="#g12_5200" x="0"/><use href="#g12_8f68" x="12"/></svg><span class="sr">刀轨</span></div>
<div class="t" style="left:1351px;top:160px;color:#000"><svg width="25" height="14" aria-hidden="true"><use href="#g12_5200" x="0"/><use href="#g12_5177" x="12"/></svg><span class="sr">刀具</span></div>
<div style="left:1125px;top:175px;width:268px;height:20px;background:#fff;border-bottom:1px solid #e3e3e3"></div>
<div style="left:1125px;top:195px;width:268px;height:20px;background:#f5f5f5;border-bottom:1px solid #e3e3e3"></div>
<div style="left:1125px;top:215px;width:268px;height:20px;background:#fff;border-bottom:1px solid #e3e3e3"></div>
<div style="left:1125px;top:235px;width:268px;height:20px;background:#f5f5f5;border-bottom:1px solid #e3e3e3"></div>
<div style="left:1125px;top:255px;width:268px;height:20px;background:#fff;border-bottom:1px solid #e3e3e3"></div>
<div style="left:1125px;top:275px;width:268px;height:20px;background:#f5f5f5;border-bottom:1px solid #e3e3e3"></div>
<div style="left:1125px;top:295px;width:268px;height:20px;background:#fff;border-bottom:1px solid #e3e3e3"></div>
<div style="left:1125px;top:315px;width:268px;height:20px;background:#f5f5f5;border-bottom:1px solid #e3e3e3"></div>
<div style="left:1125px;top:335px;width:268px;height:20px;background:#fff;border-bottom:1px solid #e3e3e3"></div>
<div style="left:1125px;top:355px;width:268px;height:20px;background:#f5f5f5;border-bottom:1px solid #e3e3e3"></div>
<div style="left:1125px;top:375px;width:268px;height:20px;background:#fff;border-bottom:1px solid #e3e3e3"></div>
<div style="left:1125px;top:395px;width:268px;height:20px;background:#f5f5f5;border-bottom:1px solid #e3e3e3"></div>
<div style="left:1125px;top:415px;width:268px;height:20px;background:#fff;border-bottom:1px solid #e3e3e3"></div>
<div style="left:1125px;top:435px;width:268px;height:20px;background:#f5f5f5;border-bottom:1px solid #e3e3e3"></div>
<div style="left:1125px;top:455px;width:268px;height:20px;background:#fff;border-bottom:1px solid #e3e3e3"></div>
<div style="left:1125px;top:475px;width:268px;height:20px;background:#f5f5f5;border-bottom:1px solid #e3e3e3"></div>
<div style="left:1125px;top:495px;width:268px;height:20px;background:#fff;border-bottom:1px solid #e3e3e3"></div>
<div style="left:1125px;top:515px;width:268px;height:20px;background:#f5f5f5;border-bottom:1px solid #e3e3e3"></div>
<div style="left:1125px;top:535px;width:268px;height:20px;background:#fff;border-bottom:1px solid #e3e3e3"></div>
<div style="left:1125px;top:555px;width:268px;height:20px;background:#f5f5f5;border-bottom:1px solid #e3e3e3"></div>
<div style="left:1125px;top:575px;width:268px;height:20px;background:#fff;border-bottom:1px solid #e3e3e3"></div>
<div style="left:1125px;top:595px;width:268px;height:20px;background:#f5f5f5;border-bottom:1px solid #e3e3e3"></div>
<div style="left:1125px;top:615px;width:268px;height:20px;background:#fff;border-bottom:1px solid #e3e3e3"></div>
<div style="left:1125px;top:635px;width:268px;height:13px;background:#f5f5f5;border-bottom:1px solid #e3e3e3"></div>
<div style="left:1344.5px;top:175px;width:1px;height:472px;background:#e0e0e0"></div>
<div style="left:1306px;top:175px;width:1.3px;height:472px;background:#000"></div>
<div style="left:1215px;top:415px;width:178px;height:19px;background:#2f62b6;outline:1px dotted #9db8e8;outline-offset:-1px"></div>
<div class="t" style="left:1129px;top:180px;color:#111"><span class="m" style="left:0px;top:0px">NC_PROGRAM</span></div>
<div class="t" style="left:1164px;top:199px;color:#000"><svg width="37" height="14" aria-hidden="true"><use href="#g12_672a" x="0"/><use href="#g12_7528" x="12"/><use href="#g12_9879" x="24"/></svg><span class="sr">未用项</span></div>
<div class="t" style="left:1180px;top:220px;color:#111"><span class="m" style="left:0px;top:0px">R</span></div>
<div class="t" style="left:1199px;top:240px;color:#111"><span class="m" style="left:0px;top:0px">T1</span></div>
<div class="t" style="left:1217px;top:260px;color:#17364f"><span class="m" style="left:0px;top:0px">CAVITY_MILL</span></div>
<div class="t" style="left:1348px;top:260px;color:#17364f"><span class="m" style="left:0px;top:0px">D8</span></div>
<div class="t" style="left:1217px;top:280px;color:#111"><span class="m" style="left:0px;top:0px">PLANAR_MILL</span></div>
<div class="t" style="left:1348px;top:280px;color:#17364f"><span class="m" style="left:0px;top:0px">D8</span></div>
<div class="t" style="left:1217px;top:300px;color:#17365f"><span class="m" style="left:0px;top:0px">FIXED_CONTOUR</span></div>
<div class="t" style="left:1348px;top:300px;color:#17364f"><span class="m" style="left:0px;top:0px">D4R2</span></div>
<div class="t" style="left:1217px;top:320px;color:#17364f"><span class="m" style="left:0px;top:0px">FACE_MILLING</span></div>
<div class="t" style="left:1348px;top:320px;color:#17364f"><span class="m" style="left:0px;top:0px">D8</span></div>
<div class="t" style="left:1217px;top:340px;color:#111"><span class="m" style="left:0px;top:0px">PLANAR_MILL_1</span></div>
<div class="t" style="left:1348px;top:340px;color:#17364f"><span class="m" style="left:0px;top:0px">D8</span></div>
<div class="t" style="left:1217px;top:360px;color:#17364f"><span class="m" style="left:0px;top:0px">FACE_MILLIN...</span></div>
<div class="t" style="left:1348px;top:360px;color:#17364f"><span class="m" style="left:0px;top:0px">D2</span></div>
<div class="t" style="left:1217px;top:380px;color:#17364f"><span class="m" style="left:0px;top:0px">ZLEVEL_PROFILE</span></div>
<div class="t" style="left:1348px;top:380px;color:#17364f"><span class="m" style="left:0px;top:0px">D2-0.03</span></div>
<div class="t" style="left:1217px;top:400px;color:#17364f"><span class="m" style="left:0px;top:0px">PLANAR_TEXT</span></div>
<div class="t" style="left:1348px;top:400px;color:#17364f"><span class="m" style="left:0px;top:0px">D0.1</span></div>
<div class="t" style="left:1217px;top:420px;color:#fff"><span class="m" style="left:0px;top:0px">ZLEVEL_PROF...</span></div>
<div class="t" style="left:1348px;top:420px;color:#fff"><span class="m" style="left:0px;top:0px">D1.5</span></div>
<div class="t" style="left:1199px;top:440px;color:#111"><span class="m" style="left:0px;top:0px">T2</span></div>
<div class="t" style="left:1199px;top:460px;color:#111"><span class="m" style="left:0px;top:0px">T3</span></div>
<div class="t" style="left:1199px;top:480px;color:#111"><span class="m" style="left:0px;top:0px">T4</span></div>
<div class="t" style="left:1199px;top:500px;color:#111"><span class="m" style="left:0px;top:0px">T5</span></div>
<div class="t" style="left:1199px;top:520px;color:#111"><span class="m" style="left:0px;top:0px">T6</span></div>
<div class="t" style="left:1180px;top:540px;color:#111"><span class="m" style="left:0px;top:0px">F</span></div>
<div style="left:1135px;top:195px;width:1px;height:350px;background-image:linear-gradient(to bottom,#9a9a9a 50%,transparent 50%);background-size:1px 2px"></div>
<div style="left:1136px;top:205px;width:9px;height:1px;background-image:linear-gradient(to right,#9a9a9a 50%,transparent 50%);background-size:2px 1px"></div>
<div style="left:1139px;top:225px;width:6px;height:1px;background-image:linear-gradient(to right,#9a9a9a 50%,transparent 50%);background-size:2px 1px"></div>
<div style="left:1136px;top:545px;width:14px;height:1px;background-image:linear-gradient(to right,#9a9a9a 50%,transparent 50%);background-size:2px 1px"></div>
<div style="left:1154px;top:230px;width:1px;height:295px;background-image:linear-gradient(to bottom,#9a9a9a 50%,transparent 50%);background-size:1px 2px"></div>
<div style="left:1158px;top:245px;width:6px;height:1px;background-image:linear-gradient(to right,#9a9a9a 50%,transparent 50%);background-size:2px 1px"></div>
<div style="left:1155px;top:445px;width:9px;height:1px;background-image:linear-gradient(to right,#9a9a9a 50%,transparent 50%);background-size:2px 1px"></div>
<div style="left:1155px;top:465px;width:9px;height:1px;background-image:linear-gradient(to right,#9a9a9a 50%,transparent 50%);background-size:2px 1px"></div>
<div style="left:1155px;top:485px;width:9px;height:1px;background-image:linear-gradient(to right,#9a9a9a 50%,transparent 50%);background-size:2px 1px"></div>
<div style="left:1155px;top:505px;width:9px;height:1px;background-image:linear-gradient(to right,#9a9a9a 50%,transparent 50%);background-size:2px 1px"></div>
<div style="left:1155px;top:525px;width:9px;height:1px;background-image:linear-gradient(to right,#9a9a9a 50%,transparent 50%);background-size:2px 1px"></div>
<div style="left:1173px;top:250px;width:1px;height:175px;background-image:linear-gradient(to bottom,#9a9a9a 50%,transparent 50%);background-size:1px 2px"></div>
<div style="left:1174px;top:265px;width:8px;height:1px;background-image:linear-gradient(to right,#9a9a9a 50%,transparent 50%);background-size:2px 1px"></div>
<div style="left:1174px;top:285px;width:8px;height:1px;background-image:linear-gradient(to right,#9a9a9a 50%,transparent 50%);background-size:2px 1px"></div>
<div style="left:1174px;top:305px;width:8px;height:1px;background-image:linear-gradient(to right,#9a9a9a 50%,transparent 50%);background-size:2px 1px"></div>
<div style="left:1174px;top:325px;width:8px;height:1px;background-image:linear-gradient(to right,#9a9a9a 50%,transparent 50%);background-size:2px 1px"></div>
<div style="left:1174px;top:345px;width:8px;height:1px;background-image:linear-gradient(to right,#9a9a9a 50%,transparent 50%);background-size:2px 1px"></div>
<div style="left:1174px;top:365px;width:8px;height:1px;background-image:linear-gradient(to right,#9a9a9a 50%,transparent 50%);background-size:2px 1px"></div>
<div style="left:1174px;top:385px;width:8px;height:1px;background-image:linear-gradient(to right,#9a9a9a 50%,transparent 50%);background-size:2px 1px"></div>
<div style="left:1174px;top:405px;width:8px;height:1px;background-image:linear-gradient(to right,#9a9a9a 50%,transparent 50%);background-size:2px 1px"></div>
<div style="left:1174px;top:425px;width:8px;height:1px;background-image:linear-gradient(to right,#9a9a9a 50%,transparent 50%);background-size:2px 1px"></div>
<svg style="left:1146px;top:199px" width="14" height="13" viewBox="0 0 14 13" ><path d="M.5 2.200Q.5 1 1.500 1H5L6.200 2.500H13.500V12.500H.5z" fill="#f4e49c" stroke="#b89c48" stroke-width=".9"/><path d="M1.200 3.500H12.800V6H1.200z" fill="#fbf4cc"/><rect x="6.800" y="5" width="6.200" height="6.800" fill="#f4f0e0" stroke="#8c8878" stroke-width=".4"/><path d="M8 6.200H12V8.300H8.500V10.500H12" fill="none" stroke="#1c1c8c" stroke-width="1.250"/></svg>
<svg style="left:1130px;top:220.5px" width="9" height="9" viewBox="0 0 9 9" ><rect x=".5" y=".5" width="8" height="8" rx="1.500" fill="#fcfcfc" stroke="#9c9c9c"/><path d="M2.300 4.500H6.700" stroke="#222" stroke-width="1.200"/></svg>
<svg style="left:1146px;top:218px" width="14" height="14" viewBox="0 0 14 14" ><circle cx="7" cy="7" r="5.600" fill="#fff" stroke="#b81c24" stroke-width="2.300"/><path d="M3.200 10.800L10.800 3.200" stroke="#b81c24" stroke-width="2.300"/></svg>
<svg style="left:1162px;top:219px" width="14" height="13" viewBox="0 0 14 13" ><path d="M.5 2.200Q.5 1 1.500 1H5L6.200 2.500H13.500V12.500H.5z" fill="#f4e49c" stroke="#b89c48" stroke-width=".9"/><path d="M1.200 3.500H12.800V6H1.200z" fill="#fbf4cc"/><rect x="6.800" y="5" width="6.200" height="6.800" fill="#f4f0e0" stroke="#8c8878" stroke-width=".4"/><path d="M8 6.200H12V8.300H8.500V10.500H12" fill="none" stroke="#1c1c8c" stroke-width="1.250"/></svg>
<svg style="left:1149px;top:240.5px" width="9" height="9" viewBox="0 0 9 9" ><rect x=".5" y=".5" width="8" height="8" rx="1.500" fill="#fcfcfc" stroke="#9c9c9c"/><path d="M2.300 4.500H6.700" stroke="#222" stroke-width="1.200"/></svg>
<svg style="left:1165px;top:238px" width="14" height="14" viewBox="0 0 14 14" ><circle cx="7" cy="7" r="5.600" fill="#fff" stroke="#b81c24" stroke-width="2.300"/><path d="M3.200 10.800L10.800 3.200" stroke="#b81c24" stroke-width="2.300"/></svg>
<svg style="left:1181px;top:239px" width="14" height="13" viewBox="0 0 14 13" ><path d="M.5 2.200Q.5 1 1.500 1H5L6.200 2.500H13.500V12.500H.5z" fill="#f4e49c" stroke="#b89c48" stroke-width=".9"/><path d="M1.200 3.500H12.800V6H1.200z" fill="#fbf4cc"/><rect x="6.800" y="5" width="6.200" height="6.800" fill="#f4f0e0" stroke="#8c8878" stroke-width=".4"/><path d="M8 6.200H12V8.300H8.500V10.500H12" fill="none" stroke="#1c1c8c" stroke-width="1.250"/></svg>
<svg style="left:1187.5px;top:257px" width="8" height="16" viewBox="0 0 8 16" ><path d="M3.700 .6Q6.800 .6 6.600 3.600Q6.200 6.500 4.800 9.500H2.600Q1.200 6.500 .8 3.600Q.6 .6 3.700 .6z" fill="#f6e03c" stroke="#c8a41c" stroke-width=".8"/><path d="M2.500 2.500Q2.300 4.500 3 6.500" stroke="#fff8b0" stroke-width=".9" fill="none"/><circle cx="3.700" cy="12.800" r="1.700" fill="#fdf4a0" stroke="#c8a41c" stroke-width="1"/></svg>
<svg style="left:1313px;top:259.5px" width="13" height="12" viewBox="0 0 13 12" ><path d="M.8 6.200L3.200 4.600L5 8.200Q8 3 12 .6L12.800 1.500Q8.500 6 5.500 11.600L4 11.800z" fill="#30b83c" stroke="#189028" stroke-width=".5"/></svg>
<svg style="left:1200px;top:257.8px" width="15" height="15" viewBox="0 0 15 15" ><rect x="6" y="2" width="8.500" height="10.500" fill="#a8e4f8"/><path d="M.8 2.500H3.500Q3.500 9.500 10.500 12V14.500Q.8 13 .8 2.500z" fill="#1c5c54" stroke="#0c3c38" stroke-width=".6"/><rect x="6.5" y="0.3" width="4" height="8" fill="#4454c4"/><rect x="7.8" y="0.3" width="1.300" height="8" fill="#98a4f0"/><path d="M6.5 8.3h4" stroke="#2c3894" stroke-width="1"/><path d="M10.500 10.500H14.500M11.500 13H14.500" stroke="#1c2c8c" stroke-width="1.100"/></svg>
<svg style="left:1187.5px;top:277px" width="8" height="16" viewBox="0 0 8 16" ><path d="M3.700 .6Q6.800 .6 6.600 3.600Q6.200 6.500 4.800 9.500H2.600Q1.200 6.500 .8 3.600Q.6 .6 3.700 .6z" fill="#f6e03c" stroke="#c8a41c" stroke-width=".8"/><path d="M2.500 2.500Q2.300 4.500 3 6.500" stroke="#fff8b0" stroke-width=".9" fill="none"/><circle cx="3.700" cy="12.800" r="1.700" fill="#fdf4a0" stroke="#c8a41c" stroke-width="1"/></svg>
<svg style="left:1313px;top:279.5px" width="13" height="12" viewBox="0 0 13 12" ><path d="M.8 6.200L3.200 4.600L5 8.200Q8 3 12 .6L12.800 1.500Q8.500 6 5.500 11.600L4 11.800z" fill="#30b83c" stroke="#189028" stroke-width=".5"/></svg>
<svg style="left:1200px;top:277.8px" width="15" height="15" viewBox="0 0 15 15" ><path d="M.6 2.500V14H14" fill="none" stroke="#a8a8a8" stroke-width="1.200"/><path d="M2.800 2.500V11.800H14" fill="none" stroke="#111" stroke-width="1.400"/><rect x="7" y="0.2" width="4" height="8.5" fill="#4454c4"/><rect x="8.3" y="0.2" width="1.300" height="8.5" fill="#98a4f0"/><path d="M7 8.7h4" stroke="#2c3894" stroke-width="1"/><path d="M4 5.500H6.500M4 8.500H6.500M11.500 5.500H14.500M11.500 8.500H14.500" stroke="#2c3cb4" stroke-width="1.100"/></svg>
<svg style="left:1184.3px;top:298px" width="14" height="14" viewBox="0 0 14 14" ><circle cx="7" cy="7" r="5.600" fill="#fff" stroke="#b81c24" stroke-width="2.300"/><path d="M3.200 10.800L10.800 3.200" stroke="#b81c24" stroke-width="2.300"/></svg>
<svg style="left:1312.5px;top:298.5px" width="13" height="13" viewBox="0 0 13 13" ><path d="M1 .8Q6 5 12.500 11.800M12 1Q7 5.500 1.200 12.200" stroke="#111" stroke-width="2.100" fill="none"/></svg>
<svg style="left:1200px;top:297.8px" width="15" height="15" viewBox="0 0 15 15" ><path d="M2 7Q.5 9.500 2.500 11.500L5.500 14.500H9L11.500 11.800Q14.800 11 13.800 7.500Q12.500 5 9.500 5.500H5Q3 5.500 2 7z" fill="#fff" stroke="#111" stroke-width="1.100"/><rect x="5.8" y="0.2" width="4" height="8.5" fill="#4454c4"/><rect x="7.1" y="0.2" width="1.300" height="8.5" fill="#98a4f0"/><path d="M5.8 8.7h4" stroke="#2c3894" stroke-width="1"/></svg>
<svg style="left:1187.5px;top:317px" width="8" height="16" viewBox="0 0 8 16" ><path d="M3.700 .6Q6.800 .6 6.600 3.600Q6.200 6.500 4.800 9.500H2.600Q1.200 6.500 .8 3.600Q.6 .6 3.700 .6z" fill="#f6e03c" stroke="#c8a41c" stroke-width=".8"/><path d="M2.500 2.500Q2.300 4.500 3 6.500" stroke="#fff8b0" stroke-width=".9" fill="none"/><circle cx="3.700" cy="12.800" r="1.700" fill="#fdf4a0" stroke="#c8a41c" stroke-width="1"/></svg>
<svg style="left:1313px;top:319.5px" width="13" height="12" viewBox="0 0 13 12" ><path d="M.8 6.200L3.200 4.600L5 8.200Q8 3 12 .6L12.800 1.500Q8.500 6 5.500 11.600L4 11.800z" fill="#30b83c" stroke="#189028" stroke-width=".5"/></svg>
<svg style="left:1200px;top:317.8px" width="15" height="15" viewBox="0 0 15 15" ><path d="M3 8.500L8.500 5.500L14.500 8V12L9 15L3 12z" fill="#c4c4c4" stroke="#444" stroke-width=".8"/><path d="M3 8.500L9 11L14.500 8M9 11V15" fill="none" stroke="#444" stroke-width=".8"/><path d="M5.500 7.200L8 8.200L10.500 6.800" fill="none" stroke="#666" stroke-width="1.400"/><rect x="0.5" y="0.2" width="4" height="7.5" fill="#4454c4"/><rect x="1.8" y="0.2" width="1.300" height="7.5" fill="#98a4f0"/><path d="M0.5 7.7h4" stroke="#2c3894" stroke-width="1"/></svg>
<svg style="left:1187.5px;top:337px" width="8" height="16" viewBox="0 0 8 16" ><path d="M3.700 .6Q6.800 .6 6.600 3.600Q6.200 6.500 4.800 9.500H2.600Q1.200 6.500 .8 3.600Q.6 .6 3.700 .6z" fill="#f6e03c" stroke="#c8a41c" stroke-width=".8"/><path d="M2.500 2.500Q2.300 4.500 3 6.500" stroke="#fff8b0" stroke-width=".9" fill="none"/><circle cx="3.700" cy="12.800" r="1.700" fill="#fdf4a0" stroke="#c8a41c" stroke-width="1"/></svg>
<svg style="left:1313px;top:339.5px" width="13" height="12" viewBox="0 0 13 12" ><path d="M.8 6.200L3.200 4.600L5 8.200Q8 3 12 .6L12.800 1.500Q8.500 6 5.500 11.600L4 11.800z" fill="#30b83c" stroke="#189028" stroke-width=".5"/></svg>
<svg style="left:1200px;top:337.8px" width="15" height="15" viewBox="0 0 15 15" ><path d="M.6 2.500V14H14" fill="none" stroke="#a8a8a8" stroke-width="1.200"/><path d="M2.800 2.500V11.800H14" fill="none" stroke="#111" stroke-width="1.400"/><rect x="7" y="0.2" width="4" height="8.5" fill="#4454c4"/><rect x="8.3" y="0.2" width="1.300" height="8.5" fill="#98a4f0"/><path d="M7 8.7h4" stroke="#2c3894" stroke-width="1"/><path d="M4 5.500H6.500M4 8.500H6.500M11.500 5.500H14.500M11.500 8.500H14.500" stroke="#2c3cb4" stroke-width="1.100"/></svg>
<svg style="left:1187.5px;top:357px" width="8" height="16" viewBox="0 0 8 16" ><path d="M3.700 .6Q6.800 .6 6.600 3.600Q6.200 6.500 4.800 9.500H2.600Q1.200 6.500 .8 3.600Q.6 .6 3.700 .6z" fill="#f6e03c" stroke="#c8a41c" stroke-width=".8"/><path d="M2.500 2.500Q2.300 4.500 3 6.500" stroke="#fff8b0" stroke-width=".9" fill="none"/><circle cx="3.700" cy="12.800" r="1.700" fill="#fdf4a0" stroke="#c8a41c" stroke-width="1"/></svg>
<svg style="left:1313px;top:359.5px" width="13" height="12" viewBox="0 0 13 12" ><path d="M.8 6.200L3.200 4.600L5 8.200Q8 3 12 .6L12.800 1.500Q8.500 6 5.500 11.600L4 11.800z" fill="#30b83c" stroke="#189028" stroke-width=".5"/></svg>
<svg style="left:1200px;top:357.8px" width="15" height="15" viewBox="0 0 15 15" ><path d="M3 8.500L8.500 5.500L14.500 8V12L9 15L3 12z" fill="#c4c4c4" stroke="#444" stroke-width=".8"/><path d="M3 8.500L9 11L14.500 8M9 11V15" fill="none" stroke="#444" stroke-width=".8"/><path d="M5.500 7.200L8 8.200L10.500 6.800" fill="none" stroke="#666" stroke-width="1.400"/><rect x="0.5" y="0.2" width="4" height="7.5" fill="#4454c4"/><rect x="1.8" y="0.2" width="1.300" height="7.5" fill="#98a4f0"/><path d="M0.5 7.7h4" stroke="#2c3894" stroke-width="1"/></svg>
<svg style="left:1187.5px;top:377px" width="8" height="16" viewBox="0 0 8 16" ><path d="M3.700 .6Q6.800 .6 6.600 3.600Q6.200 6.500 4.800 9.500H2.600Q1.200 6.500 .8 3.600Q.6 .6 3.700 .6z" fill="#f6e03c" stroke="#c8a41c" stroke-width=".8"/><path d="M2.500 2.500Q2.300 4.500 3 6.500" stroke="#fff8b0" stroke-width=".9" fill="none"/><circle cx="3.700" cy="12.800" r="1.700" fill="#fdf4a0" stroke="#c8a41c" stroke-width="1"/></svg>
<svg style="left:1313px;top:379.5px" width="13" height="12" viewBox="0 0 13 12" ><path d="M.8 6.200L3.200 4.600L5 8.200Q8 3 12 .6L12.800 1.500Q8.500 6 5.500 11.600L4 11.800z" fill="#30b83c" stroke="#189028" stroke-width=".5"/></svg>
<svg style="left:1200px;top:377.8px" width="15" height="15" viewBox="0 0 15 15" ><rect x="6" y="2" width="8.500" height="10.500" fill="#a8e4f8"/><path d="M.8 2.500H3.500Q3.500 9.500 10.500 12V14.500Q.8 13 .8 2.500z" fill="#1c5c54" stroke="#0c3c38" stroke-width=".6"/><rect x="6.5" y="0.3" width="4" height="8" fill="#4454c4"/><rect x="7.8" y="0.3" width="1.300" height="8" fill="#98a4f0"/><path d="M6.5 8.3h4" stroke="#2c3894" stroke-width="1"/><path d="M10.500 10.500H14.500M11.500 13H14.500" stroke="#1c2c8c" stroke-width="1.100"/></svg>
<svg style="left:1187.5px;top:397px" width="8" height="16" viewBox="0 0 8 16" ><path d="M3.700 .6Q6.800 .6 6.600 3.600Q6.200 6.500 4.800 9.500H2.600Q1.200 6.500 .8 3.600Q.6 .6 3.700 .6z" fill="#f6e03c" stroke="#c8a41c" stroke-width=".8"/><path d="M2.500 2.500Q2.300 4.500 3 6.500" stroke="#fff8b0" stroke-width=".9" fill="none"/><circle cx="3.700" cy="12.800" r="1.700" fill="#fdf4a0" stroke="#c8a41c" stroke-width="1"/></svg>
<svg style="left:1313px;top:399.5px" width="13" height="12" viewBox="0 0 13 12" ><path d="M.8 6.200L3.200 4.600L5 8.200Q8 3 12 .6L12.800 1.500Q8.500 6 5.500 11.600L4 11.800z" fill="#30b83c" stroke="#189028" stroke-width=".5"/></svg>
<svg style="left:1200px;top:397.8px" width="15" height="15" viewBox="0 0 15 15" ><path d="M.6 2.500V14H14" fill="none" stroke="#a8a8a8" stroke-width="1.200"/><path d="M2.800 2.500V11.800H14" fill="none" stroke="#111" stroke-width="1.400"/><rect x="7" y="0.2" width="4" height="8.5" fill="#4454c4"/><rect x="8.3" y="0.2" width="1.300" height="8.5" fill="#98a4f0"/><path d="M7 8.7h4" stroke="#2c3894" stroke-width="1"/><path d="M4 5.500H6.500M4 8.500H6.500M11.500 5.500H14.500M11.500 8.500H14.500" stroke="#2c3cb4" stroke-width="1.100"/></svg>
<svg style="left:1187.5px;top:417px" width="8" height="16" viewBox="0 0 8 16" ><path d="M3.700 .6Q6.800 .6 6.600 3.600Q6.200 6.500 4.800 9.500H2.600Q1.200 6.500 .8 3.600Q.6 .6 3.700 .6z" fill="#f6e03c" stroke="#c8a41c" stroke-width=".8"/><path d="M2.500 2.500Q2.300 4.500 3 6.500" stroke="#fff8b0" stroke-width=".9" fill="none"/><circle cx="3.700" cy="12.800" r="1.700" fill="#fdf4a0" stroke="#c8a41c" stroke-width="1"/></svg>
<svg style="left:1313px;top:419.5px" width="13" height="12" viewBox="0 0 13 12" ><path d="M.8 6.200L3.200 4.600L5 8.200Q8 3 12 .6L12.800 1.500Q8.500 6 5.500 11.600L4 11.800z" fill="#30b83c" stroke="#189028" stroke-width=".5"/></svg>
<svg style="left:1200px;top:417.8px" width="15" height="15" viewBox="0 0 15 15" ><rect x="6" y="2" width="8.500" height="10.500" fill="#a8e4f8"/><path d="M.8 2.500H3.500Q3.500 9.500 10.500 12V14.500Q.8 13 .8 2.500z" fill="#1c5c54" stroke="#0c3c38" stroke-width=".6"/><rect x="6.5" y="0.3" width="4" height="8" fill="#4454c4"/><rect x="7.8" y="0.3" width="1.300" height="8" fill="#98a4f0"/><path d="M6.5 8.3h4" stroke="#2c3894" stroke-width="1"/><path d="M10.500 10.500H14.500M11.500 13H14.500" stroke="#1c2c8c" stroke-width="1.100"/></svg>
<svg style="left:1166px;top:439.3px" width="13" height="12" viewBox="0 0 13 12" ><path d="M.8 6.200L3.200 4.600L5 8.200Q8 3 12 .6L12.800 1.500Q8.500 6 5.500 11.600L4 11.800z" fill="#30b83c" stroke="#189028" stroke-width=".5"/></svg>
<svg style="left:1181px;top:439px" width="14" height="13" viewBox="0 0 14 13" ><path d="M.5 2.200Q.5 1 1.500 1H5L6.200 2.500H13.500V12.500H.5z" fill="#f4e49c" stroke="#b89c48" stroke-width=".9"/><path d="M1.200 3.500H12.800V6H1.200z" fill="#fbf4cc"/><rect x="6.800" y="5" width="6.200" height="6.800" fill="#f4f0e0" stroke="#8c8878" stroke-width=".4"/><path d="M8 6.200H12V8.300H8.500V10.500H12" fill="none" stroke="#1c1c8c" stroke-width="1.250"/></svg>
<svg style="left:1166px;top:459.3px" width="13" height="12" viewBox="0 0 13 12" ><path d="M.8 6.200L3.200 4.600L5 8.200Q8 3 12 .6L12.800 1.500Q8.500 6 5.500 11.600L4 11.800z" fill="#30b83c" stroke="#189028" stroke-width=".5"/></svg>
<svg style="left:1181px;top:459px" width="14" height="13" viewBox="0 0 14 13" ><path d="M.5 2.200Q.5 1 1.500 1H5L6.200 2.500H13.500V12.500H.5z" fill="#f4e49c" stroke="#b89c48" stroke-width=".9"/><path d="M1.200 3.500H12.800V6H1.200z" fill="#fbf4cc"/><rect x="6.800" y="5" width="6.200" height="6.800" fill="#f4f0e0" stroke="#8c8878" stroke-width=".4"/><path d="M8 6.200H12V8.300H8.500V10.500H12" fill="none" stroke="#1c1c8c" stroke-width="1.250"/></svg>
<svg style="left:1166px;top:479.3px" width="13" height="12" viewBox="0 0 13 12" ><path d="M.8 6.200L3.200 4.600L5 8.200Q8 3 12 .6L12.800 1.500Q8.500 6 5.500 11.600L4 11.800z" fill="#30b83c" stroke="#189028" stroke-width=".5"/></svg>
<svg style="left:1181px;top:479px" width="14" height="13" viewBox="0 0 14 13" ><path d="M.5 2.200Q.5 1 1.500 1H5L6.200 2.500H13.500V12.500H.5z" fill="#f4e49c" stroke="#b89c48" stroke-width=".9"/><path d="M1.200 3.500H12.800V6H1.200z" fill="#fbf4cc"/><rect x="6.800" y="5" width="6.200" height="6.800" fill="#f4f0e0" stroke="#8c8878" stroke-width=".4"/><path d="M8 6.200H12V8.300H8.500V10.500H12" fill="none" stroke="#1c1c8c" stroke-width="1.250"/></svg>
<svg style="left:1166px;top:499.3px" width="13" height="12" viewBox="0 0 13 12" ><path d="M.8 6.200L3.200 4.600L5 8.200Q8 3 12 .6L12.800 1.500Q8.500 6 5.500 11.600L4 11.800z" fill="#30b83c" stroke="#189028" stroke-width=".5"/></svg>
<svg style="left:1181px;top:499px" width="14" height="13" viewBox="0 0 14 13" ><path d="M.5 2.200Q.5 1 1.500 1H5L6.200 2.500H13.500V12.500H.5z" fill="#f4e49c" stroke="#b89c48" stroke-width=".9"/><path d="M1.200 3.500H12.800V6H1.200z" fill="#fbf4cc"/><rect x="6.800" y="5" width="6.200" height="6.800" fill="#f4f0e0" stroke="#8c8878" stroke-width=".4"/><path d="M8 6.200H12V8.300H8.500V10.500H12" fill="none" stroke="#1c1c8c" stroke-width="1.250"/></svg>
<svg style="left:1166px;top:519.3px" width="13" height="12" viewBox="0 0 13 12" ><path d="M.8 6.200L3.200 4.600L5 8.200Q8 3 12 .6L12.800 1.500Q8.500 6 5.500 11.600L4 11.800z" fill="#30b83c" stroke="#189028" stroke-width=".5"/></svg>
<svg style="left:1181px;top:519px" width="14" height="13" viewBox="0 0 14 13" ><path d="M.5 2.200Q.5 1 1.500 1H5L6.200 2.500H13.500V12.500H.5z" fill="#f4e49c" stroke="#b89c48" stroke-width=".9"/><path d="M1.200 3.500H12.800V6H1.200z" fill="#fbf4cc"/><rect x="6.800" y="5" width="6.200" height="6.800" fill="#f4f0e0" stroke="#8c8878" stroke-width=".4"/><path d="M8 6.200H12V8.300H8.500V10.500H12" fill="none" stroke="#1c1c8c" stroke-width="1.250"/></svg>
<svg style="left:1147px;top:539.3px" width="13" height="12" viewBox="0 0 13 12" ><path d="M.8 6.200L3.200 4.600L5 8.200Q8 3 12 .6L12.800 1.500Q8.500 6 5.500 11.600L4 11.800z" fill="#30b83c" stroke="#189028" stroke-width=".5"/></svg>
<svg style="left:1162.5px;top:539px" width="14" height="13" viewBox="0 0 14 13" ><path d="M.5 2.200Q.5 1 1.500 1H5L6.200 2.500H13.500V12.500H.5z" fill="#f4e49c" stroke="#b89c48" stroke-width=".9"/><path d="M1.200 3.500H12.800V6H1.200z" fill="#fbf4cc"/><rect x="6.800" y="5" width="6.200" height="6.800" fill="#f4f0e0" stroke="#8c8878" stroke-width=".4"/><path d="M8 6.200H12V8.300H8.500V10.500H12" fill="none" stroke="#1c1c8c" stroke-width="1.250"/></svg>
<svg style="left:1378px;top:137px" width="11" height="10" viewBox="0 0 11 10" ><path d="M.5 9.500L3.500 6.500" stroke="#222" stroke-width="1.200"/><path d="M2.500 5.500Q2 2 5.500 1L8.500 .8Q10.800 2 9.800 5Q8.500 8.200 5 8.200Q3.200 7.500 2.500 5.500z" fill="#1c1c1c"/><ellipse cx="6.800" cy="3.600" rx="2.500" ry="2" fill="#f0e8b8"/></svg>
<div style="left:1125px;top:648px;width:268px;height:17px;background:linear-gradient(#f1efe6,#fdfdfb)"></div>
<div style="left:1127px;top:648.5px;width:14.5px;height:15px;background:linear-gradient(#c9d8f6,#aec3ee);border:1px solid #e6eefb;border-radius:2px;box-shadow:0 0 0 .5px #9fb3dc"></div>
<svg style="left:1127px;top:648.5px" width="14.5" height="15" viewBox="0 0 14.5 15" ><path d="M9.5 3.2L5 7.5L9.5 11.8" stroke="#3a5aa8" stroke-width="2" fill="none"/></svg>
<div style="left:1376px;top:648.5px;width:14.5px;height:15px;background:linear-gradient(#c9d8f6,#aec3ee);border:1px solid #e6eefb;border-radius:2px;box-shadow:0 0 0 .5px #9fb3dc"></div>
<svg style="left:1376px;top:648.5px" width="14.5" height="15" viewBox="0 0 14.5 15" ><path d="M5 3.2L9.5 7.5L5 11.8" stroke="#3a5aa8" stroke-width="2" fill="none"/></svg>
<div style="left:1144px;top:648.5px;width:124.5px;height:15px;background:linear-gradient(#c4d3f5,#b0c5f0 60%,#a9bfee);border:1px solid #e9effb;border-radius:2px;box-shadow:0 0 0 .5px #9fb3dc"></div>
<div style="left:1202.5px;top:652px;width:8px;height:8px;background-image:linear-gradient(to right,#e8eefc 50%,transparent 50%);background-size:2px 8px"></div>
<div style="left:1124px;top:670.5px;width:270px;height:1px;background:#bcbcbc"></div>
<div style="left:1124px;top:671.5px;width:270px;height:1px;background:#fbfbfb"></div>
<div style="left:1231px;top:668px;width:56px;height:8px;background:#ebebeb"></div>
<div style="left:1236.5px;top:669.5px;width:46px;height:5px;background:#cdcdcd;border:1px solid #bdbdbd;border-top-color:#dadada"></div>
<div style="left:1124.5px;top:678px;width:269px;height:23px;background:linear-gradient(#fafafa 0,#f0f0f0 48%,#dedede 54%,#e3e3e3 100%);border-top:1px solid #fff;border-bottom:1.5px solid #9a9a9a"></div>
<div style="left:1370px;top:678px;width:1px;height:22px;background:#c4c4c4"></div>
<div style="left:1371px;top:678px;width:1px;height:22px;background:#fff"></div>
<div class="t" style="left:1131px;top:684px;color:#000"><svg width="40" height="14" aria-hidden="true"><use href="#g12_76f8" x="0"/><use href="#g12_76f8" x="1"/><use href="#g12_4f9d" x="13"/><use href="#g12_4f9d" x="14"/><use href="#g12_6027" x="26"/><use href="#g12_6027" x="27"/></svg><span class="sr">相依性</span></div>
<svg style="left:1375px;top:685px" width="14" height="10" viewBox="0 0 14 10" ><path d="M1.8 1.2L7 7.8L12.2 1.2" stroke="#555" stroke-width="2.3" fill="none"/></svg>
<div style="left:1124.5px;top:701px;width:269px;height:23px;background:linear-gradient(#fafafa 0,#f0f0f0 48%,#dedede 54%,#e3e3e3 100%);border-top:1px solid #fff;border-bottom:1.5px solid #9a9a9a"></div>
<div style="left:1370px;top:701px;width:1px;height:22px;background:#c4c4c4"></div>
<div style="left:1371px;top:701px;width:1px;height:22px;background:#fff"></div>
<div class="t" style="left:1131px;top:707px;color:#000"><svg width="27" height="14" aria-hidden="true"><use href="#g12_7ec6" x="0"/><use href="#g12_7ec6" x="1"/><use href="#g12_8282" x="13"/><use href="#g12_8282" x="14"/></svg><span class="sr">细节</span></div>
<svg style="left:1375px;top:708px" width="14" height="10" viewBox="0 0 14 10" ><path d="M1.8 1.2L7 7.8L12.2 1.2" stroke="#555" stroke-width="2.3" fill="none"/></svg>
<div style="left:1112px;top:727.5px;width:323px;height:1px;background:#7a7a7a"></div>
<div style="left:0px;top:727.5px;width:589.5px;height:2.5px;background:#eef3f9"></div>
<div style="left:859px;top:727.5px;width:253px;height:2.5px;background:#eef3f9"></div>
<div style="left:1112px;top:728.5px;width:323px;height:1.5px;background:#fff"></div>
<div style="left:1403.5px;top:123px;width:31.5px;height:605px;background:linear-gradient(to right,#9a9a9a,#b4b4b4 30%,#bdbdbd)"></div>
<div style="left:1403.5px;top:139.5px;width:25.5px;height:40px;background:linear-gradient(to right,#d4d4d4,#e3e3e3 40%,#dddddd);border:1px solid #868686;border-left:none;border-radius:0 6px 6px 0;box-shadow:1px 1px 0 #9c9c9c"></div>
<svg style="left:1403px;top:139.5px" width="30" height="44" viewBox="0 0 30 44" ><path d="M3 9l4 -2l4 2l-4 2z" fill="#fdf08c"/><path d="M3 9l4 2v4.4l-4 -2z" fill="#f0cc30"/><path d="M7 11l4 -2v4.4l-4 2z" fill="#d8a818"/><path d="M7.5 13l4 -2l4 2l-4 2z" fill="#fdf08c"/><path d="M7.5 13l4 2v4.4l-4 -2z" fill="#f0cc30"/><path d="M11.5 15l4 -2v4.4l-4 2z" fill="#d8a818"/><path d="M14 22.875l3.75 -1.875l3.75 1.875l-3.75 1.875z" fill="#fdf08c"/><path d="M14 22.875l3.75 1.875v4.125l-3.75 -1.875z" fill="#f0cc30"/><path d="M17.75 24.75l3.75 -1.875v4.125l-3.75 1.875z" fill="#d8a818"/><path d="M6.500 19.500V31M6.500 25.500H12.500" stroke="#1c2ca4" stroke-width="1.300" fill="none"/><path d="M15.500 19.500H24" stroke="#111" stroke-width="1.200"/></svg>
<div style="left:1403.5px;top:182px;width:25.5px;height:39px;background:linear-gradient(to right,#d4d4d4,#e3e3e3 40%,#dddddd);border:1px solid #868686;border-left:none;border-radius:0 6px 6px 0;box-shadow:1px 1px 0 #9c9c9c"></div>
<svg style="left:1403px;top:182px" width="30" height="44" viewBox="0 0 30 44" ><path d="M2.500 10V16.500Q7.500 19.500 12.500 16.500V10z" fill="#e49ce0" stroke="#8c2c8c" stroke-width=".9"/><ellipse cx="7.500" cy="10" rx="5" ry="2.300" fill="#f8c8f4" stroke="#8c2c8c" stroke-width=".9"/><path d="M6.500 19V30M6.500 25H12" stroke="#1c2ca4" stroke-width="1.300" fill="none"/><path d="M15 18H24" stroke="#111" stroke-width="1.200"/><circle cx="17.800" cy="25.500" r="4" fill="#fbe4f8" stroke="#8c2c8c" stroke-width="1.100"/><circle cx="17.800" cy="25.500" r="1.400" fill="#8c2c8c"/></svg>
<div style="left:1400px;top:221.5px;width:31.5px;height:43px;background:#ebebeb;border:1px solid #c4c4c4;border-left:none;border-radius:0 6px 6px 0"></div>
<svg style="left:1403px;top:221.5px" width="30" height="44" viewBox="0 0 30 44" ><path d="M3.500 10h4v8.500h1.500l-3.500 3.500l-3.500-3.500h1.500z" fill="#2c5cd0"/><path d="M8.500 13.500L17.500 12L16 13.800L8.500 15zM8.500 16.300L15.500 15.200L14 17L8.500 17.800z" fill="#3c6cd8"/><path d="M6 22V33.500M6 28H11.500" stroke="#1c2ca4" stroke-width="1.300" fill="none"/><path d="M14 20.500H23" stroke="#111" stroke-width="1.200"/><path d="M14.500 25H17.500V28H21.500V31.500H14.500z" fill="#d8e4fc" stroke="#2c4cb4" stroke-width="1"/></svg>
<div style="left:1403.5px;top:265.7px;width:25.5px;height:39px;background:linear-gradient(to right,#d4d4d4,#e3e3e3 40%,#dddddd);border:1px solid #868686;border-left:none;border-radius:0 6px 6px 0;box-shadow:1px 1px 0 #9c9c9c"></div>
<svg style="left:1403px;top:265.7px" width="30" height="44" viewBox="0 0 30 44" ><path d="M1.500 12.500L17.500 8.500V22.500L1.500 28.500z" fill="#fff" /><path d="M1.5 13.5l3.300 -.8v2.800l-3.300 .9z" fill="#f8e088"/><path d="M5.5 12.5l3.300 -.8v2.800l-3.300 .9z" fill="#f4b860"/><path d="M9.5 11.5l3.300 -.8v2.800l-3.300 .9z" fill="#f09840"/><path d="M13.5 10.5l3.300 -.8v2.800l-3.300 .9z" fill="#f8e088"/><path d="M1.5 17.2l3.300 -.8v2.800l-3.300 .9z" fill="#f4b860"/><path d="M5.5 16.2l3.300 -.8v2.800l-3.300 .9z" fill="#f09840"/><path d="M9.5 15.2l3.300 -.8v2.800l-3.300 .9z" fill="#f8e088"/><path d="M13.5 14.2l3.300 -.8v2.800l-3.300 .9z" fill="#f4b860"/><path d="M1.5 20.9l3.300 -.8v2.800l-3.300 .9z" fill="#f09840"/><path d="M5.5 19.9l3.300 -.8v2.800l-3.300 .9z" fill="#f8e088"/><path d="M9.5 18.9l3.300 -.8v2.800l-3.300 .9z" fill="#f4b860"/><path d="M13.5 17.9l3.300 -.8v2.800l-3.300 .9z" fill="#f09840"/><path d="M1.5 24.6l3.300 -.8v2.800l-3.300 .9z" fill="#f8e088"/><path d="M5.5 23.6l3.300 -.8v2.800l-3.300 .9z" fill="#f4b860"/><path d="M9.5 22.6l3.300 -.8v2.800l-3.300 .9z" fill="#f09840"/><path d="M13.5 21.6l3.300 -.8v2.800l-3.300 .9z" fill="#f8e088"/><path d="M1.500 12.500L17.500 8.500" stroke="#7c3cb4" stroke-width="1.500"/><path d="M8.500 21.500L17 17.500L25.500 20.500V27L17 31.500L8.500 27.500z" fill="#f0983c"/><path d="M8.500 21.500L17 17.500L25.500 20.500L17 24.500z" fill="#f8c078"/><path d="M17 24.500L25.500 20.500V27L17 31.500z" fill="#2c5cc8"/><path d="M11 22L17 19.500L22 21.500L16.500 23.800z" fill="#e8e8e8"/></svg>
<div style="left:1403.5px;top:307.6px;width:25.5px;height:39.6px;background:linear-gradient(to right,#d4d4d4,#e3e3e3 40%,#dddddd);border:1px solid #868686;border-left:none;border-radius:0 6px 6px 0;box-shadow:1px 1px 0 #9c9c9c"></div>
<svg style="left:1403px;top:307.6px" width="30" height="44" viewBox="0 0 30 44" ><path d="M14.500 7L19 5L23.500 7V12L19 14L14.500 12z" fill="#f8d880" stroke="#c89830" stroke-width=".7"/><path d="M14.500 7L19 9L23.500 7M19 9V14" fill="none" stroke="#c89830" stroke-width=".6"/><path d="M7.500 10Q10 6.500 13.500 8.500L11.500 11.500Q9.500 10.500 8.500 12.500z" fill="#e8883c"/><path d="M2 16.500H19V28H2z" fill="#d4d4d4" stroke="#666" stroke-width=".9"/><path d="M4 18.500H9.500V26H4zM11.500 18.500H17V26H11.500z" fill="#f4f4f4" stroke="#777" stroke-width=".7"/><path d="M5 24L8.500 19.500" stroke="#3c5cc0" stroke-width="1.300"/><path d="M19 21.500H24.500V24H21.500V27H24.500V29.500H2V28H19z" fill="#9c9c9c" stroke="#444" stroke-width=".7"/></svg>
<div style="left:1403.5px;top:349.2px;width:25.5px;height:39.6px;background:linear-gradient(to right,#d4d4d4,#e3e3e3 40%,#dddddd);border:1px solid #868686;border-left:none;border-radius:0 6px 6px 0;box-shadow:1px 1px 0 #9c9c9c"></div>
<svg style="left:1403px;top:349.2px" width="30" height="44" viewBox="0 0 30 44" ><path d="M1.5 14.500L5.5 9.500H12L8 14.500z" fill="#f4f4f4" stroke="#c86810" stroke-width=".6"/><rect x="1.5" y="14.500" width="6.500" height="16.500" fill="#f09028" stroke="#c86810" stroke-width=".6"/><path d="M2.5 18h4.500M2.5 27h4.500" stroke="#c86810" stroke-width="1.200"/><path d="M8 14.500L12 9.500H18.5L14.5 14.500z" fill="#f4f4f4" stroke="#188828" stroke-width=".6"/><rect x="8" y="14.500" width="6.500" height="16.500" fill="#38c048" stroke="#188828" stroke-width=".6"/><path d="M9 18h4.500M9 27h4.500" stroke="#188828" stroke-width="1.200"/><path d="M14.5 14.500L18.5 9.500H25L21 14.500z" fill="#f4f4f4" stroke="#1c5cc0" stroke-width=".6"/><rect x="14.5" y="14.500" width="6.500" height="16.500" fill="#3c8cf0" stroke="#1c5cc0" stroke-width=".6"/><path d="M15.5 18h4.500M15.5 27h4.500" stroke="#1c5cc0" stroke-width="1.200"/><path d="M21 14.500L25 9.500V26L21 31z" fill="#2c6cd0"/></svg>
<div style="left:1403.5px;top:403.6px;width:25.5px;height:39.6px;background:linear-gradient(to right,#d4d4d4,#e3e3e3 40%,#dddddd);border:1px solid #868686;border-left:none;border-radius:0 6px 6px 0;box-shadow:1px 1px 0 #9c9c9c"></div>
<svg style="left:1403px;top:403.6px" width="30" height="44" viewBox="0 0 30 44" ><path d="M9.500 9Q19.500 7.500 22.500 19.500" fill="none" stroke="#2c5cc0" stroke-width="2.200"/><path d="M9 13.500Q16 12.500 18.500 21" fill="none" stroke="#2c5cc0" stroke-width="2.200"/><circle cx="8.500" cy="23" r="7.500" fill="#2468d8" stroke="#1444a4" stroke-width=".8"/><ellipse cx="7.500" cy="19.500" rx="5" ry="3" fill="#6ca4f4" opacity=".7"/><rect x="7.300" y="17.800" width="2.600" height="2.400" fill="#fff"/><path d="M6.200 21.500h3.700v4.700h1.300v1.400H6.200v-1.400h1.300v-3.300H6.200z" fill="#fff"/></svg>
<div style="left:1403.5px;top:457.6px;width:25.5px;height:39px;background:linear-gradient(to right,#d4d4d4,#e3e3e3 40%,#dddddd);border:1px solid #868686;border-left:none;border-radius:0 6px 6px 0;box-shadow:1px 1px 0 #9c9c9c"></div>
<svg style="left:1403px;top:457.6px" width="30" height="44" viewBox="0 0 30 44" ><path d="M4 8.500H15.500L21.500 14.500V30.500H4z" fill="#fafcff" stroke="#3c6cc0" stroke-width="1.200"/><path d="M15.500 8.500V14.500H21.500" fill="#d4e0f8" stroke="#3c6cc0" stroke-width="1"/><circle cx="12.500" cy="22.500" r="5.800" fill="#2c9848"/><path d="M8.500 19.500q3-2.500 5.500-.5t-1 4t-4.500-3.500zM13 25q2.500-1 4 .5q-1.500 2.500-4 2z" fill="#8cd8f0"/><circle cx="12.500" cy="22.500" r="5.800" fill="none" stroke="#1c6c34" stroke-width=".7"/></svg>
<div style="left:1403.5px;top:511.5px;width:25.5px;height:39px;background:linear-gradient(to right,#d4d4d4,#e3e3e3 40%,#dddddd);border:1px solid #868686;border-left:none;border-radius:0 6px 6px 0;box-shadow:1px 1px 0 #9c9c9c"></div>
<svg style="left:1403px;top:511.5px" width="30" height="44" viewBox="0 0 30 44" ><circle cx="13" cy="19" r="10.500" fill="#d4d8e4" stroke="#7c8498" stroke-width="1"/><circle cx="13" cy="19" r="8.200" fill="#fcfcff" stroke="#a4acc0" stroke-width=".8"/><path d="M13 13V19.500H18.500" stroke="#111" stroke-width="1.700" fill="none"/><path d="M13 11.500v1M13 25.500v1M5.500 19h1M19.500 19h1" stroke="#3c4c8c" stroke-width="1"/></svg>
<div style="left:1403.5px;top:553.6px;width:25.5px;height:39px;background:linear-gradient(to right,#d4d4d4,#e3e3e3 40%,#dddddd);border:1px solid #868686;border-left:none;border-radius:0 6px 6px 0;box-shadow:1px 1px 0 #9c9c9c"></div>
<svg style="left:1403px;top:553.6px" width="30" height="44" viewBox="0 0 30 44" ><path d="M4.500 12L10 9.500V27L4.500 30.500z" fill="#e4e4e4" stroke="#777" stroke-width=".9"/><rect x="10" y="9.500" width="14" height="19.500" fill="#fff" stroke="#666" stroke-width="1"/><circle cx="13.500" cy="14" r="2" fill="#3c7cd8"/><circle cx="13.500" cy="19" r="2" fill="#38a838"/><circle cx="13.500" cy="24" r="2" fill="#d03820"/><path d="M17 14h5M17 19h5M17 24h5" stroke="#333" stroke-width="1.100"/></svg>
<div style="left:1403.5px;top:595.2px;width:25.5px;height:39.4px;background:linear-gradient(to right,#d4d4d4,#e3e3e3 40%,#dddddd);border:1px solid #868686;border-left:none;border-radius:0 6px 6px 0;box-shadow:1px 1px 0 #9c9c9c"></div>
<svg style="left:1403px;top:595.2px" width="30" height="44" viewBox="0 0 30 44" ><defs><linearGradient id="tc1" x1="0" y1="0" x2="0" y2="1"><stop offset="0" stop-color="#e82818"/><stop offset=".22" stop-color="#f8a818"/><stop offset=".42" stop-color="#e8f028"/><stop offset=".6" stop-color="#38d048"/><stop offset=".8" stop-color="#28c0e8"/><stop offset="1" stop-color="#1c28d8"/></linearGradient></defs><rect x="2.500" y="8.500" width="8.200" height="22" fill="url(#tc1)"/><path d="M12 16.500L14.500 15L21.500 27.500L19.500 29z" fill="#111"/><path d="M11 14L12.500 13.200L14.500 15L12 16.500z" fill="#e8e8e8"/><circle cx="20.800" cy="28.800" r="1.400" fill="#f4f4f4"/></svg>
<div style="left:1403.5px;top:637px;width:25.5px;height:21px;background:linear-gradient(to right,#d6d6d6,#e4e4e4 40%,#dedede);border:1px solid #8a8a8a;border-left:none;border-bottom:none;border-radius:0 5px 0 0"></div>
<svg style="left:1403px;top:637px" width="30" height="44" viewBox="0 0 30 44" ><path d="M3 11.500H8V18H3z" fill="#3c6cd0"/><path d="M4 12.500l3 4M4 15l2 2.500" stroke="#c8d8ff" stroke-width=".8"/><path d="M9 10.500l3.500 8l1.500-2.500" fill="#fff" stroke="#111" stroke-width=".6"/><path d="M13.500 14.500H25" stroke="#3c5cb8" stroke-width="1.400"/></svg>
<svg style="left:1403px;top:652px" width="32" height="10" viewBox="0 0 32 10" ><path d="M0 6Q6 9.500 12 6T26 4.500V10H0z" fill="#adadad"/><path d="M0 6Q6 9.500 12 6T26 4.500" fill="none" stroke="#777" stroke-width=".9"/></svg>
<div style="left:1409.5px;top:663px;width:14.5px;height:14.5px;background:linear-gradient(#f2f2f2,#dadada);border:1px solid #fafafa;border-right-color:#8c8c8c;border-bottom-color:#8c8c8c"></div>
<div style="left:1409.5px;top:678.5px;width:14.5px;height:14.5px;background:linear-gradient(#f2f2f2,#dadada);border:1px solid #fafafa;border-right-color:#8c8c8c;border-bottom-color:#8c8c8c"></div>
<div style="left:1409.5px;top:694.5px;width:14.5px;height:14.5px;background:linear-gradient(#f2f2f2,#dadada);border:1px solid #fafafa;border-right-color:#8c8c8c;border-bottom-color:#8c8c8c"></div>
<div style="left:1409.5px;top:710.5px;width:14.5px;height:14.5px;background:linear-gradient(#f2f2f2,#dadada);border:1px solid #fafafa;border-right-color:#8c8c8c;border-bottom-color:#8c8c8c"></div>
<svg style="left:1409.5px;top:663px" width="14.5" height="62" viewBox="0 0 14.5 62" ><path d="M3.5 3.5h8M3.7 10L7.3 5.5L11 10zM3.7 25L7.3 20.5L11 25z" fill="#b8b8b8" stroke="#b8b8b8" stroke-width="1"/><path d="M3.4 36h8l-4 5zM3.4 52h8l-4 4.5zM3.4 58.5h8" fill="#444" stroke="#444" stroke-width="1"/></svg>
<svg class="wm" style="left:1217.5px;top:709.5px" width="54" height="16" role="img" aria-label="三维网"><g transform="scale(1.09 .9) skewX(-6)"><g stroke="#e23030" stroke-width="2.900" fill="none" stroke-linecap="square"><use href="#g16_4e09" x="0"/><use href="#g16_7ef4" x="16"/><use href="#g16_7f51" x="32"/></g><g stroke="#fff" stroke-width="1.150" fill="none"><use href="#g16_4e09" x="0"/><use href="#g16_7ef4" x="16"/><use href="#g16_7f51" x="32"/></g></g></svg>
<svg style="left:1267px;top:706px" width="152" height="22"><text x="1.500" y="15.600" font-family="Liberation Sans, sans-serif" font-weight="normal" font-size="14.500" textLength="147" lengthAdjust="spacingAndGlyphs" fill="#fff" stroke="#e02c2c" stroke-width="2.300" paint-order="stroke" stroke-linejoin="round">www.3dportal.cn</text></svg>
</div>
</body></html>
